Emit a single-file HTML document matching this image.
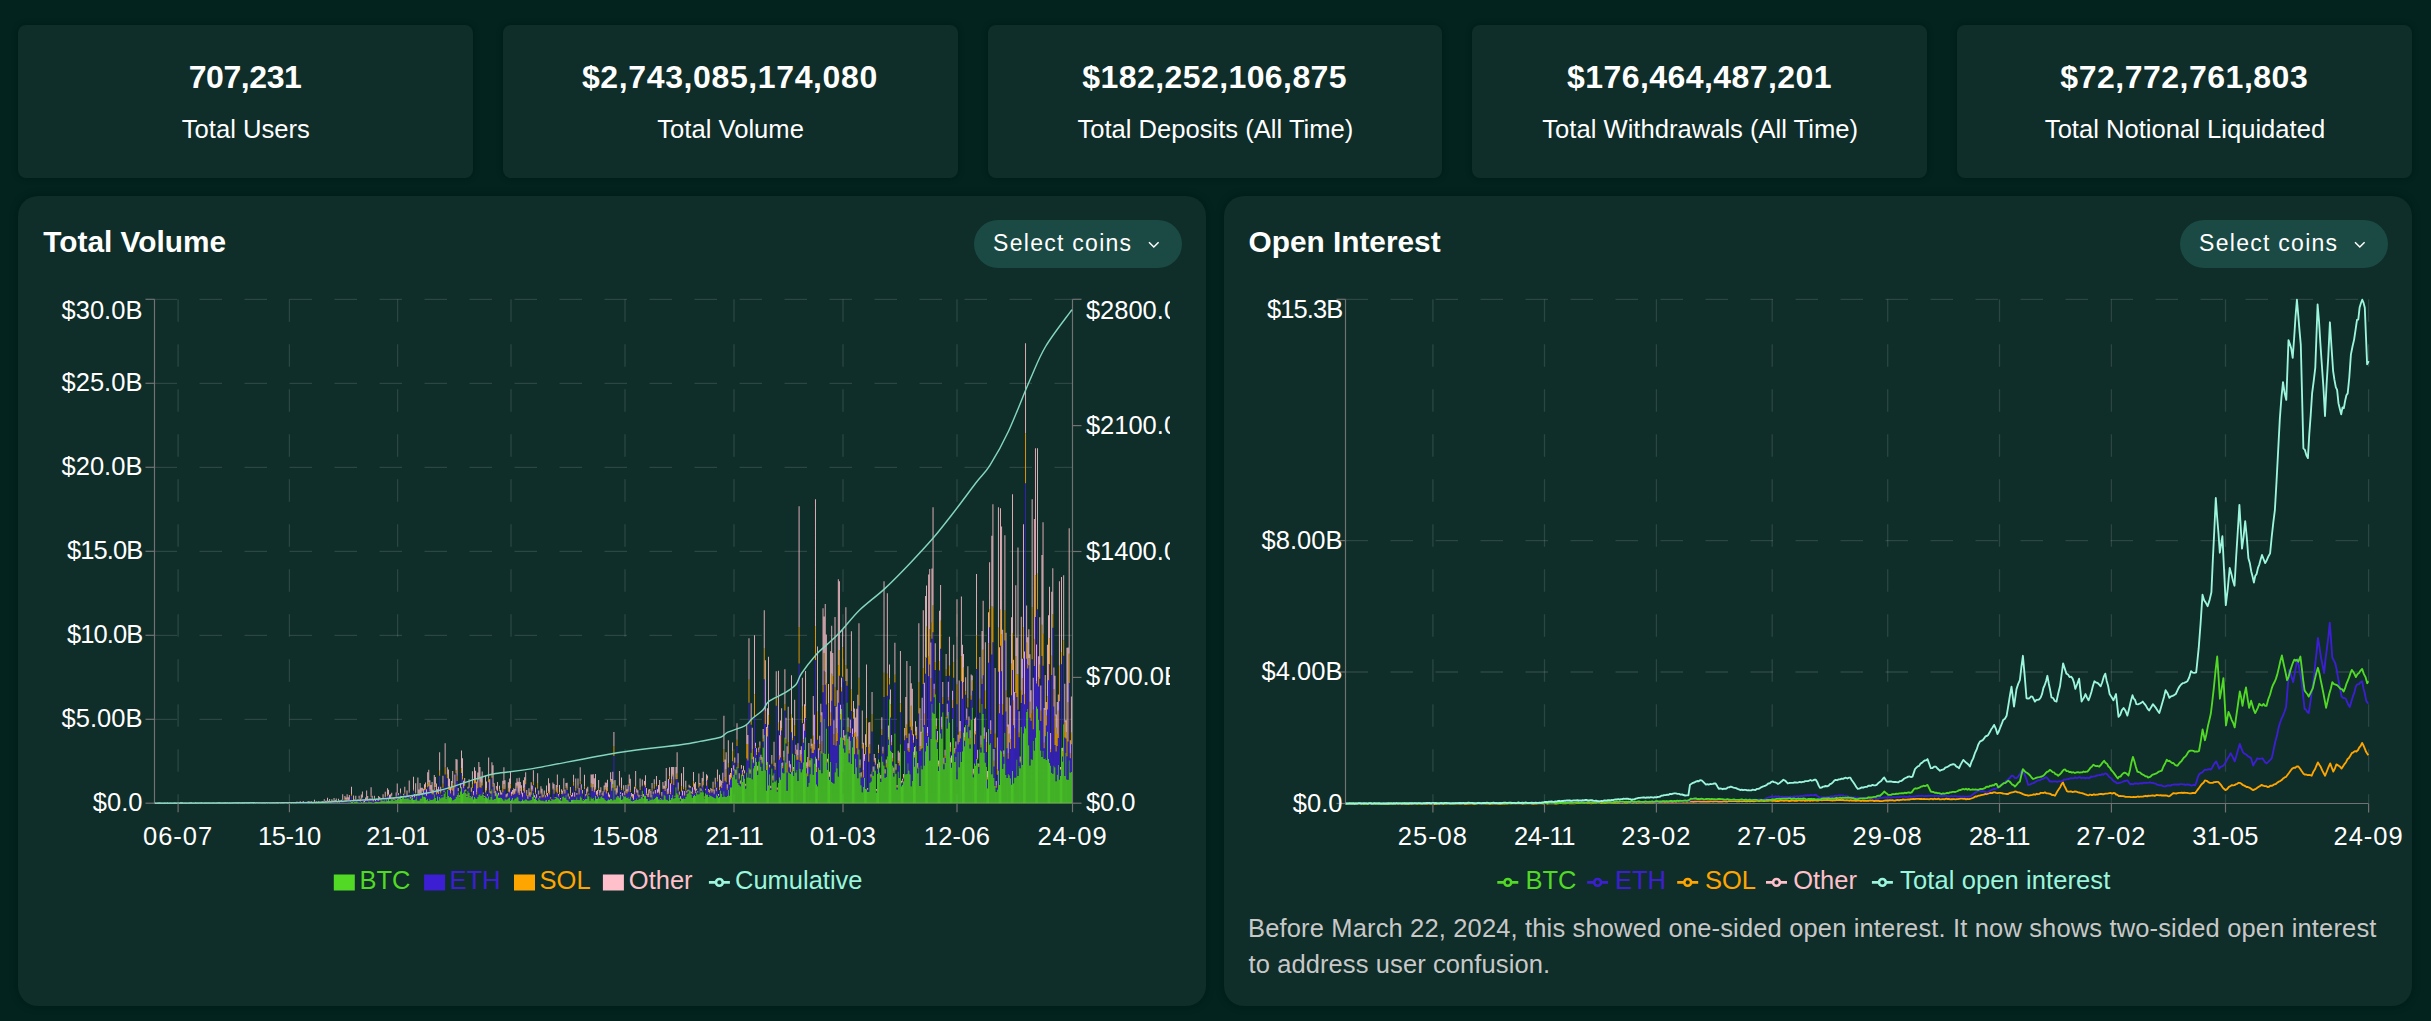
<!DOCTYPE html>
<html><head><meta charset="utf-8"><style>
html,body{margin:0;padding:0;width:2431px;height:1021px;overflow:hidden;background:#02231e;font-family:"Liberation Sans", sans-serif;}
.t{position:absolute;white-space:nowrap;}
.card{position:absolute;background:#0f2d29;border-radius:8px;box-shadow:0 0 6px rgba(0,0,0,0.25);}
.panel{position:absolute;background:#0f2d29;border-radius:20px;box-shadow:0 0 8px rgba(0,0,0,0.25);}
.btn{position:absolute;background:#1b4a44;border-radius:24px;}
svg{overflow:visible}
</style></head><body>

<div class="card" style="left:18.0px;top:25px;width:454.8px;height:153px"></div>
<div class="card" style="left:502.8px;top:25px;width:454.8px;height:153px"></div>
<div class="card" style="left:987.6px;top:25px;width:454.8px;height:153px"></div>
<div class="card" style="left:1472.4px;top:25px;width:454.8px;height:153px"></div>
<div class="card" style="left:1957.2px;top:25px;width:454.8px;height:153px"></div>
<div class="panel" style="left:18px;top:196px;width:1188px;height:810px"></div>
<div class="panel" style="left:1224px;top:196px;width:1188px;height:810px"></div>
<div class="btn" style="left:974px;top:220px;width:208px;height:48px"></div>
<div class="btn" style="left:2180px;top:220px;width:208px;height:48px"></div>
<svg style="position:absolute;left:0;top:0" width="2431" height="1021"><line x1="154.5" y1="299.3" x2="1072.5" y2="299.3" stroke="rgba(255,255,255,0.12)" stroke-width="1.3" stroke-dasharray="22.5 22.5"/><line x1="154.5" y1="383.3" x2="1072.5" y2="383.3" stroke="rgba(255,255,255,0.12)" stroke-width="1.3" stroke-dasharray="22.5 22.5"/><line x1="154.5" y1="467.3" x2="1072.5" y2="467.3" stroke="rgba(255,255,255,0.12)" stroke-width="1.3" stroke-dasharray="22.5 22.5"/><line x1="154.5" y1="551.3" x2="1072.5" y2="551.3" stroke="rgba(255,255,255,0.12)" stroke-width="1.3" stroke-dasharray="22.5 22.5"/><line x1="154.5" y1="635.3" x2="1072.5" y2="635.3" stroke="rgba(255,255,255,0.12)" stroke-width="1.3" stroke-dasharray="22.5 22.5"/><line x1="154.5" y1="719.3" x2="1072.5" y2="719.3" stroke="rgba(255,255,255,0.12)" stroke-width="1.3" stroke-dasharray="22.5 22.5"/><line x1="178.1" y1="299.3" x2="178.1" y2="803.2" stroke="rgba(255,255,255,0.12)" stroke-width="1.3" stroke-dasharray="22.5 22.5"/><line x1="289.4" y1="299.3" x2="289.4" y2="803.2" stroke="rgba(255,255,255,0.12)" stroke-width="1.3" stroke-dasharray="22.5 22.5"/><line x1="397.6" y1="299.3" x2="397.6" y2="803.2" stroke="rgba(255,255,255,0.12)" stroke-width="1.3" stroke-dasharray="22.5 22.5"/><line x1="511" y1="299.3" x2="511" y2="803.2" stroke="rgba(255,255,255,0.12)" stroke-width="1.3" stroke-dasharray="22.5 22.5"/><line x1="625" y1="299.3" x2="625" y2="803.2" stroke="rgba(255,255,255,0.12)" stroke-width="1.3" stroke-dasharray="22.5 22.5"/><line x1="734" y1="299.3" x2="734" y2="803.2" stroke="rgba(255,255,255,0.12)" stroke-width="1.3" stroke-dasharray="22.5 22.5"/><line x1="843" y1="299.3" x2="843" y2="803.2" stroke="rgba(255,255,255,0.12)" stroke-width="1.3" stroke-dasharray="22.5 22.5"/><line x1="957" y1="299.3" x2="957" y2="803.2" stroke="rgba(255,255,255,0.12)" stroke-width="1.3" stroke-dasharray="22.5 22.5"/><path d="M154.5 299.3 V803.2 H1072.5 V299.3" fill="none" stroke="#727272" stroke-width="1.2"/><path d="M304.20 803.14h0.86V803.20h-0.86zM305.29 803.13h0.86V803.20h-0.86zM306.38 803.14h0.86V803.20h-0.86zM308.56 803.11h0.86V803.20h-0.86zM309.65 803.14h0.86V803.20h-0.86zM310.74 803.14h0.86V803.20h-0.86zM311.83 803.11h0.86V803.20h-0.86zM312.92 803.08h0.86V803.20h-0.86zM314.00 803.13h0.86V803.20h-0.86zM315.09 803.08h0.86V803.20h-0.86zM316.18 802.89h0.86V803.20h-0.86zM317.27 803.06h0.86V803.20h-0.86zM318.36 802.99h0.86V803.20h-0.86zM319.45 802.93h0.86V803.20h-0.86zM320.54 803.03h0.86V803.20h-0.86zM321.63 802.99h0.86V803.20h-0.86zM322.72 803.08h0.86V803.20h-0.86zM323.81 802.95h0.86V803.20h-0.86zM324.90 802.99h0.86V803.20h-0.86zM325.98 802.89h0.86V803.20h-0.86zM327.07 802.89h0.86V803.20h-0.86zM328.16 803.08h0.86V803.20h-0.86zM329.25 802.99h0.86V803.20h-0.86zM330.34 802.97h0.86V803.20h-0.86zM331.43 802.97h0.86V803.20h-0.86zM332.52 802.91h0.86V803.20h-0.86zM333.61 802.91h0.86V803.20h-0.86zM334.70 802.88h0.86V803.20h-0.86zM335.79 802.87h0.86V803.20h-0.86zM336.88 802.89h0.86V803.20h-0.86zM337.96 802.80h0.86V803.20h-0.86zM339.05 802.88h0.86V803.20h-0.86zM340.14 802.89h0.86V803.20h-0.86zM341.23 802.82h0.86V803.20h-0.86zM342.32 802.50h0.86V803.20h-0.86zM343.41 802.92h0.86V803.20h-0.86zM344.50 802.73h0.86V803.20h-0.86zM345.59 802.72h0.86V803.20h-0.86zM346.68 802.73h0.86V803.20h-0.86zM347.77 802.54h0.86V803.20h-0.86zM348.86 802.46h0.86V803.20h-0.86zM349.94 802.46h0.86V803.20h-0.86zM351.03 801.70h0.86V803.20h-0.86zM352.12 801.58h0.86V803.20h-0.86zM353.21 802.60h0.86V803.20h-0.86zM354.30 801.82h0.86V803.20h-0.86zM355.39 802.08h0.86V803.20h-0.86zM356.48 801.29h0.86V803.20h-0.86zM357.57 802.34h0.86V803.20h-0.86zM358.66 802.47h0.86V803.20h-0.86zM359.75 802.72h0.86V803.20h-0.86zM360.83 802.00h0.86V803.20h-0.86zM361.92 802.41h0.86V803.20h-0.86zM363.01 802.64h0.86V803.20h-0.86zM364.10 802.62h0.86V803.20h-0.86zM365.19 802.22h0.86V803.20h-0.86zM366.28 802.30h0.86V803.20h-0.86zM367.37 802.55h0.86V803.20h-0.86zM368.46 801.71h0.86V803.20h-0.86zM369.55 802.13h0.86V803.20h-0.86zM370.64 801.69h0.86V803.20h-0.86zM371.73 802.56h0.86V803.20h-0.86zM372.81 802.75h0.86V803.20h-0.86zM373.90 802.17h0.86V803.20h-0.86zM374.99 801.62h0.86V803.20h-0.86zM376.08 801.60h0.86V803.20h-0.86zM377.17 801.95h0.86V803.20h-0.86zM378.26 802.01h0.86V803.20h-0.86zM379.35 801.99h0.86V803.20h-0.86zM380.44 800.91h0.86V803.20h-0.86zM381.53 800.99h0.86V803.20h-0.86zM382.62 801.04h0.86V803.20h-0.86zM383.71 799.77h0.86V803.20h-0.86zM384.79 801.29h0.86V803.20h-0.86zM385.88 800.93h0.86V803.20h-0.86zM386.97 800.63h0.86V803.20h-0.86zM388.06 799.09h0.86V803.20h-0.86zM389.15 800.99h0.86V803.20h-0.86zM390.24 800.55h0.86V803.20h-0.86zM391.33 798.17h0.86V803.20h-0.86zM392.42 799.53h0.86V803.20h-0.86zM393.51 800.84h0.86V803.20h-0.86zM394.60 800.12h0.86V803.20h-0.86zM395.69 800.05h0.86V803.20h-0.86zM396.77 798.87h0.86V803.20h-0.86zM397.86 797.38h0.86V803.20h-0.86zM398.95 799.57h0.86V803.20h-0.86zM400.04 795.68h0.86V803.20h-0.86zM401.13 799.02h0.86V803.20h-0.86zM402.22 797.94h0.86V803.20h-0.86zM403.31 796.16h0.86V803.20h-0.86zM404.40 798.85h0.86V803.20h-0.86zM405.49 798.80h0.86V803.20h-0.86zM406.58 798.43h0.86V803.20h-0.86zM407.67 798.11h0.86V803.20h-0.86zM408.75 799.18h0.86V803.20h-0.86zM409.84 799.53h0.86V803.20h-0.86zM410.93 798.13h0.86V803.20h-0.86zM412.02 797.83h0.86V803.20h-0.86zM413.11 799.75h0.86V803.20h-0.86zM414.20 799.91h0.86V803.20h-0.86zM415.29 799.37h0.86V803.20h-0.86zM416.38 796.77h0.86V803.20h-0.86zM417.47 800.42h0.86V803.20h-0.86zM418.56 800.60h0.86V803.20h-0.86zM419.64 798.49h0.86V803.20h-0.86zM420.73 798.59h0.86V803.20h-0.86zM421.82 793.87h0.86V803.20h-0.86zM422.91 796.48h0.86V803.20h-0.86zM424.00 796.77h0.86V803.20h-0.86zM425.09 797.31h0.86V803.20h-0.86zM426.18 799.71h0.86V803.20h-0.86zM427.27 798.77h0.86V803.20h-0.86zM428.36 800.66h0.86V803.20h-0.86zM429.45 798.38h0.86V803.20h-0.86zM430.54 800.07h0.86V803.20h-0.86zM431.62 799.74h0.86V803.20h-0.86zM432.71 799.25h0.86V803.20h-0.86zM433.80 794.21h0.86V803.20h-0.86zM434.89 797.90h0.86V803.20h-0.86zM435.98 800.63h0.86V803.20h-0.86zM437.07 796.35h0.86V803.20h-0.86zM438.16 800.22h0.86V803.20h-0.86zM439.25 797.09h0.86V803.20h-0.86zM440.34 798.23h0.86V803.20h-0.86zM441.43 797.33h0.86V803.20h-0.86zM442.52 797.24h0.86V803.20h-0.86zM443.60 793.64h0.86V803.20h-0.86zM444.69 791.68h0.86V803.20h-0.86zM445.78 798.46h0.86V803.20h-0.86zM446.87 789.77h0.86V803.20h-0.86zM447.96 795.94h0.86V803.20h-0.86zM449.05 797.23h0.86V803.20h-0.86zM450.14 797.11h0.86V803.20h-0.86zM451.23 797.72h0.86V803.20h-0.86zM452.32 800.30h0.86V803.20h-0.86zM453.41 799.76h0.86V803.20h-0.86zM454.50 798.99h0.86V803.20h-0.86zM455.58 797.02h0.86V803.20h-0.86zM456.67 795.09h0.86V803.20h-0.86zM457.76 792.45h0.86V803.20h-0.86zM458.85 797.33h0.86V803.20h-0.86zM459.94 791.33h0.86V803.20h-0.86zM461.03 786.88h0.86V803.20h-0.86zM462.12 793.74h0.86V803.20h-0.86zM463.21 792.58h0.86V803.20h-0.86zM464.30 789.90h0.86V803.20h-0.86zM465.39 792.86h0.86V803.20h-0.86zM466.48 796.76h0.86V803.20h-0.86zM467.56 790.95h0.86V803.20h-0.86zM468.65 792.64h0.86V803.20h-0.86zM469.74 798.04h0.86V803.20h-0.86zM470.83 796.77h0.86V803.20h-0.86zM471.92 795.76h0.86V803.20h-0.86zM473.01 799.19h0.86V803.20h-0.86zM474.10 796.98h0.86V803.20h-0.86zM475.19 798.31h0.86V803.20h-0.86zM476.28 798.69h0.86V803.20h-0.86zM477.37 797.02h0.86V803.20h-0.86zM478.45 795.00h0.86V803.20h-0.86zM479.54 793.97h0.86V803.20h-0.86zM480.63 795.73h0.86V803.20h-0.86zM481.72 794.00h0.86V803.20h-0.86zM482.81 795.10h0.86V803.20h-0.86zM483.90 797.86h0.86V803.20h-0.86zM484.99 796.13h0.86V803.20h-0.86zM486.08 797.30h0.86V803.20h-0.86zM487.17 798.33h0.86V803.20h-0.86zM488.26 796.35h0.86V803.20h-0.86zM489.35 799.54h0.86V803.20h-0.86zM490.43 796.88h0.86V803.20h-0.86zM491.52 789.29h0.86V803.20h-0.86zM492.61 799.86h0.86V803.20h-0.86zM493.70 798.92h0.86V803.20h-0.86zM494.79 798.63h0.86V803.20h-0.86zM495.88 792.59h0.86V803.20h-0.86zM496.97 794.24h0.86V803.20h-0.86zM498.06 797.38h0.86V803.20h-0.86zM499.15 797.78h0.86V803.20h-0.86zM500.24 797.39h0.86V803.20h-0.86zM501.33 797.88h0.86V803.20h-0.86zM502.41 799.34h0.86V803.20h-0.86zM503.50 800.46h0.86V803.20h-0.86zM504.59 798.44h0.86V803.20h-0.86zM505.68 799.42h0.86V803.20h-0.86zM506.77 799.24h0.86V803.20h-0.86zM507.86 798.29h0.86V803.20h-0.86zM508.95 797.57h0.86V803.20h-0.86zM510.04 800.86h0.86V803.20h-0.86zM511.13 799.53h0.86V803.20h-0.86zM512.22 797.76h0.86V803.20h-0.86zM513.31 800.29h0.86V803.20h-0.86zM514.39 798.38h0.86V803.20h-0.86zM515.48 798.34h0.86V803.20h-0.86zM516.57 796.51h0.86V803.20h-0.86zM517.66 797.20h0.86V803.20h-0.86zM518.75 800.69h0.86V803.20h-0.86zM519.84 801.13h0.86V803.20h-0.86zM520.93 801.03h0.86V803.20h-0.86zM522.02 799.30h0.86V803.20h-0.86zM523.11 800.38h0.86V803.20h-0.86zM524.20 800.36h0.86V803.20h-0.86zM525.29 799.19h0.86V803.20h-0.86zM526.37 799.58h0.86V803.20h-0.86zM527.46 800.58h0.86V803.20h-0.86zM528.55 800.53h0.86V803.20h-0.86zM529.64 800.34h0.86V803.20h-0.86zM530.73 799.89h0.86V803.20h-0.86zM531.82 797.09h0.86V803.20h-0.86zM532.91 793.00h0.86V803.20h-0.86zM534.00 798.97h0.86V803.20h-0.86zM535.09 797.04h0.86V803.20h-0.86zM536.18 800.03h0.86V803.20h-0.86zM537.26 800.66h0.86V803.20h-0.86zM538.35 797.96h0.86V803.20h-0.86zM539.44 799.45h0.86V803.20h-0.86zM540.53 800.52h0.86V803.20h-0.86zM541.62 800.43h0.86V803.20h-0.86zM542.71 800.61h0.86V803.20h-0.86zM543.80 801.25h0.86V803.20h-0.86zM544.89 800.30h0.86V803.20h-0.86zM545.98 799.74h0.86V803.20h-0.86zM547.07 801.38h0.86V803.20h-0.86zM548.16 799.93h0.86V803.20h-0.86zM549.24 799.54h0.86V803.20h-0.86zM550.33 800.70h0.86V803.20h-0.86zM551.42 800.10h0.86V803.20h-0.86zM552.51 799.15h0.86V803.20h-0.86zM553.60 799.55h0.86V803.20h-0.86zM554.69 798.66h0.86V803.20h-0.86zM555.78 797.03h0.86V803.20h-0.86zM556.87 797.50h0.86V803.20h-0.86zM557.96 798.23h0.86V803.20h-0.86zM559.05 799.16h0.86V803.20h-0.86zM560.14 800.24h0.86V803.20h-0.86zM561.22 800.45h0.86V803.20h-0.86zM562.31 796.68h0.86V803.20h-0.86zM563.40 796.31h0.86V803.20h-0.86zM564.49 797.68h0.86V803.20h-0.86zM565.58 794.96h0.86V803.20h-0.86zM566.67 799.69h0.86V803.20h-0.86zM567.76 800.30h0.86V803.20h-0.86zM568.85 801.76h0.86V803.20h-0.86zM569.94 801.87h0.86V803.20h-0.86zM571.03 799.66h0.86V803.20h-0.86zM572.12 799.69h0.86V803.20h-0.86zM573.20 799.52h0.86V803.20h-0.86zM574.29 799.66h0.86V803.20h-0.86zM575.38 799.81h0.86V803.20h-0.86zM576.47 797.31h0.86V803.20h-0.86zM577.56 800.04h0.86V803.20h-0.86zM578.65 799.89h0.86V803.20h-0.86zM579.74 796.32h0.86V803.20h-0.86zM580.83 797.48h0.86V803.20h-0.86zM581.92 800.13h0.86V803.20h-0.86zM583.01 800.40h0.86V803.20h-0.86zM584.10 799.71h0.86V803.20h-0.86zM585.18 798.99h0.86V803.20h-0.86zM586.27 799.09h0.86V803.20h-0.86zM587.36 794.60h0.86V803.20h-0.86zM588.45 796.16h0.86V803.20h-0.86zM589.54 800.64h0.86V803.20h-0.86zM590.63 797.35h0.86V803.20h-0.86zM591.72 798.87h0.86V803.20h-0.86zM592.81 797.93h0.86V803.20h-0.86zM593.90 800.35h0.86V803.20h-0.86zM594.99 796.04h0.86V803.20h-0.86zM596.07 798.77h0.86V803.20h-0.86zM597.16 798.52h0.86V803.20h-0.86zM598.25 796.49h0.86V803.20h-0.86zM599.34 798.58h0.86V803.20h-0.86zM600.43 796.69h0.86V803.20h-0.86zM601.52 795.86h0.86V803.20h-0.86zM602.61 798.10h0.86V803.20h-0.86zM603.70 798.30h0.86V803.20h-0.86zM604.79 799.75h0.86V803.20h-0.86zM605.88 800.67h0.86V803.20h-0.86zM606.97 800.25h0.86V803.20h-0.86zM608.05 799.23h0.86V803.20h-0.86zM609.14 799.89h0.86V803.20h-0.86zM610.23 798.75h0.86V803.20h-0.86zM611.32 798.95h0.86V803.20h-0.86zM612.41 800.29h0.86V803.20h-0.86zM613.50 780.50h0.86V803.20h-0.86zM614.59 799.41h0.86V803.20h-0.86zM615.68 797.24h0.86V803.20h-0.86zM616.77 795.99h0.86V803.20h-0.86zM617.86 798.11h0.86V803.20h-0.86zM618.95 797.48h0.86V803.20h-0.86zM620.03 794.99h0.86V803.20h-0.86zM621.12 800.05h0.86V803.20h-0.86zM622.21 799.33h0.86V803.20h-0.86zM623.30 795.93h0.86V803.20h-0.86zM624.39 796.44h0.86V803.20h-0.86zM625.48 796.27h0.86V803.20h-0.86zM626.57 797.96h0.86V803.20h-0.86zM627.66 797.11h0.86V803.20h-0.86zM628.75 798.76h0.86V803.20h-0.86zM629.84 796.52h0.86V803.20h-0.86zM630.93 800.98h0.86V803.20h-0.86zM632.01 801.37h0.86V803.20h-0.86zM633.10 800.94h0.86V803.20h-0.86zM634.19 800.21h0.86V803.20h-0.86zM635.28 800.03h0.86V803.20h-0.86zM636.37 798.28h0.86V803.20h-0.86zM637.46 800.07h0.86V803.20h-0.86zM638.55 798.60h0.86V803.20h-0.86zM639.64 798.80h0.86V803.20h-0.86zM640.73 797.04h0.86V803.20h-0.86zM641.82 790.80h0.86V803.20h-0.86zM642.90 798.33h0.86V803.20h-0.86zM643.99 795.49h0.86V803.20h-0.86zM645.08 795.73h0.86V803.20h-0.86zM646.17 798.71h0.86V803.20h-0.86zM647.26 798.79h0.86V803.20h-0.86zM648.35 800.96h0.86V803.20h-0.86zM649.44 799.13h0.86V803.20h-0.86zM650.53 799.67h0.86V803.20h-0.86zM651.62 795.05h0.86V803.20h-0.86zM652.71 799.43h0.86V803.20h-0.86zM653.80 798.99h0.86V803.20h-0.86zM654.88 797.71h0.86V803.20h-0.86zM655.97 796.56h0.86V803.20h-0.86zM657.06 796.79h0.86V803.20h-0.86zM658.15 799.20h0.86V803.20h-0.86zM659.24 799.13h0.86V803.20h-0.86zM660.33 799.49h0.86V803.20h-0.86zM661.42 799.08h0.86V803.20h-0.86zM662.51 799.70h0.86V803.20h-0.86zM663.60 794.44h0.86V803.20h-0.86zM664.69 795.42h0.86V803.20h-0.86zM665.78 799.57h0.86V803.20h-0.86zM666.86 799.63h0.86V803.20h-0.86zM667.95 800.87h0.86V803.20h-0.86zM669.04 794.93h0.86V803.20h-0.86zM670.13 799.85h0.86V803.20h-0.86zM671.22 798.11h0.86V803.20h-0.86zM672.31 795.09h0.86V803.20h-0.86zM673.40 798.45h0.86V803.20h-0.86zM674.49 797.63h0.86V803.20h-0.86zM675.58 787.19h0.86V803.20h-0.86zM676.67 793.24h0.86V803.20h-0.86zM677.76 794.63h0.86V803.20h-0.86zM678.84 798.07h0.86V803.20h-0.86zM679.93 800.46h0.86V803.20h-0.86zM681.02 798.35h0.86V803.20h-0.86zM682.11 799.12h0.86V803.20h-0.86zM683.20 798.23h0.86V803.20h-0.86zM684.29 799.06h0.86V803.20h-0.86zM685.38 796.92h0.86V803.20h-0.86zM686.47 793.81h0.86V803.20h-0.86zM687.56 793.19h0.86V803.20h-0.86zM688.65 789.43h0.86V803.20h-0.86zM689.74 790.38h0.86V803.20h-0.86zM690.82 794.58h0.86V803.20h-0.86zM691.91 797.64h0.86V803.20h-0.86zM693.00 795.88h0.86V803.20h-0.86zM694.09 794.69h0.86V803.20h-0.86zM695.18 795.96h0.86V803.20h-0.86zM696.27 792.35h0.86V803.20h-0.86zM697.36 794.27h0.86V803.20h-0.86zM698.45 794.26h0.86V803.20h-0.86zM699.54 788.02h0.86V803.20h-0.86zM700.63 792.25h0.86V803.20h-0.86zM701.71 790.23h0.86V803.20h-0.86zM702.80 792.13h0.86V803.20h-0.86zM703.89 798.22h0.86V803.20h-0.86zM704.98 793.20h0.86V803.20h-0.86zM706.07 794.59h0.86V803.20h-0.86zM707.16 794.41h0.86V803.20h-0.86zM708.25 797.07h0.86V803.20h-0.86zM709.34 795.11h0.86V803.20h-0.86zM710.43 795.76h0.86V803.20h-0.86zM711.52 796.13h0.86V803.20h-0.86zM712.61 796.95h0.86V803.20h-0.86zM713.69 797.63h0.86V803.20h-0.86zM714.78 798.28h0.86V803.20h-0.86zM715.87 794.32h0.86V803.20h-0.86zM716.96 796.04h0.86V803.20h-0.86zM718.05 797.45h0.86V803.20h-0.86zM719.14 797.00h0.86V803.20h-0.86zM720.23 790.43h0.86V803.20h-0.86zM721.32 793.75h0.86V803.20h-0.86zM722.41 796.93h0.86V803.20h-0.86zM723.50 791.16h0.86V803.20h-0.86zM724.59 796.44h0.86V803.20h-0.86zM725.67 797.01h0.86V803.20h-0.86zM726.76 796.12h0.86V803.20h-0.86zM727.85 789.81h0.86V803.20h-0.86zM728.94 795.57h0.86V803.20h-0.86zM730.03 787.22h0.86V803.20h-0.86zM731.12 787.22h0.86V803.20h-0.86zM732.21 777.36h0.86V803.20h-0.86zM733.30 774.71h0.86V803.20h-0.86zM734.39 768.94h0.86V803.20h-0.86zM735.48 779.31h0.86V803.20h-0.86zM736.57 766.70h0.86V803.20h-0.86zM737.65 782.94h0.86V803.20h-0.86zM738.74 784.88h0.86V803.20h-0.86zM739.83 786.23h0.86V803.20h-0.86zM740.92 774.59h0.86V803.20h-0.86zM742.01 782.11h0.86V803.20h-0.86zM743.10 775.03h0.86V803.20h-0.86zM744.19 778.44h0.86V803.20h-0.86zM745.28 788.54h0.86V803.20h-0.86zM746.37 772.39h0.86V803.20h-0.86zM747.46 777.61h0.86V803.20h-0.86zM748.55 767.63h0.86V803.20h-0.86zM749.63 777.91h0.86V803.20h-0.86zM750.72 752.68h0.86V803.20h-0.86zM751.81 779.34h0.86V803.20h-0.86zM752.90 768.28h0.86V803.20h-0.86zM753.99 765.95h0.86V803.20h-0.86zM755.08 757.80h0.86V803.20h-0.86zM756.17 762.03h0.86V803.20h-0.86zM757.26 775.07h0.86V803.20h-0.86zM758.35 761.50h0.86V803.20h-0.86zM759.44 756.84h0.86V803.20h-0.86zM760.52 766.85h0.86V803.20h-0.86zM761.61 771.09h0.86V803.20h-0.86zM762.70 747.54h0.86V803.20h-0.86zM763.79 735.12h0.86V803.20h-0.86zM764.88 770.29h0.86V803.20h-0.86zM765.97 790.52h0.86V803.20h-0.86zM767.06 761.94h0.86V803.20h-0.86zM768.15 785.18h0.86V803.20h-0.86zM769.24 774.35h0.86V803.20h-0.86zM770.33 790.02h0.86V803.20h-0.86zM771.42 768.57h0.86V803.20h-0.86zM772.50 782.40h0.86V803.20h-0.86zM773.59 773.36h0.86V803.20h-0.86zM774.68 781.42h0.86V803.20h-0.86zM775.77 780.36h0.86V803.20h-0.86zM776.86 791.49h0.86V803.20h-0.86zM777.95 782.86h0.86V803.20h-0.86zM779.04 777.28h0.86V803.20h-0.86zM780.13 779.62h0.86V803.20h-0.86zM781.22 762.80h0.86V803.20h-0.86zM782.31 772.62h0.86V803.20h-0.86zM783.40 773.19h0.86V803.20h-0.86zM784.48 737.54h0.86V803.20h-0.86zM785.57 762.58h0.86V803.20h-0.86zM786.66 790.69h0.86V803.20h-0.86zM787.75 771.40h0.86V803.20h-0.86zM788.84 773.05h0.86V803.20h-0.86zM789.93 773.97h0.86V803.20h-0.86zM791.02 771.48h0.86V803.20h-0.86zM792.11 753.50h0.86V803.20h-0.86zM793.20 776.07h0.86V803.20h-0.86zM794.29 754.93h0.86V803.20h-0.86zM795.38 772.39h0.86V803.20h-0.86zM796.46 770.10h0.86V803.20h-0.86zM797.55 781.07h0.86V803.20h-0.86zM798.64 762.03h0.86V803.20h-0.86zM799.73 768.69h0.86V803.20h-0.86zM800.82 772.25h0.86V803.20h-0.86zM801.91 769.17h0.86V803.20h-0.86zM803.00 762.30h0.86V803.20h-0.86zM804.09 749.98h0.86V803.20h-0.86zM805.18 737.27h0.86V803.20h-0.86zM806.27 773.18h0.86V803.20h-0.86zM807.36 786.72h0.86V803.20h-0.86zM808.44 782.83h0.86V803.20h-0.86zM809.53 774.16h0.86V803.20h-0.86zM810.62 758.05h0.86V803.20h-0.86zM811.71 758.59h0.86V803.20h-0.86zM812.80 774.63h0.86V803.20h-0.86zM813.89 763.44h0.86V803.20h-0.86zM814.98 756.45h0.86V803.20h-0.86zM816.07 784.20h0.86V803.20h-0.86zM817.16 786.22h0.86V803.20h-0.86zM818.25 767.41h0.86V803.20h-0.86zM819.33 769.98h0.86V803.20h-0.86zM820.42 751.04h0.86V803.20h-0.86zM821.51 773.36h0.86V803.20h-0.86zM822.60 753.08h0.86V803.20h-0.86zM823.69 718.86h0.86V803.20h-0.86zM824.78 753.70h0.86V803.20h-0.86zM825.87 728.61h0.86V803.20h-0.86zM826.96 769.81h0.86V803.20h-0.86zM828.05 753.60h0.86V803.20h-0.86zM829.14 779.65h0.86V803.20h-0.86zM830.23 761.88h0.86V803.20h-0.86zM831.31 782.02h0.86V803.20h-0.86zM832.40 782.72h0.86V803.20h-0.86zM833.49 783.43h0.86V803.20h-0.86zM834.58 772.34h0.86V803.20h-0.86zM835.67 762.74h0.86V803.20h-0.86zM836.76 768.33h0.86V803.20h-0.86zM837.85 776.58h0.86V803.20h-0.86zM838.94 744.58h0.86V803.20h-0.86zM840.03 737.21h0.86V803.20h-0.86zM841.12 709.07h0.86V803.20h-0.86zM842.21 737.49h0.86V803.20h-0.86zM843.29 748.21h0.86V803.20h-0.86zM844.38 752.42h0.86V803.20h-0.86zM845.47 734.54h0.86V803.20h-0.86zM846.56 702.45h0.86V803.20h-0.86zM847.65 738.87h0.86V803.20h-0.86zM848.74 762.23h0.86V803.20h-0.86zM849.83 740.65h0.86V803.20h-0.86zM850.92 764.05h0.86V803.20h-0.86zM852.01 747.17h0.86V803.20h-0.86zM853.10 736.79h0.86V803.20h-0.86zM854.19 774.02h0.86V803.20h-0.86zM855.27 758.58h0.86V803.20h-0.86zM856.36 767.18h0.86V803.20h-0.86zM857.45 778.35h0.86V803.20h-0.86zM858.54 749.46h0.86V803.20h-0.86zM859.63 772.98h0.86V803.20h-0.86zM860.72 785.16h0.86V803.20h-0.86zM861.81 792.16h0.86V803.20h-0.86zM862.90 786.96h0.86V803.20h-0.86zM863.99 777.81h0.86V803.20h-0.86zM865.08 788.65h0.86V803.20h-0.86zM866.17 789.14h0.86V803.20h-0.86zM867.25 791.75h0.86V803.20h-0.86zM868.34 791.72h0.86V803.20h-0.86zM869.43 782.85h0.86V803.20h-0.86zM870.52 781.55h0.86V803.20h-0.86zM871.61 771.47h0.86V803.20h-0.86zM872.70 775.63h0.86V803.20h-0.86zM873.79 766.33h0.86V803.20h-0.86zM874.88 770.38h0.86V803.20h-0.86zM875.97 792.52h0.86V803.20h-0.86zM877.06 773.70h0.86V803.20h-0.86zM878.14 759.35h0.86V803.20h-0.86zM879.23 772.46h0.86V803.20h-0.86zM880.32 782.05h0.86V803.20h-0.86zM881.41 756.37h0.86V803.20h-0.86zM882.50 761.80h0.86V803.20h-0.86zM883.59 765.53h0.86V803.20h-0.86zM884.68 777.71h0.86V803.20h-0.86zM885.77 777.12h0.86V803.20h-0.86zM886.86 756.15h0.86V803.20h-0.86zM887.95 744.90h0.86V803.20h-0.86zM889.04 699.20h0.86V803.20h-0.86zM890.12 750.48h0.86V803.20h-0.86zM891.21 752.09h0.86V803.20h-0.86zM892.30 765.54h0.86V803.20h-0.86zM893.39 776.49h0.86V803.20h-0.86zM894.48 733.43h0.86V803.20h-0.86zM895.57 773.74h0.86V803.20h-0.86zM896.66 789.50h0.86V803.20h-0.86zM897.75 771.58h0.86V803.20h-0.86zM898.84 777.99h0.86V803.20h-0.86zM899.93 744.24h0.86V803.20h-0.86zM901.02 786.37h0.86V803.20h-0.86zM902.10 784.84h0.86V803.20h-0.86zM903.19 781.26h0.86V803.20h-0.86zM904.28 751.02h0.86V803.20h-0.86zM905.37 774.29h0.86V803.20h-0.86zM906.46 774.06h0.86V803.20h-0.86zM907.55 763.15h0.86V803.20h-0.86zM908.64 770.62h0.86V803.20h-0.86zM909.73 774.24h0.86V803.20h-0.86zM910.82 786.24h0.86V803.20h-0.86zM911.91 781.02h0.86V803.20h-0.86zM913.00 751.54h0.86V803.20h-0.86zM914.08 766.47h0.86V803.20h-0.86zM915.17 745.81h0.86V803.20h-0.86zM916.26 751.18h0.86V803.20h-0.86zM917.35 773.13h0.86V803.20h-0.86zM918.44 767.59h0.86V803.20h-0.86zM919.53 785.94h0.86V803.20h-0.86zM920.62 765.47h0.86V803.20h-0.86zM921.71 769.16h0.86V803.20h-0.86zM922.80 726.92h0.86V803.20h-0.86zM923.89 765.38h0.86V803.20h-0.86zM924.98 751.33h0.86V803.20h-0.86zM926.06 742.87h0.86V803.20h-0.86zM927.15 746.05h0.86V803.20h-0.86zM928.24 736.91h0.86V803.20h-0.86zM929.33 760.57h0.86V803.20h-0.86zM930.42 738.91h0.86V803.20h-0.86zM931.51 703.76h0.86V803.20h-0.86zM932.60 712.60h0.86V803.20h-0.86zM933.69 713.64h0.86V803.20h-0.86zM934.78 694.15h0.86V803.20h-0.86zM935.87 739.57h0.86V803.20h-0.86zM936.95 749.01h0.86V803.20h-0.86zM938.04 771.09h0.86V803.20h-0.86zM939.13 702.82h0.86V803.20h-0.86zM940.22 733.31h0.86V803.20h-0.86zM941.31 738.38h0.86V803.20h-0.86zM942.40 712.26h0.86V803.20h-0.86zM943.49 769.19h0.86V803.20h-0.86zM944.58 763.05h0.86V803.20h-0.86zM945.67 716.79h0.86V803.20h-0.86zM946.76 728.60h0.86V803.20h-0.86zM947.85 712.05h0.86V803.20h-0.86zM948.93 722.48h0.86V803.20h-0.86zM950.02 757.54h0.86V803.20h-0.86zM951.11 767.50h0.86V803.20h-0.86zM952.20 718.79h0.86V803.20h-0.86zM953.29 738.12h0.86V803.20h-0.86zM954.38 761.88h0.86V803.20h-0.86zM955.47 757.00h0.86V803.20h-0.86zM956.56 779.36h0.86V803.20h-0.86zM957.65 751.92h0.86V803.20h-0.86zM958.74 767.31h0.86V803.20h-0.86zM959.83 752.10h0.86V803.20h-0.86zM960.91 761.94h0.86V803.20h-0.86zM962.00 751.34h0.86V803.20h-0.86zM963.09 732.49h0.86V803.20h-0.86zM964.18 746.26h0.86V803.20h-0.86zM965.27 724.96h0.86V803.20h-0.86zM966.36 732.25h0.86V803.20h-0.86zM967.45 724.64h0.86V803.20h-0.86zM968.54 738.17h0.86V803.20h-0.86zM969.63 748.52h0.86V803.20h-0.86zM970.72 719.76h0.86V803.20h-0.86zM971.81 707.42h0.86V803.20h-0.86zM972.89 777.36h0.86V803.20h-0.86zM973.98 763.37h0.86V803.20h-0.86zM975.07 765.39h0.86V803.20h-0.86zM976.16 758.89h0.86V803.20h-0.86zM977.25 763.19h0.86V803.20h-0.86zM978.34 773.46h0.86V803.20h-0.86zM979.43 749.25h0.86V803.20h-0.86zM980.52 752.53h0.86V803.20h-0.86zM981.61 704.12h0.86V803.20h-0.86zM982.70 713.99h0.86V803.20h-0.86zM983.79 752.74h0.86V803.20h-0.86zM984.87 762.59h0.86V803.20h-0.86zM985.96 766.84h0.86V803.20h-0.86zM987.05 788.34h0.86V803.20h-0.86zM988.14 728.94h0.86V803.20h-0.86zM989.23 744.54h0.86V803.20h-0.86zM990.32 743.05h0.86V803.20h-0.86zM991.41 774.33h0.86V803.20h-0.86zM992.50 748.87h0.86V803.20h-0.86zM993.59 778.02h0.86V803.20h-0.86zM994.68 785.94h0.86V803.20h-0.86zM995.76 792.03h0.86V803.20h-0.86zM996.85 789.58h0.86V803.20h-0.86zM997.94 770.41h0.86V803.20h-0.86zM999.03 784.98h0.86V803.20h-0.86zM1000.12 750.36h0.86V803.20h-0.86zM1001.21 751.28h0.86V803.20h-0.86zM1002.30 768.69h0.86V803.20h-0.86zM1003.39 763.74h0.86V803.20h-0.86zM1004.48 732.68h0.86V803.20h-0.86zM1005.57 775.10h0.86V803.20h-0.86zM1006.66 777.89h0.86V803.20h-0.86zM1007.74 773.96h0.86V803.20h-0.86zM1008.83 775.28h0.86V803.20h-0.86zM1009.92 778.32h0.86V803.20h-0.86zM1011.01 784.48h0.86V803.20h-0.86zM1012.10 770.89h0.86V803.20h-0.86zM1013.19 783.15h0.86V803.20h-0.86zM1014.28 777.50h0.86V803.20h-0.86zM1015.37 777.56h0.86V803.20h-0.86zM1016.46 759.50h0.86V803.20h-0.86zM1017.55 776.07h0.86V803.20h-0.86zM1018.64 765.90h0.86V803.20h-0.86zM1019.72 768.14h0.86V803.20h-0.86zM1020.81 726.97h0.86V803.20h-0.86zM1021.90 765.04h0.86V803.20h-0.86zM1022.99 733.37h0.86V803.20h-0.86zM1024.08 726.24h0.86V803.20h-0.86zM1025.17 728.20h0.86V803.20h-0.86zM1026.26 711.94h0.86V803.20h-0.86zM1027.35 709.07h0.86V803.20h-0.86zM1028.44 745.29h0.86V803.20h-0.86zM1029.53 765.47h0.86V803.20h-0.86zM1030.62 758.75h0.86V803.20h-0.86zM1031.70 759.66h0.86V803.20h-0.86zM1032.79 740.66h0.86V803.20h-0.86zM1033.88 750.49h0.86V803.20h-0.86zM1034.97 737.56h0.86V803.20h-0.86zM1036.06 706.37h0.86V803.20h-0.86zM1037.15 708.44h0.86V803.20h-0.86zM1038.24 719.54h0.86V803.20h-0.86zM1039.33 730.18h0.86V803.20h-0.86zM1040.42 750.54h0.86V803.20h-0.86zM1041.51 756.90h0.86V803.20h-0.86zM1042.60 750.99h0.86V803.20h-0.86zM1043.68 758.98h0.86V803.20h-0.86zM1044.77 758.13h0.86V803.20h-0.86zM1045.86 760.07h0.86V803.20h-0.86zM1046.95 731.48h0.86V803.20h-0.86zM1048.04 758.82h0.86V803.20h-0.86zM1049.13 762.91h0.86V803.20h-0.86zM1050.22 765.60h0.86V803.20h-0.86zM1051.31 772.69h0.86V803.20h-0.86zM1052.40 773.84h0.86V803.20h-0.86zM1053.49 765.42h0.86V803.20h-0.86zM1054.57 767.25h0.86V803.20h-0.86zM1055.66 781.27h0.86V803.20h-0.86zM1056.75 774.63h0.86V803.20h-0.86zM1057.84 765.08h0.86V803.20h-0.86zM1058.93 779.61h0.86V803.20h-0.86zM1060.02 775.99h0.86V803.20h-0.86zM1061.11 747.76h0.86V803.20h-0.86zM1062.20 761.59h0.86V803.20h-0.86zM1063.29 724.23h0.86V803.20h-0.86zM1064.38 775.93h0.86V803.20h-0.86zM1065.47 752.98h0.86V803.20h-0.86zM1066.55 779.59h0.86V803.20h-0.86zM1067.64 779.72h0.86V803.20h-0.86zM1068.73 760.28h0.86V803.20h-0.86zM1069.82 772.59h0.86V803.20h-0.86zM1070.91 772.09h0.86V803.20h-0.86z" fill="#52d926"/><path d="M155.00 803.13h0.86V803.20h-0.86zM156.09 803.15h0.86V803.20h-0.86zM158.27 803.12h0.86V803.20h-0.86zM164.80 803.11h0.86V803.20h-0.86zM166.98 803.07h0.86V803.20h-0.86zM170.25 803.13h0.86V803.20h-0.86zM174.60 803.14h0.86V803.20h-0.86zM177.87 803.14h0.86V803.20h-0.86zM180.05 803.12h0.86V803.20h-0.86zM181.14 803.13h0.86V803.20h-0.86zM182.23 803.13h0.86V803.20h-0.86zM184.40 803.14h0.86V803.20h-0.86zM185.49 803.14h0.86V803.20h-0.86zM188.76 803.02h0.86V803.20h-0.86zM189.85 803.13h0.86V803.20h-0.86zM190.94 803.11h0.86V803.20h-0.86zM192.03 803.15h0.86V803.20h-0.86zM195.30 803.02h0.86V803.20h-0.86zM198.56 803.12h0.86V803.20h-0.86zM199.65 803.11h0.86V803.20h-0.86zM200.74 803.14h0.86V803.20h-0.86zM201.83 803.08h0.86V803.20h-0.86zM205.10 803.15h0.86V803.20h-0.86zM207.28 803.15h0.86V803.20h-0.86zM208.36 803.14h0.86V803.20h-0.86zM212.72 803.14h0.86V803.20h-0.86zM218.17 803.03h0.86V803.20h-0.86zM219.26 803.15h0.86V803.20h-0.86zM223.61 803.14h0.86V803.20h-0.86zM224.70 803.14h0.86V803.20h-0.86zM225.79 803.15h0.86V803.20h-0.86zM226.88 803.09h0.86V803.20h-0.86zM233.41 803.08h0.86V803.20h-0.86zM234.50 803.10h0.86V803.20h-0.86zM235.59 803.02h0.86V803.20h-0.86zM237.77 803.14h0.86V803.20h-0.86zM238.86 803.10h0.86V803.20h-0.86zM242.13 803.13h0.86V803.20h-0.86zM243.21 803.14h0.86V803.20h-0.86zM245.39 803.08h0.86V803.20h-0.86zM249.75 803.12h0.86V803.20h-0.86zM250.84 803.06h0.86V803.20h-0.86zM251.93 803.12h0.86V803.20h-0.86zM254.11 803.07h0.86V803.20h-0.86zM256.28 803.12h0.86V803.20h-0.86zM257.37 803.07h0.86V803.20h-0.86zM258.46 803.15h0.86V803.20h-0.86zM259.55 803.12h0.86V803.20h-0.86zM262.82 803.14h0.86V803.20h-0.86zM266.09 803.08h0.86V803.20h-0.86zM268.26 803.10h0.86V803.20h-0.86zM275.89 803.13h0.86V803.20h-0.86zM279.15 803.09h0.86V803.20h-0.86zM281.33 803.15h0.86V803.20h-0.86zM282.42 803.15h0.86V803.20h-0.86zM283.51 803.13h0.86V803.20h-0.86zM284.60 803.09h0.86V803.20h-0.86zM285.69 803.09h0.86V803.20h-0.86zM286.78 803.13h0.86V803.20h-0.86zM288.96 803.03h0.86V803.20h-0.86zM290.05 803.09h0.86V803.20h-0.86zM291.13 803.13h0.86V803.20h-0.86zM292.22 803.04h0.86V803.20h-0.86zM293.31 803.14h0.86V803.20h-0.86zM294.40 803.10h0.86V803.20h-0.86zM296.58 803.02h0.86V803.20h-0.86zM297.67 803.12h0.86V803.20h-0.86zM298.76 803.04h0.86V803.20h-0.86zM299.85 803.08h0.86V803.20h-0.86zM300.94 802.83h0.86V803.20h-0.86zM302.02 802.73h0.86V803.20h-0.86zM303.11 802.70h0.86V803.20h-0.86zM304.20 802.75h0.86V803.14h-0.86zM305.29 803.01h0.86V803.13h-0.86zM306.38 802.95h0.86V803.14h-0.86zM307.47 802.73h0.86V803.20h-0.86zM308.56 802.41h0.86V803.11h-0.86zM309.65 802.75h0.86V803.14h-0.86zM310.74 802.10h0.86V803.14h-0.86zM311.83 802.95h0.86V803.11h-0.86zM312.92 802.78h0.86V803.08h-0.86zM314.00 801.83h0.86V803.13h-0.86zM315.09 802.86h0.86V803.08h-0.86zM316.18 802.37h0.86V802.89h-0.86zM317.27 802.72h0.86V803.06h-0.86zM318.36 802.39h0.86V802.99h-0.86zM319.45 802.50h0.86V802.93h-0.86zM320.54 802.65h0.86V803.03h-0.86zM321.63 802.61h0.86V802.99h-0.86zM322.72 801.85h0.86V803.08h-0.86zM323.81 800.98h0.86V802.95h-0.86zM324.90 802.12h0.86V802.99h-0.86zM325.98 801.82h0.86V802.89h-0.86zM327.07 801.18h0.86V802.89h-0.86zM328.16 802.06h0.86V803.08h-0.86zM329.25 801.94h0.86V802.99h-0.86zM330.34 802.39h0.86V802.97h-0.86zM331.43 801.87h0.86V802.97h-0.86zM332.52 801.94h0.86V802.91h-0.86zM333.61 801.37h0.86V802.91h-0.86zM334.70 802.07h0.86V802.88h-0.86zM335.79 801.51h0.86V802.87h-0.86zM336.88 802.63h0.86V802.89h-0.86zM337.96 801.00h0.86V802.80h-0.86zM339.05 802.39h0.86V802.88h-0.86zM340.14 801.48h0.86V802.89h-0.86zM341.23 801.58h0.86V802.82h-0.86zM342.32 800.12h0.86V802.50h-0.86zM343.41 802.24h0.86V802.92h-0.86zM344.50 800.77h0.86V802.73h-0.86zM345.59 801.82h0.86V802.72h-0.86zM346.68 800.88h0.86V802.73h-0.86zM347.77 800.62h0.86V802.54h-0.86zM348.86 800.39h0.86V802.46h-0.86zM349.94 801.71h0.86V802.46h-0.86zM351.03 795.83h0.86V801.70h-0.86zM352.12 801.06h0.86V801.58h-0.86zM353.21 801.43h0.86V802.60h-0.86zM354.30 801.01h0.86V801.82h-0.86zM355.39 800.02h0.86V802.08h-0.86zM356.48 801.14h0.86V801.29h-0.86zM357.57 800.99h0.86V802.34h-0.86zM358.66 798.64h0.86V802.47h-0.86zM359.75 801.67h0.86V802.72h-0.86zM360.83 799.12h0.86V802.00h-0.86zM361.92 797.87h0.86V802.41h-0.86zM363.01 802.39h0.86V802.64h-0.86zM364.10 802.21h0.86V802.62h-0.86zM365.19 800.76h0.86V802.22h-0.86zM366.28 799.66h0.86V802.30h-0.86zM367.37 800.72h0.86V802.55h-0.86zM368.46 801.46h0.86V801.71h-0.86zM369.55 800.28h0.86V802.13h-0.86zM370.64 796.96h0.86V801.69h-0.86zM371.73 800.22h0.86V802.56h-0.86zM372.81 801.43h0.86V802.75h-0.86zM373.90 799.36h0.86V802.17h-0.86zM374.99 801.01h0.86V801.62h-0.86zM376.08 800.02h0.86V801.60h-0.86zM377.17 800.45h0.86V801.95h-0.86zM378.26 800.91h0.86V802.01h-0.86zM379.35 799.36h0.86V801.99h-0.86zM380.44 800.38h0.86V800.91h-0.86zM381.53 800.57h0.86V800.99h-0.86zM382.62 798.95h0.86V801.04h-0.86zM383.71 799.27h0.86V799.77h-0.86zM384.79 797.34h0.86V801.29h-0.86zM385.88 800.50h0.86V800.93h-0.86zM386.97 796.18h0.86V800.63h-0.86zM388.06 794.88h0.86V799.09h-0.86zM389.15 799.24h0.86V800.99h-0.86zM390.24 799.18h0.86V800.55h-0.86zM391.33 796.17h0.86V798.17h-0.86zM392.42 799.33h0.86V799.53h-0.86zM393.51 799.68h0.86V800.84h-0.86zM394.60 799.76h0.86V800.12h-0.86zM395.69 798.20h0.86V800.05h-0.86zM396.77 793.18h0.86V798.87h-0.86zM397.86 795.23h0.86V797.38h-0.86zM398.95 799.34h0.86V799.57h-0.86zM400.04 793.57h0.86V795.68h-0.86zM401.13 798.09h0.86V799.02h-0.86zM402.22 797.50h0.86V797.94h-0.86zM403.31 795.49h0.86V796.16h-0.86zM404.40 793.70h0.86V798.85h-0.86zM405.49 798.35h0.86V798.80h-0.86zM406.58 795.98h0.86V798.43h-0.86zM407.67 797.15h0.86V798.11h-0.86zM408.75 792.74h0.86V799.18h-0.86zM409.84 798.75h0.86V799.53h-0.86zM410.93 797.45h0.86V798.13h-0.86zM412.02 797.27h0.86V797.83h-0.86zM413.11 790.79h0.86V799.75h-0.86zM414.20 797.48h0.86V799.91h-0.86zM415.29 793.55h0.86V799.37h-0.86zM416.38 796.33h0.86V796.77h-0.86zM417.47 794.72h0.86V800.42h-0.86zM418.56 796.05h0.86V800.60h-0.86zM419.64 794.45h0.86V798.49h-0.86zM420.73 795.22h0.86V798.59h-0.86zM421.82 791.51h0.86V793.87h-0.86zM422.91 794.27h0.86V796.48h-0.86zM424.00 790.31h0.86V796.77h-0.86zM425.09 789.44h0.86V797.31h-0.86zM426.18 795.94h0.86V799.71h-0.86zM427.27 787.13h0.86V798.77h-0.86zM428.36 786.19h0.86V800.66h-0.86zM429.45 791.12h0.86V798.38h-0.86zM430.54 793.11h0.86V800.07h-0.86zM431.62 794.32h0.86V799.74h-0.86zM432.71 794.62h0.86V799.25h-0.86zM433.80 790.35h0.86V794.21h-0.86zM434.89 786.90h0.86V797.90h-0.86zM435.98 794.46h0.86V800.63h-0.86zM437.07 792.63h0.86V796.35h-0.86zM438.16 794.10h0.86V800.22h-0.86zM439.25 775.80h0.86V797.09h-0.86zM440.34 793.38h0.86V798.23h-0.86zM441.43 796.01h0.86V797.33h-0.86zM442.52 787.65h0.86V797.24h-0.86zM443.60 791.94h0.86V793.64h-0.86zM444.69 774.39h0.86V791.68h-0.86zM445.78 797.62h0.86V798.46h-0.86zM446.87 778.32h0.86V789.77h-0.86zM447.96 789.38h0.86V795.94h-0.86zM449.05 790.06h0.86V797.23h-0.86zM450.14 793.47h0.86V797.11h-0.86zM451.23 789.81h0.86V797.72h-0.86zM452.32 790.65h0.86V800.30h-0.86zM453.41 795.87h0.86V799.76h-0.86zM454.50 787.45h0.86V798.99h-0.86zM455.58 773.32h0.86V797.02h-0.86zM456.67 780.97h0.86V795.09h-0.86zM457.76 791.35h0.86V792.45h-0.86zM458.85 796.90h0.86V797.33h-0.86zM459.94 788.32h0.86V791.33h-0.86zM461.03 773.05h0.86V786.88h-0.86zM462.12 779.44h0.86V793.74h-0.86zM463.21 788.16h0.86V792.58h-0.86zM464.30 785.66h0.86V789.90h-0.86zM465.39 791.40h0.86V792.86h-0.86zM466.48 795.93h0.86V796.76h-0.86zM467.56 788.98h0.86V790.95h-0.86zM468.65 787.92h0.86V792.64h-0.86zM469.74 797.57h0.86V798.04h-0.86zM470.83 792.06h0.86V796.77h-0.86zM471.92 788.06h0.86V795.76h-0.86zM473.01 795.32h0.86V799.19h-0.86zM474.10 783.49h0.86V796.98h-0.86zM475.19 783.22h0.86V798.31h-0.86zM476.28 794.48h0.86V798.69h-0.86zM477.37 788.35h0.86V797.02h-0.86zM478.45 780.15h0.86V795.00h-0.86zM479.54 787.19h0.86V793.97h-0.86zM480.63 787.67h0.86V795.73h-0.86zM481.72 785.49h0.86V794.00h-0.86zM482.81 793.90h0.86V795.10h-0.86zM483.90 797.04h0.86V797.86h-0.86zM484.99 792.43h0.86V796.13h-0.86zM486.08 790.52h0.86V797.30h-0.86zM487.17 795.99h0.86V798.33h-0.86zM488.26 782.22h0.86V796.35h-0.86zM489.35 792.72h0.86V799.54h-0.86zM490.43 793.63h0.86V796.88h-0.86zM491.52 777.86h0.86V789.29h-0.86zM492.61 786.76h0.86V799.86h-0.86zM493.70 792.98h0.86V798.92h-0.86zM494.79 796.26h0.86V798.63h-0.86zM495.88 789.87h0.86V792.59h-0.86zM496.97 791.10h0.86V794.24h-0.86zM498.06 795.39h0.86V797.38h-0.86zM499.15 791.21h0.86V797.78h-0.86zM500.24 794.81h0.86V797.39h-0.86zM501.33 794.85h0.86V797.88h-0.86zM502.41 792.14h0.86V799.34h-0.86zM503.50 788.81h0.86V800.46h-0.86zM504.59 789.20h0.86V798.44h-0.86zM505.68 797.56h0.86V799.42h-0.86zM506.77 796.49h0.86V799.24h-0.86zM507.86 791.68h0.86V798.29h-0.86zM508.95 792.58h0.86V797.57h-0.86zM510.04 788.38h0.86V800.86h-0.86zM511.13 795.69h0.86V799.53h-0.86zM512.22 794.37h0.86V797.76h-0.86zM513.31 794.72h0.86V800.29h-0.86zM514.39 793.88h0.86V798.38h-0.86zM515.48 791.61h0.86V798.34h-0.86zM516.57 787.72h0.86V796.51h-0.86zM517.66 793.36h0.86V797.20h-0.86zM518.75 794.96h0.86V800.69h-0.86zM519.84 790.98h0.86V801.13h-0.86zM520.93 794.20h0.86V801.03h-0.86zM522.02 797.30h0.86V799.30h-0.86zM523.11 790.63h0.86V800.38h-0.86zM524.20 792.80h0.86V800.36h-0.86zM525.29 784.34h0.86V799.19h-0.86zM526.37 795.65h0.86V799.58h-0.86zM527.46 799.09h0.86V800.58h-0.86zM528.55 796.17h0.86V800.53h-0.86zM529.64 796.98h0.86V800.34h-0.86zM530.73 794.87h0.86V799.89h-0.86zM531.82 790.83h0.86V797.09h-0.86zM532.91 784.88h0.86V793.00h-0.86zM534.00 797.56h0.86V798.97h-0.86zM535.09 793.75h0.86V797.04h-0.86zM536.18 798.28h0.86V800.03h-0.86zM537.26 788.68h0.86V800.66h-0.86zM538.35 794.68h0.86V797.96h-0.86zM539.44 798.17h0.86V799.45h-0.86zM540.53 793.85h0.86V800.52h-0.86zM541.62 797.44h0.86V800.43h-0.86zM542.71 797.14h0.86V800.61h-0.86zM543.80 795.35h0.86V801.25h-0.86zM544.89 797.39h0.86V800.30h-0.86zM545.98 795.10h0.86V799.74h-0.86zM547.07 796.76h0.86V801.38h-0.86zM548.16 793.10h0.86V799.93h-0.86zM549.24 794.50h0.86V799.54h-0.86zM550.33 798.71h0.86V800.70h-0.86zM551.42 799.65h0.86V800.10h-0.86zM552.51 789.42h0.86V799.15h-0.86zM553.60 793.81h0.86V799.55h-0.86zM554.69 797.99h0.86V798.66h-0.86zM555.78 791.82h0.86V797.03h-0.86zM556.87 793.22h0.86V797.50h-0.86zM557.96 796.51h0.86V798.23h-0.86zM559.05 794.36h0.86V799.16h-0.86zM560.14 799.44h0.86V800.24h-0.86zM561.22 793.94h0.86V800.45h-0.86zM562.31 794.24h0.86V796.68h-0.86zM563.40 791.26h0.86V796.31h-0.86zM564.49 793.67h0.86V797.68h-0.86zM565.58 788.25h0.86V794.96h-0.86zM566.67 789.89h0.86V799.69h-0.86zM567.76 796.79h0.86V800.30h-0.86zM568.85 798.97h0.86V801.76h-0.86zM569.94 795.28h0.86V801.87h-0.86zM571.03 797.10h0.86V799.66h-0.86zM572.12 796.43h0.86V799.69h-0.86zM573.20 785.73h0.86V799.52h-0.86zM574.29 796.95h0.86V799.66h-0.86zM575.38 790.76h0.86V799.81h-0.86zM576.47 794.89h0.86V797.31h-0.86zM577.56 788.40h0.86V800.04h-0.86zM578.65 794.47h0.86V799.89h-0.86zM579.74 784.02h0.86V796.32h-0.86zM580.83 789.94h0.86V797.48h-0.86zM581.92 793.82h0.86V800.13h-0.86zM583.01 800.10h0.86V800.40h-0.86zM584.10 789.10h0.86V799.71h-0.86zM585.18 796.24h0.86V798.99h-0.86zM586.27 795.23h0.86V799.09h-0.86zM587.36 792.29h0.86V794.60h-0.86zM588.45 794.64h0.86V796.16h-0.86zM589.54 800.35h0.86V800.64h-0.86zM590.63 787.26h0.86V797.35h-0.86zM591.72 790.98h0.86V798.87h-0.86zM592.81 787.35h0.86V797.93h-0.86zM593.90 792.33h0.86V800.35h-0.86zM594.99 789.55h0.86V796.04h-0.86zM596.07 794.98h0.86V798.77h-0.86zM597.16 796.52h0.86V798.52h-0.86zM598.25 790.72h0.86V796.49h-0.86zM599.34 795.35h0.86V798.58h-0.86zM600.43 792.71h0.86V796.69h-0.86zM601.52 794.57h0.86V795.86h-0.86zM602.61 795.93h0.86V798.10h-0.86zM603.70 791.75h0.86V798.30h-0.86zM604.79 789.56h0.86V799.75h-0.86zM605.88 793.41h0.86V800.67h-0.86zM606.97 791.12h0.86V800.25h-0.86zM608.05 796.73h0.86V799.23h-0.86zM609.14 797.53h0.86V799.89h-0.86zM610.23 781.76h0.86V798.75h-0.86zM611.32 790.74h0.86V798.95h-0.86zM612.41 787.86h0.86V800.29h-0.86zM613.50 756.00h0.86V780.50h-0.86zM614.59 790.44h0.86V799.41h-0.86zM615.68 794.84h0.86V797.24h-0.86zM616.77 793.14h0.86V795.99h-0.86zM617.86 797.70h0.86V798.11h-0.86zM618.95 786.58h0.86V797.48h-0.86zM620.03 793.97h0.86V794.99h-0.86zM621.12 789.90h0.86V800.05h-0.86zM622.21 796.36h0.86V799.33h-0.86zM623.30 790.46h0.86V795.93h-0.86zM624.39 795.18h0.86V796.44h-0.86zM625.48 792.56h0.86V796.27h-0.86zM626.57 793.42h0.86V797.96h-0.86zM627.66 791.78h0.86V797.11h-0.86zM628.75 785.81h0.86V798.76h-0.86zM629.84 792.06h0.86V796.52h-0.86zM630.93 796.72h0.86V800.98h-0.86zM632.01 797.66h0.86V801.37h-0.86zM633.10 800.06h0.86V800.94h-0.86zM634.19 794.15h0.86V800.21h-0.86zM635.28 788.87h0.86V800.03h-0.86zM636.37 792.70h0.86V798.28h-0.86zM637.46 795.72h0.86V800.07h-0.86zM638.55 797.62h0.86V798.60h-0.86zM639.64 790.02h0.86V798.80h-0.86zM640.73 795.71h0.86V797.04h-0.86zM641.82 786.17h0.86V790.80h-0.86zM642.90 796.98h0.86V798.33h-0.86zM643.99 785.55h0.86V795.49h-0.86zM645.08 787.16h0.86V795.73h-0.86zM646.17 794.95h0.86V798.71h-0.86zM647.26 796.72h0.86V798.79h-0.86zM648.35 797.03h0.86V800.96h-0.86zM649.44 793.26h0.86V799.13h-0.86zM650.53 797.42h0.86V799.67h-0.86zM651.62 790.85h0.86V795.05h-0.86zM652.71 794.36h0.86V799.43h-0.86zM653.80 788.74h0.86V798.99h-0.86zM654.88 793.81h0.86V797.71h-0.86zM655.97 786.30h0.86V796.56h-0.86zM657.06 793.12h0.86V796.79h-0.86zM658.15 792.58h0.86V799.20h-0.86zM659.24 794.59h0.86V799.13h-0.86zM660.33 799.10h0.86V799.49h-0.86zM661.42 796.45h0.86V799.08h-0.86zM662.51 789.02h0.86V799.70h-0.86zM663.60 789.00h0.86V794.44h-0.86zM664.69 790.99h0.86V795.42h-0.86zM665.78 787.99h0.86V799.57h-0.86zM666.86 794.29h0.86V799.63h-0.86zM667.95 793.64h0.86V800.87h-0.86zM669.04 779.30h0.86V794.93h-0.86zM670.13 794.16h0.86V799.85h-0.86zM671.22 783.79h0.86V798.11h-0.86zM672.31 776.49h0.86V795.09h-0.86zM673.40 785.01h0.86V798.45h-0.86zM674.49 796.64h0.86V797.63h-0.86zM675.58 779.34h0.86V787.19h-0.86zM676.67 779.01h0.86V793.24h-0.86zM677.76 790.64h0.86V794.63h-0.86zM678.84 795.17h0.86V798.07h-0.86zM679.93 799.33h0.86V800.46h-0.86zM681.02 791.45h0.86V798.35h-0.86zM682.11 795.76h0.86V799.12h-0.86zM683.20 789.15h0.86V798.23h-0.86zM684.29 795.83h0.86V799.06h-0.86zM685.38 790.39h0.86V796.92h-0.86zM686.47 792.69h0.86V793.81h-0.86zM687.56 791.26h0.86V793.19h-0.86zM688.65 787.62h0.86V789.43h-0.86zM689.74 788.04h0.86V790.38h-0.86zM690.82 793.52h0.86V794.58h-0.86zM691.91 794.02h0.86V797.64h-0.86zM693.00 786.63h0.86V795.88h-0.86zM694.09 790.28h0.86V794.69h-0.86zM695.18 792.96h0.86V795.96h-0.86zM696.27 790.46h0.86V792.35h-0.86zM697.36 792.42h0.86V794.27h-0.86zM698.45 787.49h0.86V794.26h-0.86zM699.54 785.69h0.86V788.02h-0.86zM700.63 791.05h0.86V792.25h-0.86zM701.71 787.56h0.86V790.23h-0.86zM702.80 785.37h0.86V792.13h-0.86zM703.89 797.85h0.86V798.22h-0.86zM704.98 790.19h0.86V793.20h-0.86zM706.07 785.73h0.86V794.59h-0.86zM707.16 779.66h0.86V794.41h-0.86zM708.25 792.09h0.86V797.07h-0.86zM709.34 793.36h0.86V795.11h-0.86zM710.43 790.80h0.86V795.76h-0.86zM711.52 792.84h0.86V796.13h-0.86zM712.61 791.25h0.86V796.95h-0.86zM713.69 794.35h0.86V797.63h-0.86zM714.78 787.42h0.86V798.28h-0.86zM715.87 791.34h0.86V794.32h-0.86zM716.96 781.58h0.86V796.04h-0.86zM718.05 796.06h0.86V797.45h-0.86zM719.14 789.93h0.86V797.00h-0.86zM720.23 786.80h0.86V790.43h-0.86zM721.32 788.03h0.86V793.75h-0.86zM722.41 782.89h0.86V796.93h-0.86zM723.50 762.03h0.86V791.16h-0.86zM724.59 780.79h0.86V796.44h-0.86zM725.67 782.14h0.86V797.01h-0.86zM726.76 789.69h0.86V796.12h-0.86zM727.85 767.51h0.86V789.81h-0.86zM728.94 784.77h0.86V795.57h-0.86zM730.03 779.51h0.86V787.22h-0.86zM731.12 777.72h0.86V787.22h-0.86zM732.21 761.27h0.86V777.36h-0.86zM733.30 770.38h0.86V774.71h-0.86zM734.39 763.05h0.86V768.94h-0.86zM735.48 774.70h0.86V779.31h-0.86zM736.57 746.11h0.86V766.70h-0.86zM737.65 768.20h0.86V782.94h-0.86zM738.74 779.48h0.86V784.88h-0.86zM739.83 784.03h0.86V786.23h-0.86zM740.92 768.94h0.86V774.59h-0.86zM742.01 775.88h0.86V782.11h-0.86zM743.10 771.00h0.86V775.03h-0.86zM744.19 773.54h0.86V778.44h-0.86zM745.28 786.27h0.86V788.54h-0.86zM746.37 758.59h0.86V772.39h-0.86zM747.46 760.48h0.86V777.61h-0.86zM748.55 702.87h0.86V767.63h-0.86zM749.63 773.77h0.86V777.91h-0.86zM750.72 724.82h0.86V752.68h-0.86zM751.81 759.20h0.86V779.34h-0.86zM752.90 763.17h0.86V768.28h-0.86zM753.99 717.03h0.86V765.95h-0.86zM755.08 747.90h0.86V757.80h-0.86zM756.17 754.99h0.86V762.03h-0.86zM757.26 771.24h0.86V775.07h-0.86zM758.35 752.24h0.86V761.50h-0.86zM759.44 748.19h0.86V756.84h-0.86zM760.52 760.08h0.86V766.85h-0.86zM761.61 763.60h0.86V771.09h-0.86zM762.70 741.59h0.86V747.54h-0.86zM763.79 679.29h0.86V735.12h-0.86zM764.88 724.01h0.86V770.29h-0.86zM765.97 770.09h0.86V790.52h-0.86zM767.06 736.45h0.86V761.94h-0.86zM768.15 724.69h0.86V785.18h-0.86zM769.24 767.51h0.86V774.35h-0.86zM770.33 788.32h0.86V790.02h-0.86zM771.42 764.27h0.86V768.57h-0.86zM772.50 780.38h0.86V782.40h-0.86zM773.59 766.03h0.86V773.36h-0.86zM774.68 769.66h0.86V781.42h-0.86zM775.77 705.77h0.86V780.36h-0.86zM776.86 790.22h0.86V791.49h-0.86zM777.95 730.62h0.86V782.86h-0.86zM779.04 759.63h0.86V777.28h-0.86zM780.13 757.59h0.86V779.62h-0.86zM781.22 730.57h0.86V762.80h-0.86zM782.31 768.20h0.86V772.62h-0.86zM783.40 760.44h0.86V773.19h-0.86zM784.48 710.60h0.86V737.54h-0.86zM785.57 743.52h0.86V762.58h-0.86zM786.66 772.47h0.86V790.69h-0.86zM787.75 753.69h0.86V771.40h-0.86zM788.84 767.48h0.86V773.05h-0.86zM789.93 771.88h0.86V773.97h-0.86zM791.02 732.29h0.86V771.48h-0.86zM792.11 740.36h0.86V753.50h-0.86zM793.20 770.99h0.86V776.07h-0.86zM794.29 736.10h0.86V754.93h-0.86zM795.38 754.21h0.86V772.39h-0.86zM796.46 759.84h0.86V770.10h-0.86zM797.55 759.63h0.86V781.07h-0.86zM798.64 663.40h0.86V762.03h-0.86zM799.73 760.83h0.86V768.69h-0.86zM800.82 762.64h0.86V772.25h-0.86zM801.91 722.92h0.86V769.17h-0.86zM803.00 742.69h0.86V762.30h-0.86zM804.09 730.71h0.86V749.98h-0.86zM805.18 717.88h0.86V737.27h-0.86zM806.27 768.33h0.86V773.18h-0.86zM807.36 776.34h0.86V786.72h-0.86zM808.44 766.47h0.86V782.83h-0.86zM809.53 767.37h0.86V774.16h-0.86zM810.62 748.44h0.86V758.05h-0.86zM811.71 752.88h0.86V758.59h-0.86zM812.80 752.95h0.86V774.63h-0.86zM813.89 749.83h0.86V763.44h-0.86zM814.98 659.89h0.86V756.45h-0.86zM816.07 771.95h0.86V784.20h-0.86zM817.16 739.69h0.86V786.22h-0.86zM818.25 760.62h0.86V767.41h-0.86zM819.33 750.25h0.86V769.98h-0.86zM820.42 722.17h0.86V751.04h-0.86zM821.51 753.42h0.86V773.36h-0.86zM822.60 692.31h0.86V753.08h-0.86zM823.69 670.87h0.86V718.86h-0.86zM824.78 684.64h0.86V753.70h-0.86zM825.87 704.51h0.86V728.61h-0.86zM826.96 762.61h0.86V769.81h-0.86zM828.05 726.32h0.86V753.60h-0.86zM829.14 776.89h0.86V779.65h-0.86zM830.23 725.71h0.86V761.88h-0.86zM831.31 700.84h0.86V782.02h-0.86zM832.40 684.26h0.86V782.72h-0.86zM833.49 744.94h0.86V783.43h-0.86zM834.58 705.96h0.86V772.34h-0.86zM835.67 745.67h0.86V762.74h-0.86zM836.76 741.08h0.86V768.33h-0.86zM837.85 702.68h0.86V776.58h-0.86zM838.94 675.82h0.86V744.58h-0.86zM840.03 719.51h0.86V737.21h-0.86zM841.12 691.47h0.86V709.07h-0.86zM842.21 676.69h0.86V737.49h-0.86zM843.29 740.00h0.86V748.21h-0.86zM844.38 745.26h0.86V752.42h-0.86zM845.47 681.12h0.86V734.54h-0.86zM846.56 685.79h0.86V702.45h-0.86zM847.65 731.83h0.86V738.87h-0.86zM848.74 753.44h0.86V762.23h-0.86zM849.83 732.91h0.86V740.65h-0.86zM850.92 711.00h0.86V764.05h-0.86zM852.01 736.89h0.86V747.17h-0.86zM853.10 718.77h0.86V736.79h-0.86zM854.19 754.34h0.86V774.02h-0.86zM855.27 736.69h0.86V758.58h-0.86zM856.36 748.20h0.86V767.18h-0.86zM857.45 754.56h0.86V778.35h-0.86zM858.54 705.61h0.86V749.46h-0.86zM859.63 767.84h0.86V772.98h-0.86zM860.72 777.57h0.86V785.16h-0.86zM861.81 748.49h0.86V792.16h-0.86zM862.90 777.50h0.86V786.96h-0.86zM863.99 761.09h0.86V777.81h-0.86zM865.08 754.47h0.86V788.65h-0.86zM866.17 746.88h0.86V789.14h-0.86zM867.25 789.94h0.86V791.75h-0.86zM868.34 761.87h0.86V791.72h-0.86zM869.43 753.51h0.86V782.85h-0.86zM870.52 777.61h0.86V781.55h-0.86zM871.61 731.48h0.86V771.47h-0.86zM872.70 772.05h0.86V775.63h-0.86zM873.79 761.70h0.86V766.33h-0.86zM874.88 764.73h0.86V770.38h-0.86zM875.97 791.33h0.86V792.52h-0.86zM877.06 768.69h0.86V773.70h-0.86zM878.14 753.11h0.86V759.35h-0.86zM879.23 768.19h0.86V772.46h-0.86zM880.32 778.67h0.86V782.05h-0.86zM881.41 734.99h0.86V756.37h-0.86zM882.50 753.58h0.86V761.80h-0.86zM883.59 696.94h0.86V765.53h-0.86zM884.68 773.85h0.86V777.71h-0.86zM885.77 767.49h0.86V777.12h-0.86zM886.86 695.76h0.86V756.15h-0.86zM887.95 739.45h0.86V744.90h-0.86zM889.04 684.52h0.86V699.20h-0.86zM890.12 717.46h0.86V750.48h-0.86zM891.21 745.37h0.86V752.09h-0.86zM892.30 761.60h0.86V765.54h-0.86zM893.39 773.10h0.86V776.49h-0.86zM894.48 682.40h0.86V733.43h-0.86zM895.57 770.14h0.86V773.74h-0.86zM896.66 787.66h0.86V789.50h-0.86zM897.75 762.97h0.86V771.58h-0.86zM898.84 765.49h0.86V777.99h-0.86zM899.93 712.19h0.86V744.24h-0.86zM901.02 783.31h0.86V786.37h-0.86zM902.10 782.23h0.86V784.84h-0.86zM903.19 778.54h0.86V781.26h-0.86zM904.28 740.37h0.86V751.02h-0.86zM905.37 735.17h0.86V774.29h-0.86zM906.46 737.90h0.86V774.06h-0.86zM907.55 750.42h0.86V763.15h-0.86zM908.64 752.06h0.86V770.62h-0.86zM909.73 726.78h0.86V774.24h-0.86zM910.82 730.22h0.86V786.24h-0.86zM911.91 735.28h0.86V781.02h-0.86zM913.00 742.67h0.86V751.54h-0.86zM914.08 757.61h0.86V766.47h-0.86zM915.17 735.58h0.86V745.81h-0.86zM916.26 738.94h0.86V751.18h-0.86zM917.35 768.53h0.86V773.13h-0.86zM918.44 713.39h0.86V767.59h-0.86zM919.53 751.07h0.86V785.94h-0.86zM920.62 749.32h0.86V765.47h-0.86zM921.71 748.14h0.86V769.16h-0.86zM922.80 683.90h0.86V726.92h-0.86zM923.89 725.08h0.86V765.38h-0.86zM924.98 673.85h0.86V751.33h-0.86zM926.06 657.79h0.86V742.87h-0.86zM927.15 736.00h0.86V746.05h-0.86zM928.24 676.21h0.86V736.91h-0.86zM929.33 664.57h0.86V760.57h-0.86zM930.42 701.39h0.86V738.91h-0.86zM931.51 638.71h0.86V703.76h-0.86zM932.60 632.15h0.86V712.60h-0.86zM933.69 697.36h0.86V713.64h-0.86zM934.78 669.98h0.86V694.15h-0.86zM935.87 728.90h0.86V739.57h-0.86zM936.95 742.32h0.86V749.01h-0.86zM938.04 766.52h0.86V771.09h-0.86zM939.13 670.41h0.86V702.82h-0.86zM940.22 648.70h0.86V733.31h-0.86zM941.31 729.20h0.86V738.38h-0.86zM942.40 704.04h0.86V712.26h-0.86zM943.49 764.15h0.86V769.19h-0.86zM944.58 758.05h0.86V763.05h-0.86zM945.67 676.11h0.86V716.79h-0.86zM946.76 718.58h0.86V728.60h-0.86zM947.85 700.62h0.86V712.05h-0.86zM948.93 675.80h0.86V722.48h-0.86zM950.02 751.76h0.86V757.54h-0.86zM951.11 762.88h0.86V767.50h-0.86zM952.20 708.09h0.86V718.79h-0.86zM953.29 677.67h0.86V738.12h-0.86zM954.38 753.48h0.86V761.88h-0.86zM955.47 748.68h0.86V757.00h-0.86zM956.56 704.25h0.86V779.36h-0.86zM957.65 744.48h0.86V751.92h-0.86zM958.74 741.89h0.86V767.31h-0.86zM959.83 738.47h0.86V752.10h-0.86zM960.91 681.14h0.86V761.94h-0.86zM962.00 698.84h0.86V751.34h-0.86zM963.09 681.97h0.86V732.49h-0.86zM964.18 740.81h0.86V746.26h-0.86zM965.27 694.87h0.86V724.96h-0.86zM966.36 719.67h0.86V732.25h-0.86zM967.45 707.62h0.86V724.64h-0.86zM968.54 726.78h0.86V738.17h-0.86zM969.63 744.60h0.86V748.52h-0.86zM970.72 699.86h0.86V719.76h-0.86zM971.81 690.79h0.86V707.42h-0.86zM972.89 774.50h0.86V777.36h-0.86zM973.98 744.31h0.86V763.37h-0.86zM975.07 734.47h0.86V765.39h-0.86zM976.16 669.00h0.86V758.89h-0.86zM977.25 759.52h0.86V763.19h-0.86zM978.34 767.01h0.86V773.46h-0.86zM979.43 712.64h0.86V749.25h-0.86zM980.52 747.51h0.86V752.53h-0.86zM981.61 683.89h0.86V704.12h-0.86zM982.70 675.29h0.86V713.99h-0.86zM983.79 738.78h0.86V752.74h-0.86zM984.87 708.63h0.86V762.59h-0.86zM985.96 751.92h0.86V766.84h-0.86zM987.05 779.58h0.86V788.34h-0.86zM988.14 662.67h0.86V728.94h-0.86zM989.23 627.29h0.86V744.54h-0.86zM990.32 734.01h0.86V743.05h-0.86zM991.41 654.49h0.86V774.33h-0.86zM992.50 642.29h0.86V748.87h-0.86zM993.59 766.41h0.86V778.02h-0.86zM994.68 747.72h0.86V785.94h-0.86zM995.76 787.81h0.86V792.03h-0.86zM996.85 774.85h0.86V789.58h-0.86zM997.94 671.86h0.86V770.41h-0.86zM999.03 713.14h0.86V784.98h-0.86zM1000.12 645.85h0.86V750.36h-0.86zM1001.21 671.24h0.86V751.28h-0.86zM1002.30 714.75h0.86V768.69h-0.86zM1003.39 756.65h0.86V763.74h-0.86zM1004.48 640.59h0.86V732.68h-0.86zM1005.57 711.60h0.86V775.10h-0.86zM1006.66 748.17h0.86V777.89h-0.86zM1007.74 758.71h0.86V773.96h-0.86zM1008.83 742.53h0.86V775.28h-0.86zM1009.92 749.02h0.86V778.32h-0.86zM1011.01 695.25h0.86V784.48h-0.86zM1012.10 670.01h0.86V770.89h-0.86zM1013.19 725.33h0.86V783.15h-0.86zM1014.28 748.19h0.86V777.50h-0.86zM1015.37 693.02h0.86V777.56h-0.86zM1016.46 697.07h0.86V759.50h-0.86zM1017.55 709.65h0.86V776.07h-0.86zM1018.64 737.17h0.86V765.90h-0.86zM1019.72 762.57h0.86V768.14h-0.86zM1020.81 702.96h0.86V726.97h-0.86zM1021.90 694.73h0.86V765.04h-0.86zM1022.99 658.45h0.86V733.37h-0.86zM1024.08 704.33h0.86V726.24h-0.86zM1025.17 483.20h0.86V728.20h-0.86zM1026.26 658.80h0.86V711.94h-0.86zM1027.35 668.58h0.86V709.07h-0.86zM1028.44 665.27h0.86V745.29h-0.86zM1029.53 717.82h0.86V765.47h-0.86zM1030.62 720.91h0.86V758.75h-0.86zM1031.70 659.16h0.86V759.66h-0.86zM1032.79 729.37h0.86V740.66h-0.86zM1033.88 665.90h0.86V750.49h-0.86zM1034.97 616.93h0.86V737.56h-0.86zM1036.06 683.42h0.86V706.37h-0.86zM1037.15 609.37h0.86V708.44h-0.86zM1038.24 686.45h0.86V719.54h-0.86zM1039.33 678.71h0.86V730.18h-0.86zM1040.42 720.96h0.86V750.54h-0.86zM1041.51 656.12h0.86V756.90h-0.86zM1042.60 665.86h0.86V750.99h-0.86zM1043.68 748.31h0.86V758.98h-0.86zM1044.77 736.18h0.86V758.13h-0.86zM1045.86 725.50h0.86V760.07h-0.86zM1046.95 709.46h0.86V731.48h-0.86zM1048.04 680.19h0.86V758.82h-0.86zM1049.13 664.35h0.86V762.91h-0.86zM1050.22 752.18h0.86V765.60h-0.86zM1051.31 674.97h0.86V772.69h-0.86zM1052.40 627.79h0.86V773.84h-0.86zM1053.49 706.62h0.86V765.42h-0.86zM1054.57 744.98h0.86V767.25h-0.86zM1055.66 751.46h0.86V781.27h-0.86zM1056.75 746.11h0.86V774.63h-0.86zM1057.84 737.88h0.86V765.08h-0.86zM1058.93 701.17h0.86V779.61h-0.86zM1060.02 769.86h0.86V775.99h-0.86zM1061.11 664.23h0.86V747.76h-0.86zM1062.20 756.53h0.86V761.59h-0.86zM1063.29 655.68h0.86V724.23h-0.86zM1064.38 737.39h0.86V775.93h-0.86zM1065.47 738.41h0.86V752.98h-0.86zM1066.55 756.22h0.86V779.59h-0.86zM1067.64 741.61h0.86V779.72h-0.86zM1068.73 683.07h0.86V760.28h-0.86zM1069.82 758.23h0.86V772.59h-0.86zM1070.91 744.24h0.86V772.09h-0.86z" fill="#3d1fd3"/><path d="M166.98 803.01h0.86V803.07h-0.86zM180.05 803.07h0.86V803.12h-0.86zM181.14 803.07h0.86V803.13h-0.86zM182.23 803.07h0.86V803.13h-0.86zM190.94 803.05h0.86V803.11h-0.86zM195.30 802.92h0.86V803.02h-0.86zM200.74 803.07h0.86V803.14h-0.86zM208.36 803.08h0.86V803.14h-0.86zM215.99 803.15h0.86V803.20h-0.86zM218.17 802.93h0.86V803.03h-0.86zM219.26 803.08h0.86V803.15h-0.86zM245.39 802.98h0.86V803.08h-0.86zM250.84 802.97h0.86V803.06h-0.86zM257.37 802.97h0.86V803.07h-0.86zM281.33 803.09h0.86V803.15h-0.86zM282.42 803.07h0.86V803.15h-0.86zM285.69 803.00h0.86V803.09h-0.86zM288.96 802.96h0.86V803.03h-0.86zM290.05 803.03h0.86V803.09h-0.86zM291.13 803.06h0.86V803.13h-0.86zM292.22 802.93h0.86V803.04h-0.86zM293.31 803.09h0.86V803.14h-0.86zM294.40 803.04h0.86V803.10h-0.86zM296.58 802.85h0.86V803.02h-0.86zM298.76 802.94h0.86V803.04h-0.86zM300.94 802.66h0.86V802.83h-0.86zM302.02 802.59h0.86V802.73h-0.86zM303.11 802.57h0.86V802.70h-0.86zM304.20 802.66h0.86V802.75h-0.86zM307.47 802.56h0.86V802.73h-0.86zM308.56 802.08h0.86V802.41h-0.86zM309.65 802.62h0.86V802.75h-0.86zM310.74 801.74h0.86V802.10h-0.86zM311.83 802.89h0.86V802.95h-0.86zM312.92 802.73h0.86V802.78h-0.86zM314.00 801.67h0.86V801.83h-0.86zM316.18 802.27h0.86V802.37h-0.86zM318.36 802.21h0.86V802.39h-0.86zM319.45 802.42h0.86V802.50h-0.86zM320.54 802.58h0.86V802.65h-0.86zM321.63 802.56h0.86V802.61h-0.86zM322.72 801.59h0.86V801.85h-0.86zM323.81 800.66h0.86V800.98h-0.86zM324.90 801.76h0.86V802.12h-0.86zM325.98 801.55h0.86V801.82h-0.86zM327.07 801.00h0.86V801.18h-0.86zM328.16 801.93h0.86V802.06h-0.86zM329.25 801.16h0.86V801.94h-0.86zM330.34 802.25h0.86V802.39h-0.86zM331.43 801.46h0.86V801.87h-0.86zM332.52 801.79h0.86V801.94h-0.86zM333.61 800.60h0.86V801.37h-0.86zM334.70 801.92h0.86V802.07h-0.86zM335.79 801.35h0.86V801.51h-0.86zM336.88 802.58h0.86V802.63h-0.86zM337.96 800.80h0.86V801.00h-0.86zM339.05 802.27h0.86V802.39h-0.86zM340.14 801.36h0.86V801.48h-0.86zM341.23 801.24h0.86V801.58h-0.86zM342.32 799.70h0.86V800.12h-0.86zM343.41 802.01h0.86V802.24h-0.86zM344.50 799.01h0.86V800.77h-0.86zM345.59 801.14h0.86V801.82h-0.86zM346.68 799.52h0.86V800.88h-0.86zM347.77 800.48h0.86V800.62h-0.86zM348.86 799.78h0.86V800.39h-0.86zM349.94 801.60h0.86V801.71h-0.86zM351.03 794.00h0.86V795.83h-0.86zM352.12 800.91h0.86V801.06h-0.86zM353.21 800.80h0.86V801.43h-0.86zM354.30 800.91h0.86V801.01h-0.86zM355.39 799.58h0.86V800.02h-0.86zM357.57 800.81h0.86V800.99h-0.86zM358.66 798.23h0.86V798.64h-0.86zM359.75 801.12h0.86V801.67h-0.86zM360.83 797.90h0.86V799.12h-0.86zM361.92 797.15h0.86V797.87h-0.86zM363.01 802.30h0.86V802.39h-0.86zM364.10 802.10h0.86V802.21h-0.86zM365.19 800.66h0.86V800.76h-0.86zM366.28 799.26h0.86V799.66h-0.86zM367.37 800.01h0.86V800.72h-0.86zM368.46 801.37h0.86V801.46h-0.86zM369.55 799.69h0.86V800.28h-0.86zM370.64 795.62h0.86V796.96h-0.86zM371.73 799.53h0.86V800.22h-0.86zM372.81 801.15h0.86V801.43h-0.86zM373.90 798.74h0.86V799.36h-0.86zM374.99 800.89h0.86V801.01h-0.86zM376.08 799.46h0.86V800.02h-0.86zM377.17 800.28h0.86V800.45h-0.86zM378.26 800.52h0.86V800.91h-0.86zM379.35 799.12h0.86V799.36h-0.86zM380.44 800.25h0.86V800.38h-0.86zM381.53 800.47h0.86V800.57h-0.86zM382.62 798.69h0.86V798.95h-0.86zM383.71 799.10h0.86V799.27h-0.86zM384.79 796.81h0.86V797.34h-0.86zM385.88 800.39h0.86V800.50h-0.86zM386.97 794.83h0.86V796.18h-0.86zM388.06 794.35h0.86V794.88h-0.86zM389.15 798.74h0.86V799.24h-0.86zM390.24 798.75h0.86V799.18h-0.86zM391.33 795.58h0.86V796.17h-0.86zM392.42 799.24h0.86V799.33h-0.86zM393.51 799.52h0.86V799.68h-0.86zM394.60 799.60h0.86V799.76h-0.86zM395.69 795.72h0.86V798.20h-0.86zM396.77 792.77h0.86V793.18h-0.86zM397.86 795.00h0.86V795.23h-0.86zM398.95 799.28h0.86V799.34h-0.86zM400.04 792.87h0.86V793.57h-0.86zM401.13 797.94h0.86V798.09h-0.86zM402.22 797.37h0.86V797.50h-0.86zM403.31 795.25h0.86V795.49h-0.86zM404.40 792.47h0.86V793.70h-0.86zM405.49 798.29h0.86V798.35h-0.86zM406.58 795.34h0.86V795.98h-0.86zM407.67 796.94h0.86V797.15h-0.86zM408.75 791.67h0.86V792.74h-0.86zM409.84 798.58h0.86V798.75h-0.86zM410.93 797.36h0.86V797.45h-0.86zM412.02 797.18h0.86V797.27h-0.86zM413.11 789.84h0.86V790.79h-0.86zM414.20 796.94h0.86V797.48h-0.86zM415.29 792.64h0.86V793.55h-0.86zM416.38 796.14h0.86V796.33h-0.86zM417.47 793.17h0.86V794.72h-0.86zM418.56 795.63h0.86V796.05h-0.86zM419.64 793.53h0.86V794.45h-0.86zM420.73 793.27h0.86V795.22h-0.86zM421.82 790.53h0.86V791.51h-0.86zM422.91 793.73h0.86V794.27h-0.86zM424.00 788.82h0.86V790.31h-0.86zM425.09 787.56h0.86V789.44h-0.86zM426.18 795.37h0.86V795.94h-0.86zM427.27 783.88h0.86V787.13h-0.86zM428.36 782.10h0.86V786.19h-0.86zM429.45 789.48h0.86V791.12h-0.86zM430.54 791.10h0.86V793.11h-0.86zM431.62 792.49h0.86V794.32h-0.86zM432.71 793.08h0.86V794.62h-0.86zM433.80 787.19h0.86V790.35h-0.86zM434.89 784.40h0.86V786.90h-0.86zM435.98 791.17h0.86V794.46h-0.86zM437.07 792.12h0.86V792.63h-0.86zM438.16 791.70h0.86V794.10h-0.86zM439.25 770.79h0.86V775.80h-0.86zM440.34 792.35h0.86V793.38h-0.86zM441.43 795.79h0.86V796.01h-0.86zM442.52 783.86h0.86V787.65h-0.86zM443.60 791.50h0.86V791.94h-0.86zM444.69 767.19h0.86V774.39h-0.86zM445.78 797.41h0.86V797.62h-0.86zM446.87 774.83h0.86V778.32h-0.86zM447.96 786.38h0.86V789.38h-0.86zM449.05 787.97h0.86V790.06h-0.86zM450.14 791.08h0.86V793.47h-0.86zM451.23 788.19h0.86V789.81h-0.86zM452.32 783.25h0.86V790.65h-0.86zM453.41 795.02h0.86V795.87h-0.86zM454.50 785.33h0.86V787.45h-0.86zM455.58 769.96h0.86V773.32h-0.86zM456.67 775.80h0.86V780.97h-0.86zM457.76 790.94h0.86V791.35h-0.86zM458.85 796.80h0.86V796.90h-0.86zM459.94 787.69h0.86V788.32h-0.86zM461.03 768.55h0.86V773.05h-0.86zM462.12 776.06h0.86V779.44h-0.86zM463.21 786.79h0.86V788.16h-0.86zM464.30 783.15h0.86V785.66h-0.86zM465.39 790.63h0.86V791.40h-0.86zM466.48 795.77h0.86V795.93h-0.86zM467.56 788.26h0.86V788.98h-0.86zM468.65 787.30h0.86V787.92h-0.86zM469.74 797.41h0.86V797.57h-0.86zM470.83 791.12h0.86V792.06h-0.86zM471.92 783.93h0.86V788.06h-0.86zM473.01 793.82h0.86V795.32h-0.86zM474.10 780.80h0.86V783.49h-0.86zM475.19 779.65h0.86V783.22h-0.86zM476.28 792.20h0.86V794.48h-0.86zM477.37 782.85h0.86V788.35h-0.86zM478.45 776.89h0.86V780.15h-0.86zM479.54 781.81h0.86V787.19h-0.86zM480.63 785.70h0.86V787.67h-0.86zM481.72 782.72h0.86V785.49h-0.86zM482.81 793.65h0.86V793.90h-0.86zM483.90 796.75h0.86V797.04h-0.86zM484.99 790.72h0.86V792.43h-0.86zM486.08 787.91h0.86V790.52h-0.86zM487.17 795.34h0.86V795.99h-0.86zM488.26 778.13h0.86V782.22h-0.86zM489.35 790.55h0.86V792.72h-0.86zM490.43 792.92h0.86V793.63h-0.86zM491.52 775.10h0.86V777.86h-0.86zM492.61 784.11h0.86V786.76h-0.86zM493.70 790.38h0.86V792.98h-0.86zM494.79 795.79h0.86V796.26h-0.86zM495.88 788.80h0.86V789.87h-0.86zM496.97 789.93h0.86V791.10h-0.86zM498.06 794.84h0.86V795.39h-0.86zM499.15 789.53h0.86V791.21h-0.86zM500.24 794.39h0.86V794.81h-0.86zM501.33 794.39h0.86V794.85h-0.86zM502.41 787.99h0.86V792.14h-0.86zM503.50 783.98h0.86V788.81h-0.86zM504.59 787.73h0.86V789.20h-0.86zM505.68 796.93h0.86V797.56h-0.86zM506.77 795.71h0.86V796.49h-0.86zM507.86 788.50h0.86V791.68h-0.86zM508.95 791.68h0.86V792.58h-0.86zM510.04 784.19h0.86V788.38h-0.86zM511.13 794.02h0.86V795.69h-0.86zM512.22 793.80h0.86V794.37h-0.86zM513.31 792.71h0.86V794.72h-0.86zM514.39 793.10h0.86V793.88h-0.86zM515.48 790.51h0.86V791.61h-0.86zM516.57 785.67h0.86V787.72h-0.86zM517.66 791.72h0.86V793.36h-0.86zM518.75 793.82h0.86V794.96h-0.86zM519.84 788.22h0.86V790.98h-0.86zM520.93 793.20h0.86V794.20h-0.86zM522.02 796.55h0.86V797.30h-0.86zM523.11 788.39h0.86V790.63h-0.86zM524.20 786.93h0.86V792.80h-0.86zM525.29 780.80h0.86V784.34h-0.86zM526.37 793.72h0.86V795.65h-0.86zM527.46 798.45h0.86V799.09h-0.86zM528.55 794.90h0.86V796.17h-0.86zM529.64 796.13h0.86V796.98h-0.86zM530.73 790.67h0.86V794.87h-0.86zM531.82 789.06h0.86V790.83h-0.86zM532.91 781.84h0.86V784.88h-0.86zM534.00 797.16h0.86V797.56h-0.86zM535.09 792.37h0.86V793.75h-0.86zM536.18 797.51h0.86V798.28h-0.86zM537.26 782.90h0.86V788.68h-0.86zM538.35 793.97h0.86V794.68h-0.86zM539.44 797.67h0.86V798.17h-0.86zM540.53 792.64h0.86V793.85h-0.86zM541.62 794.79h0.86V797.44h-0.86zM542.71 796.42h0.86V797.14h-0.86zM543.80 794.46h0.86V795.35h-0.86zM544.89 796.81h0.86V797.39h-0.86zM545.98 792.67h0.86V795.10h-0.86zM547.07 796.27h0.86V796.76h-0.86zM548.16 791.02h0.86V793.10h-0.86zM549.24 792.48h0.86V794.50h-0.86zM550.33 798.20h0.86V798.71h-0.86zM551.42 799.51h0.86V799.65h-0.86zM552.51 788.46h0.86V789.42h-0.86zM553.60 790.45h0.86V793.81h-0.86zM554.69 797.84h0.86V797.99h-0.86zM555.78 790.75h0.86V791.82h-0.86zM556.87 787.54h0.86V793.22h-0.86zM557.96 795.27h0.86V796.51h-0.86zM559.05 792.40h0.86V794.36h-0.86zM560.14 799.31h0.86V799.44h-0.86zM561.22 792.45h0.86V793.94h-0.86zM562.31 793.61h0.86V794.24h-0.86zM563.40 788.89h0.86V791.26h-0.86zM564.49 793.07h0.86V793.67h-0.86zM565.58 786.57h0.86V788.25h-0.86zM566.67 788.42h0.86V789.89h-0.86zM567.76 796.26h0.86V796.79h-0.86zM568.85 798.50h0.86V798.97h-0.86zM569.94 793.30h0.86V795.28h-0.86zM571.03 796.27h0.86V797.10h-0.86zM572.12 795.96h0.86V796.43h-0.86zM573.20 782.62h0.86V785.73h-0.86zM574.29 796.24h0.86V796.95h-0.86zM575.38 788.36h0.86V790.76h-0.86zM576.47 794.52h0.86V794.89h-0.86zM577.56 785.79h0.86V788.40h-0.86zM578.65 792.77h0.86V794.47h-0.86zM579.74 781.01h0.86V784.02h-0.86zM580.83 788.80h0.86V789.94h-0.86zM581.92 793.28h0.86V793.82h-0.86zM583.01 799.94h0.86V800.10h-0.86zM584.10 786.59h0.86V789.10h-0.86zM585.18 795.46h0.86V796.24h-0.86zM586.27 793.04h0.86V795.23h-0.86zM587.36 791.19h0.86V792.29h-0.86zM588.45 794.22h0.86V794.64h-0.86zM589.54 800.14h0.86V800.35h-0.86zM590.63 783.48h0.86V787.26h-0.86zM591.72 788.79h0.86V790.98h-0.86zM592.81 783.88h0.86V787.35h-0.86zM593.90 790.76h0.86V792.33h-0.86zM594.99 787.65h0.86V789.55h-0.86zM596.07 794.54h0.86V794.98h-0.86zM597.16 794.56h0.86V796.52h-0.86zM598.25 788.48h0.86V790.72h-0.86zM599.34 793.51h0.86V795.35h-0.86zM600.43 792.11h0.86V792.71h-0.86zM601.52 794.45h0.86V794.57h-0.86zM602.61 795.13h0.86V795.93h-0.86zM603.70 790.52h0.86V791.75h-0.86zM604.79 787.32h0.86V789.56h-0.86zM605.88 789.97h0.86V793.41h-0.86zM606.97 787.54h0.86V791.12h-0.86zM608.05 795.89h0.86V796.73h-0.86zM609.14 797.03h0.86V797.53h-0.86zM610.23 780.25h0.86V781.76h-0.86zM611.32 788.77h0.86V790.74h-0.86zM612.41 784.03h0.86V787.86h-0.86zM613.50 746.00h0.86V756.00h-0.86zM614.59 787.02h0.86V790.44h-0.86zM615.68 793.98h0.86V794.84h-0.86zM616.77 792.20h0.86V793.14h-0.86zM617.86 797.51h0.86V797.70h-0.86zM618.95 785.33h0.86V786.58h-0.86zM620.03 793.67h0.86V793.97h-0.86zM621.12 788.34h0.86V789.90h-0.86zM622.21 795.68h0.86V796.36h-0.86zM623.30 789.53h0.86V790.46h-0.86zM624.39 794.85h0.86V795.18h-0.86zM625.48 791.26h0.86V792.56h-0.86zM626.57 791.29h0.86V793.42h-0.86zM627.66 790.81h0.86V791.78h-0.86zM628.75 783.58h0.86V785.81h-0.86zM629.84 790.11h0.86V792.06h-0.86zM630.93 796.16h0.86V796.72h-0.86zM632.01 796.45h0.86V797.66h-0.86zM633.10 799.47h0.86V800.06h-0.86zM634.19 792.67h0.86V794.15h-0.86zM635.28 786.06h0.86V788.87h-0.86zM636.37 792.20h0.86V792.70h-0.86zM637.46 793.40h0.86V795.72h-0.86zM638.55 797.25h0.86V797.62h-0.86zM639.64 787.47h0.86V790.02h-0.86zM640.73 795.56h0.86V795.71h-0.86zM641.82 785.43h0.86V786.17h-0.86zM642.90 796.30h0.86V796.98h-0.86zM643.99 784.67h0.86V785.55h-0.86zM645.08 784.98h0.86V787.16h-0.86zM646.17 793.51h0.86V794.95h-0.86zM647.26 794.76h0.86V796.72h-0.86zM648.35 795.60h0.86V797.03h-0.86zM649.44 791.30h0.86V793.26h-0.86zM650.53 796.89h0.86V797.42h-0.86zM651.62 788.29h0.86V790.85h-0.86zM652.71 793.69h0.86V794.36h-0.86zM653.80 784.21h0.86V788.74h-0.86zM654.88 793.21h0.86V793.81h-0.86zM655.97 784.64h0.86V786.30h-0.86zM657.06 792.10h0.86V793.12h-0.86zM658.15 791.67h0.86V792.58h-0.86zM659.24 793.37h0.86V794.59h-0.86zM660.33 798.89h0.86V799.10h-0.86zM661.42 795.46h0.86V796.45h-0.86zM662.51 787.79h0.86V789.02h-0.86zM663.60 788.28h0.86V789.00h-0.86zM664.69 789.22h0.86V790.99h-0.86zM665.78 786.11h0.86V787.99h-0.86zM666.86 792.78h0.86V794.29h-0.86zM667.95 790.79h0.86V793.64h-0.86zM669.04 776.31h0.86V779.30h-0.86zM670.13 792.38h0.86V794.16h-0.86zM671.22 779.47h0.86V783.79h-0.86zM672.31 774.72h0.86V776.49h-0.86zM673.40 779.82h0.86V785.01h-0.86zM674.49 796.41h0.86V796.64h-0.86zM675.58 777.54h0.86V779.34h-0.86zM676.67 773.42h0.86V779.01h-0.86zM677.76 788.94h0.86V790.64h-0.86zM678.84 794.12h0.86V795.17h-0.86zM679.93 798.75h0.86V799.33h-0.86zM681.02 786.62h0.86V791.45h-0.86zM682.11 795.23h0.86V795.76h-0.86zM683.20 786.98h0.86V789.15h-0.86zM684.29 794.98h0.86V795.83h-0.86zM685.38 787.76h0.86V790.39h-0.86zM686.47 792.26h0.86V792.69h-0.86zM687.56 790.90h0.86V791.26h-0.86zM688.65 787.22h0.86V787.62h-0.86zM689.74 787.74h0.86V788.04h-0.86zM690.82 793.14h0.86V793.52h-0.86zM691.91 792.30h0.86V794.02h-0.86zM693.00 781.52h0.86V786.63h-0.86zM694.09 789.37h0.86V790.28h-0.86zM695.18 791.36h0.86V792.96h-0.86zM696.27 790.13h0.86V790.46h-0.86zM697.36 792.20h0.86V792.42h-0.86zM698.45 784.86h0.86V787.49h-0.86zM699.54 784.48h0.86V785.69h-0.86zM700.63 790.46h0.86V791.05h-0.86zM701.71 786.50h0.86V787.56h-0.86zM702.80 781.56h0.86V785.37h-0.86zM703.89 797.61h0.86V797.85h-0.86zM704.98 789.70h0.86V790.19h-0.86zM706.07 781.38h0.86V785.73h-0.86zM707.16 778.47h0.86V779.66h-0.86zM708.25 790.61h0.86V792.09h-0.86zM709.34 792.10h0.86V793.36h-0.86zM710.43 789.86h0.86V790.80h-0.86zM711.52 792.08h0.86V792.84h-0.86zM712.61 788.34h0.86V791.25h-0.86zM713.69 793.38h0.86V794.35h-0.86zM714.78 784.86h0.86V787.42h-0.86zM715.87 789.82h0.86V791.34h-0.86zM716.96 779.58h0.86V781.58h-0.86zM718.05 795.53h0.86V796.06h-0.86zM719.14 787.40h0.86V789.93h-0.86zM720.23 785.96h0.86V786.80h-0.86zM721.32 785.20h0.86V788.03h-0.86zM722.41 781.31h0.86V782.89h-0.86zM723.50 749.30h0.86V762.03h-0.86zM724.59 777.15h0.86V780.79h-0.86zM725.67 769.28h0.86V782.14h-0.86zM726.76 787.95h0.86V789.69h-0.86zM727.85 763.41h0.86V767.51h-0.86zM728.94 782.72h0.86V784.77h-0.86zM730.03 776.92h0.86V779.51h-0.86zM731.12 772.48h0.86V777.72h-0.86zM732.21 751.08h0.86V761.27h-0.86zM733.30 769.31h0.86V770.38h-0.86zM734.39 762.08h0.86V763.05h-0.86zM735.48 773.01h0.86V774.70h-0.86zM736.57 739.85h0.86V746.11h-0.86zM737.65 763.35h0.86V768.20h-0.86zM738.74 778.10h0.86V779.48h-0.86zM739.83 783.21h0.86V784.03h-0.86zM740.92 768.42h0.86V768.94h-0.86zM742.01 772.48h0.86V775.88h-0.86zM743.10 770.20h0.86V771.00h-0.86zM744.19 772.91h0.86V773.54h-0.86zM745.28 785.40h0.86V786.27h-0.86zM746.37 744.08h0.86V758.59h-0.86zM747.46 744.05h0.86V760.48h-0.86zM748.55 679.51h0.86V702.87h-0.86zM749.63 772.64h0.86V773.77h-0.86zM750.72 719.67h0.86V724.82h-0.86zM751.81 749.43h0.86V759.20h-0.86zM752.90 762.38h0.86V763.17h-0.86zM753.99 694.20h0.86V717.03h-0.86zM755.08 746.44h0.86V747.90h-0.86zM756.17 752.55h0.86V754.99h-0.86zM757.26 770.29h0.86V771.24h-0.86zM758.35 750.21h0.86V752.24h-0.86zM759.44 745.83h0.86V748.19h-0.86zM760.52 758.42h0.86V760.08h-0.86zM761.61 762.22h0.86V763.60h-0.86zM762.70 738.72h0.86V741.59h-0.86zM763.79 648.50h0.86V679.29h-0.86zM764.88 710.90h0.86V724.01h-0.86zM765.97 765.43h0.86V770.09h-0.86zM767.06 728.48h0.86V736.45h-0.86zM768.15 715.11h0.86V724.69h-0.86zM769.24 766.76h0.86V767.51h-0.86zM770.33 787.89h0.86V788.32h-0.86zM771.42 763.47h0.86V764.27h-0.86zM772.50 778.76h0.86V780.38h-0.86zM773.59 760.67h0.86V766.03h-0.86zM774.68 767.19h0.86V769.66h-0.86zM775.77 696.28h0.86V705.77h-0.86zM776.86 789.16h0.86V790.22h-0.86zM777.95 722.64h0.86V730.62h-0.86zM779.04 755.86h0.86V759.63h-0.86zM780.13 735.60h0.86V757.59h-0.86zM781.22 728.30h0.86V730.57h-0.86zM782.31 766.08h0.86V768.20h-0.86zM783.40 756.91h0.86V760.44h-0.86zM784.48 704.28h0.86V710.60h-0.86zM785.57 738.98h0.86V743.52h-0.86zM786.66 763.84h0.86V772.47h-0.86zM787.75 742.13h0.86V753.69h-0.86zM788.84 766.70h0.86V767.48h-0.86zM789.93 768.64h0.86V771.88h-0.86zM791.02 714.65h0.86V732.29h-0.86zM792.11 737.90h0.86V740.36h-0.86zM793.20 769.32h0.86V770.99h-0.86zM794.29 724.93h0.86V736.10h-0.86zM795.38 750.24h0.86V754.21h-0.86zM796.46 756.64h0.86V759.84h-0.86zM797.55 755.01h0.86V759.63h-0.86zM798.64 626.88h0.86V663.40h-0.86zM799.73 757.85h0.86V760.83h-0.86zM800.82 754.60h0.86V762.64h-0.86zM801.91 706.71h0.86V722.92h-0.86zM803.00 739.32h0.86V742.69h-0.86zM804.09 722.68h0.86V730.71h-0.86zM805.18 706.02h0.86V717.88h-0.86zM806.27 766.70h0.86V768.33h-0.86zM807.36 773.75h0.86V776.34h-0.86zM808.44 757.54h0.86V766.47h-0.86zM809.53 765.34h0.86V767.37h-0.86zM810.62 745.91h0.86V748.44h-0.86zM811.71 748.72h0.86V752.88h-0.86zM812.80 735.76h0.86V752.95h-0.86zM813.89 743.90h0.86V749.83h-0.86zM814.98 626.06h0.86V659.89h-0.86zM816.07 767.51h0.86V771.95h-0.86zM817.16 711.64h0.86V739.69h-0.86zM818.25 757.97h0.86V760.62h-0.86zM819.33 744.23h0.86V750.25h-0.86zM820.42 715.49h0.86V722.17h-0.86zM821.51 741.05h0.86V753.42h-0.86zM822.60 685.25h0.86V692.31h-0.86zM823.69 653.12h0.86V670.87h-0.86zM824.78 672.17h0.86V684.64h-0.86zM825.87 683.33h0.86V704.51h-0.86zM826.96 761.09h0.86V762.61h-0.86zM828.05 703.13h0.86V726.32h-0.86zM829.14 776.03h0.86V776.89h-0.86zM830.23 712.70h0.86V725.71h-0.86zM831.31 673.71h0.86V700.84h-0.86zM832.40 676.07h0.86V684.26h-0.86zM833.49 734.18h0.86V744.94h-0.86zM834.58 687.18h0.86V705.96h-0.86zM835.67 728.11h0.86V745.67h-0.86zM836.76 732.94h0.86V741.08h-0.86zM837.85 665.19h0.86V702.68h-0.86zM838.94 650.02h0.86V675.82h-0.86zM840.03 714.05h0.86V719.51h-0.86zM841.12 687.63h0.86V691.47h-0.86zM842.21 647.18h0.86V676.69h-0.86zM843.29 737.42h0.86V740.00h-0.86zM844.38 741.28h0.86V745.26h-0.86zM845.47 664.91h0.86V681.12h-0.86zM846.56 681.47h0.86V685.79h-0.86zM847.65 727.07h0.86V731.83h-0.86zM848.74 750.28h0.86V753.44h-0.86zM849.83 728.61h0.86V732.91h-0.86zM850.92 689.38h0.86V711.00h-0.86zM852.01 734.43h0.86V736.89h-0.86zM853.10 712.34h0.86V718.77h-0.86zM854.19 733.11h0.86V754.34h-0.86zM855.27 732.51h0.86V736.69h-0.86zM856.36 739.07h0.86V748.20h-0.86zM857.45 736.57h0.86V754.56h-0.86zM858.54 677.63h0.86V705.61h-0.86zM859.63 764.88h0.86V767.84h-0.86zM860.72 776.47h0.86V777.57h-0.86zM861.81 744.07h0.86V748.49h-0.86zM862.90 770.14h0.86V777.50h-0.86zM863.99 759.85h0.86V761.09h-0.86zM865.08 745.48h0.86V754.47h-0.86zM866.17 717.90h0.86V746.88h-0.86zM867.25 789.44h0.86V789.94h-0.86zM868.34 747.16h0.86V761.87h-0.86zM869.43 744.54h0.86V753.51h-0.86zM870.52 776.34h0.86V777.61h-0.86zM871.61 714.22h0.86V731.48h-0.86zM872.70 771.31h0.86V772.05h-0.86zM873.79 760.34h0.86V761.70h-0.86zM874.88 763.06h0.86V764.73h-0.86zM875.97 790.86h0.86V791.33h-0.86zM877.06 767.75h0.86V768.69h-0.86zM878.14 749.76h0.86V753.11h-0.86zM879.23 767.25h0.86V768.19h-0.86zM880.32 778.28h0.86V778.67h-0.86zM881.41 729.42h0.86V734.99h-0.86zM882.50 751.39h0.86V753.58h-0.86zM883.59 672.69h0.86V696.94h-0.86zM884.68 773.06h0.86V773.85h-0.86zM885.77 763.45h0.86V767.49h-0.86zM886.86 673.73h0.86V695.76h-0.86zM887.95 737.47h0.86V739.45h-0.86zM889.04 678.27h0.86V684.52h-0.86zM890.12 704.55h0.86V717.46h-0.86zM891.21 741.94h0.86V745.37h-0.86zM892.30 758.43h0.86V761.60h-0.86zM893.39 771.45h0.86V773.10h-0.86zM894.48 674.80h0.86V682.40h-0.86zM895.57 769.32h0.86V770.14h-0.86zM896.66 787.01h0.86V787.66h-0.86zM897.75 760.76h0.86V762.97h-0.86zM898.84 761.68h0.86V765.49h-0.86zM899.93 703.14h0.86V712.19h-0.86zM901.02 782.62h0.86V783.31h-0.86zM902.10 780.56h0.86V782.23h-0.86zM903.19 777.12h0.86V778.54h-0.86zM904.28 736.63h0.86V740.37h-0.86zM905.37 727.57h0.86V735.17h-0.86zM906.46 724.62h0.86V737.90h-0.86zM907.55 747.88h0.86V750.42h-0.86zM908.64 748.41h0.86V752.06h-0.86zM909.73 720.72h0.86V726.78h-0.86zM910.82 705.78h0.86V730.22h-0.86zM911.91 726.81h0.86V735.28h-0.86zM913.00 740.85h0.86V742.67h-0.86zM914.08 755.38h0.86V757.61h-0.86zM915.17 731.63h0.86V735.58h-0.86zM916.26 735.45h0.86V738.94h-0.86zM917.35 767.42h0.86V768.53h-0.86zM918.44 682.10h0.86V713.39h-0.86zM919.53 746.29h0.86V751.07h-0.86zM920.62 746.69h0.86V749.32h-0.86zM921.71 732.84h0.86V748.14h-0.86zM922.80 668.44h0.86V683.90h-0.86zM923.89 713.65h0.86V725.08h-0.86zM924.98 657.42h0.86V673.85h-0.86zM926.06 626.77h0.86V657.79h-0.86zM927.15 733.33h0.86V736.00h-0.86zM928.24 656.68h0.86V676.21h-0.86zM929.33 629.13h0.86V664.57h-0.86zM930.42 678.10h0.86V701.39h-0.86zM931.51 622.74h0.86V638.71h-0.86zM932.60 605.36h0.86V632.15h-0.86zM933.69 688.91h0.86V697.36h-0.86zM934.78 662.03h0.86V669.98h-0.86zM935.87 726.01h0.86V728.90h-0.86zM936.95 740.28h0.86V742.32h-0.86zM938.04 764.64h0.86V766.52h-0.86zM939.13 661.01h0.86V670.41h-0.86zM940.22 620.78h0.86V648.70h-0.86zM941.31 727.02h0.86V729.20h-0.86zM942.40 697.25h0.86V704.04h-0.86zM943.49 762.95h0.86V764.15h-0.86zM944.58 755.67h0.86V758.05h-0.86zM945.67 669.58h0.86V676.11h-0.86zM946.76 715.82h0.86V718.58h-0.86zM947.85 697.02h0.86V700.62h-0.86zM948.93 665.81h0.86V675.80h-0.86zM950.02 747.04h0.86V751.76h-0.86zM951.11 762.16h0.86V762.88h-0.86zM952.20 699.98h0.86V708.09h-0.86zM953.29 662.27h0.86V677.67h-0.86zM954.38 751.76h0.86V753.48h-0.86zM955.47 746.65h0.86V748.68h-0.86zM956.56 684.44h0.86V704.25h-0.86zM957.65 742.85h0.86V744.48h-0.86zM958.74 731.91h0.86V741.89h-0.86zM959.83 730.96h0.86V738.47h-0.86zM960.91 656.24h0.86V681.14h-0.86zM962.00 683.06h0.86V698.84h-0.86zM963.09 667.75h0.86V681.97h-0.86zM964.18 737.12h0.86V740.81h-0.86zM965.27 691.21h0.86V694.87h-0.86zM966.36 718.21h0.86V719.67h-0.86zM967.45 698.32h0.86V707.62h-0.86zM968.54 724.91h0.86V726.78h-0.86zM969.63 737.97h0.86V744.60h-0.86zM970.72 695.79h0.86V699.86h-0.86zM971.81 680.56h0.86V690.79h-0.86zM972.89 773.40h0.86V774.50h-0.86zM973.98 733.69h0.86V744.31h-0.86zM975.07 731.55h0.86V734.47h-0.86zM976.16 635.32h0.86V669.00h-0.86zM977.25 758.05h0.86V759.52h-0.86zM978.34 765.70h0.86V767.01h-0.86zM979.43 698.76h0.86V712.64h-0.86zM980.52 744.75h0.86V747.51h-0.86zM981.61 678.87h0.86V683.89h-0.86zM982.70 649.67h0.86V675.29h-0.86zM983.79 736.08h0.86V738.78h-0.86zM984.87 690.64h0.86V708.63h-0.86zM985.96 742.57h0.86V751.92h-0.86zM987.05 777.78h0.86V779.58h-0.86zM988.14 643.32h0.86V662.67h-0.86zM989.23 609.18h0.86V627.29h-0.86zM990.32 730.07h0.86V734.01h-0.86zM991.41 606.07h0.86V654.49h-0.86zM992.50 607.85h0.86V642.29h-0.86zM993.59 760.66h0.86V766.41h-0.86zM994.68 733.83h0.86V747.72h-0.86zM995.76 785.50h0.86V787.81h-0.86zM996.85 768.88h0.86V774.85h-0.86zM997.94 627.75h0.86V671.86h-0.86zM999.03 704.36h0.86V713.14h-0.86zM1000.12 609.84h0.86V645.85h-0.86zM1001.21 634.04h0.86V671.24h-0.86zM1002.30 704.08h0.86V714.75h-0.86zM1003.39 754.10h0.86V756.65h-0.86zM1004.48 610.53h0.86V640.59h-0.86zM1005.57 690.52h0.86V711.60h-0.86zM1006.66 726.67h0.86V748.17h-0.86zM1007.74 752.97h0.86V758.71h-0.86zM1008.83 733.69h0.86V742.53h-0.86zM1009.92 739.42h0.86V749.02h-0.86zM1011.01 663.71h0.86V695.25h-0.86zM1012.10 633.04h0.86V670.01h-0.86zM1013.19 700.77h0.86V725.33h-0.86zM1014.28 727.88h0.86V748.19h-0.86zM1015.37 656.07h0.86V693.02h-0.86zM1016.46 674.22h0.86V697.07h-0.86zM1017.55 674.54h0.86V709.65h-0.86zM1018.64 732.73h0.86V737.17h-0.86zM1019.72 761.17h0.86V762.57h-0.86zM1020.81 690.63h0.86V702.96h-0.86zM1021.90 678.61h0.86V694.73h-0.86zM1022.99 626.99h0.86V658.45h-0.86zM1024.08 694.07h0.86V704.33h-0.86zM1025.17 433.20h0.86V483.20h-0.86zM1026.26 642.72h0.86V658.80h-0.86zM1027.35 664.50h0.86V668.58h-0.86zM1028.44 658.08h0.86V665.27h-0.86zM1029.53 701.81h0.86V717.82h-0.86zM1030.62 713.61h0.86V720.91h-0.86zM1031.70 606.95h0.86V659.16h-0.86zM1032.79 709.63h0.86V729.37h-0.86zM1033.88 638.88h0.86V665.90h-0.86zM1034.97 575.14h0.86V616.93h-0.86zM1036.06 681.30h0.86V683.42h-0.86zM1037.15 573.74h0.86V609.37h-0.86zM1038.24 677.29h0.86V686.45h-0.86zM1039.33 664.77h0.86V678.71h-0.86zM1040.42 710.80h0.86V720.96h-0.86zM1041.51 624.74h0.86V656.12h-0.86zM1042.60 633.70h0.86V665.86h-0.86zM1043.68 742.71h0.86V748.31h-0.86zM1044.77 710.07h0.86V736.18h-0.86zM1045.86 715.72h0.86V725.50h-0.86zM1046.95 696.53h0.86V709.46h-0.86zM1048.04 664.32h0.86V680.19h-0.86zM1049.13 638.22h0.86V664.35h-0.86zM1050.22 749.00h0.86V752.18h-0.86zM1051.31 655.79h0.86V674.97h-0.86zM1052.40 614.31h0.86V627.79h-0.86zM1053.49 689.32h0.86V706.62h-0.86zM1054.57 715.64h0.86V744.98h-0.86zM1055.66 727.86h0.86V751.46h-0.86zM1056.75 734.01h0.86V746.11h-0.86zM1057.84 710.86h0.86V737.88h-0.86zM1058.93 665.71h0.86V701.17h-0.86zM1060.02 768.97h0.86V769.86h-0.86zM1061.11 651.99h0.86V664.23h-0.86zM1062.20 751.15h0.86V756.53h-0.86zM1063.29 640.22h0.86V655.68h-0.86zM1064.38 721.95h0.86V737.39h-0.86zM1065.47 731.97h0.86V738.41h-0.86zM1066.55 738.66h0.86V756.22h-0.86zM1067.64 702.18h0.86V741.61h-0.86zM1068.73 653.83h0.86V683.07h-0.86zM1069.82 753.08h0.86V758.23h-0.86zM1070.91 732.74h0.86V744.24h-0.86z" fill="#ffa500"/><path d="M155.00 802.84h0.86V803.13h-0.86zM156.09 802.99h0.86V803.15h-0.86zM157.18 802.79h0.86V803.20h-0.86zM158.27 802.51h0.86V803.12h-0.86zM159.36 802.50h0.86V803.20h-0.86zM160.45 802.85h0.86V803.20h-0.86zM161.53 803.07h0.86V803.20h-0.86zM162.62 803.08h0.86V803.20h-0.86zM163.71 802.64h0.86V803.20h-0.86zM164.80 802.83h0.86V803.11h-0.86zM165.89 802.90h0.86V803.20h-0.86zM166.98 802.41h0.86V803.01h-0.86zM168.07 802.89h0.86V803.20h-0.86zM169.16 802.95h0.86V803.20h-0.86zM170.25 802.67h0.86V803.13h-0.86zM171.34 802.98h0.86V803.20h-0.86zM172.43 802.93h0.86V803.20h-0.86zM173.51 802.83h0.86V803.20h-0.86zM174.60 802.40h0.86V803.14h-0.86zM175.69 803.01h0.86V803.20h-0.86zM176.78 802.98h0.86V803.20h-0.86zM177.87 802.88h0.86V803.14h-0.86zM178.96 802.90h0.86V803.20h-0.86zM180.05 802.37h0.86V803.07h-0.86zM181.14 802.37h0.86V803.07h-0.86zM182.23 802.36h0.86V803.07h-0.86zM183.32 803.03h0.86V803.20h-0.86zM184.40 802.78h0.86V803.14h-0.86zM185.49 802.65h0.86V803.14h-0.86zM186.58 802.97h0.86V803.20h-0.86zM187.67 803.08h0.86V803.20h-0.86zM188.76 802.38h0.86V803.02h-0.86zM189.85 802.49h0.86V803.13h-0.86zM190.94 802.34h0.86V803.05h-0.86zM192.03 802.89h0.86V803.15h-0.86zM193.12 802.97h0.86V803.20h-0.86zM194.21 802.89h0.86V803.20h-0.86zM195.30 802.33h0.86V802.92h-0.86zM196.38 802.78h0.86V803.20h-0.86zM197.47 802.84h0.86V803.20h-0.86zM198.56 802.64h0.86V803.12h-0.86zM199.65 802.81h0.86V803.11h-0.86zM200.74 802.31h0.86V803.07h-0.86zM201.83 802.86h0.86V803.08h-0.86zM202.92 802.92h0.86V803.20h-0.86zM204.01 802.82h0.86V803.20h-0.86zM205.10 802.73h0.86V803.15h-0.86zM206.19 802.85h0.86V803.20h-0.86zM207.28 802.87h0.86V803.15h-0.86zM208.36 802.72h0.86V803.08h-0.86zM209.45 802.73h0.86V803.20h-0.86zM210.54 803.03h0.86V803.20h-0.86zM211.63 803.00h0.86V803.20h-0.86zM212.72 802.60h0.86V803.14h-0.86zM213.81 802.93h0.86V803.20h-0.86zM214.90 802.88h0.86V803.20h-0.86zM215.99 802.70h0.86V803.15h-0.86zM217.08 802.81h0.86V803.20h-0.86zM218.17 802.26h0.86V802.93h-0.86zM219.26 802.37h0.86V803.08h-0.86zM220.34 802.82h0.86V803.20h-0.86zM221.43 803.04h0.86V803.20h-0.86zM222.52 802.84h0.86V803.20h-0.86zM223.61 802.68h0.86V803.14h-0.86zM224.70 802.33h0.86V803.14h-0.86zM225.79 802.71h0.86V803.15h-0.86zM226.88 802.45h0.86V803.09h-0.86zM227.97 803.07h0.86V803.20h-0.86zM229.06 802.84h0.86V803.20h-0.86zM230.15 802.88h0.86V803.20h-0.86zM231.24 802.95h0.86V803.20h-0.86zM232.32 802.71h0.86V803.20h-0.86zM233.41 802.48h0.86V803.08h-0.86zM234.50 802.83h0.86V803.10h-0.86zM235.59 802.35h0.86V803.02h-0.86zM236.68 802.78h0.86V803.20h-0.86zM237.77 802.24h0.86V803.14h-0.86zM238.86 802.59h0.86V803.10h-0.86zM239.95 802.98h0.86V803.20h-0.86zM241.04 802.98h0.86V803.20h-0.86zM242.13 802.39h0.86V803.13h-0.86zM243.21 802.67h0.86V803.14h-0.86zM244.30 802.43h0.86V803.20h-0.86zM245.39 802.60h0.86V802.98h-0.86zM246.48 802.84h0.86V803.20h-0.86zM247.57 802.71h0.86V803.20h-0.86zM248.66 802.26h0.86V803.20h-0.86zM249.75 802.78h0.86V803.12h-0.86zM250.84 802.46h0.86V802.97h-0.86zM251.93 802.38h0.86V803.12h-0.86zM253.02 802.66h0.86V803.20h-0.86zM254.11 802.19h0.86V803.07h-0.86zM255.19 802.63h0.86V803.20h-0.86zM256.28 802.32h0.86V803.12h-0.86zM257.37 802.40h0.86V802.97h-0.86zM258.46 802.81h0.86V803.15h-0.86zM259.55 802.53h0.86V803.12h-0.86zM260.64 802.97h0.86V803.20h-0.86zM261.73 802.71h0.86V803.20h-0.86zM262.82 802.64h0.86V803.14h-0.86zM263.91 802.69h0.86V803.20h-0.86zM265.00 802.92h0.86V803.20h-0.86zM266.09 802.41h0.86V803.08h-0.86zM267.17 802.94h0.86V803.20h-0.86zM268.26 802.67h0.86V803.10h-0.86zM269.35 803.00h0.86V803.20h-0.86zM270.44 803.05h0.86V803.20h-0.86zM271.53 802.94h0.86V803.20h-0.86zM272.62 802.47h0.86V803.20h-0.86zM273.71 802.78h0.86V803.20h-0.86zM274.80 802.89h0.86V803.20h-0.86zM275.89 802.43h0.86V803.13h-0.86zM276.98 802.16h0.86V803.20h-0.86zM278.07 802.78h0.86V803.20h-0.86zM279.15 802.77h0.86V803.09h-0.86zM280.24 802.90h0.86V803.20h-0.86zM281.33 802.60h0.86V803.09h-0.86zM282.42 802.08h0.86V803.07h-0.86zM283.51 802.38h0.86V803.13h-0.86zM284.60 802.60h0.86V803.09h-0.86zM285.69 802.12h0.86V803.00h-0.86zM286.78 802.74h0.86V803.13h-0.86zM287.87 802.95h0.86V803.20h-0.86zM288.96 802.23h0.86V802.96h-0.86zM290.05 802.45h0.86V803.03h-0.86zM291.13 802.07h0.86V803.06h-0.86zM292.22 802.02h0.86V802.93h-0.86zM293.31 802.35h0.86V803.09h-0.86zM294.40 801.88h0.86V803.04h-0.86zM295.49 802.96h0.86V803.20h-0.86zM296.58 801.56h0.86V802.85h-0.86zM297.67 802.61h0.86V803.12h-0.86zM298.76 801.80h0.86V802.94h-0.86zM299.85 801.36h0.86V803.08h-0.86zM300.94 801.93h0.86V802.66h-0.86zM302.02 801.85h0.86V802.59h-0.86zM303.11 801.14h0.86V802.57h-0.86zM304.20 801.92h0.86V802.66h-0.86zM305.29 802.79h0.86V803.01h-0.86zM306.38 802.25h0.86V802.95h-0.86zM307.47 801.43h0.86V802.56h-0.86zM308.56 800.99h0.86V802.08h-0.86zM309.65 802.13h0.86V802.62h-0.86zM310.74 801.09h0.86V801.74h-0.86zM311.83 802.17h0.86V802.89h-0.86zM312.92 801.93h0.86V802.73h-0.86zM314.00 799.87h0.86V801.67h-0.86zM315.09 802.30h0.86V802.86h-0.86zM316.18 801.51h0.86V802.27h-0.86zM317.27 801.99h0.86V802.72h-0.86zM318.36 801.15h0.86V802.21h-0.86zM319.45 801.91h0.86V802.42h-0.86zM320.54 801.88h0.86V802.58h-0.86zM321.63 801.32h0.86V802.56h-0.86zM322.72 800.95h0.86V801.59h-0.86zM323.81 799.16h0.86V800.66h-0.86zM324.90 800.72h0.86V801.76h-0.86zM325.98 800.82h0.86V801.55h-0.86zM327.07 797.71h0.86V801.00h-0.86zM328.16 800.78h0.86V801.93h-0.86zM329.25 799.08h0.86V801.16h-0.86zM330.34 801.17h0.86V802.25h-0.86zM331.43 799.36h0.86V801.46h-0.86zM332.52 800.46h0.86V801.79h-0.86zM333.61 798.01h0.86V800.60h-0.86zM334.70 799.98h0.86V801.92h-0.86zM335.79 798.40h0.86V801.35h-0.86zM336.88 802.26h0.86V802.58h-0.86zM337.96 798.71h0.86V800.80h-0.86zM339.05 800.58h0.86V802.27h-0.86zM340.14 800.60h0.86V801.36h-0.86zM341.23 799.66h0.86V801.24h-0.86zM342.32 794.32h0.86V799.70h-0.86zM343.41 801.18h0.86V802.01h-0.86zM344.50 796.06h0.86V799.01h-0.86zM345.59 797.58h0.86V801.14h-0.86zM346.68 794.24h0.86V799.52h-0.86zM347.77 797.16h0.86V800.48h-0.86zM348.86 794.92h0.86V799.78h-0.86zM349.94 800.70h0.86V801.60h-0.86zM351.03 786.70h0.86V794.00h-0.86zM352.12 800.02h0.86V800.91h-0.86zM353.21 795.51h0.86V800.80h-0.86zM354.30 799.59h0.86V800.91h-0.86zM355.39 795.75h0.86V799.58h-0.86zM356.48 800.66h0.86V801.14h-0.86zM357.57 799.13h0.86V800.81h-0.86zM358.66 795.69h0.86V798.23h-0.86zM359.75 798.45h0.86V801.12h-0.86zM360.83 794.48h0.86V797.90h-0.86zM361.92 791.43h0.86V797.15h-0.86zM363.01 801.52h0.86V802.30h-0.86zM364.10 800.73h0.86V802.10h-0.86zM365.19 797.51h0.86V800.66h-0.86zM366.28 790.61h0.86V799.26h-0.86zM367.37 795.98h0.86V800.01h-0.86zM368.46 801.02h0.86V801.37h-0.86zM369.55 798.19h0.86V799.69h-0.86zM370.64 787.20h0.86V795.62h-0.86zM371.73 795.64h0.86V799.53h-0.86zM372.81 799.31h0.86V801.15h-0.86zM373.90 795.73h0.86V798.74h-0.86zM374.99 799.96h0.86V800.89h-0.86zM376.08 798.63h0.86V799.46h-0.86zM377.17 799.31h0.86V800.28h-0.86zM378.26 796.09h0.86V800.52h-0.86zM379.35 796.95h0.86V799.12h-0.86zM380.44 799.17h0.86V800.25h-0.86zM381.53 799.63h0.86V800.47h-0.86zM382.62 794.30h0.86V798.69h-0.86zM383.71 798.33h0.86V799.10h-0.86zM384.79 791.75h0.86V796.81h-0.86zM385.88 799.54h0.86V800.39h-0.86zM386.97 788.20h0.86V794.83h-0.86zM388.06 789.86h0.86V794.35h-0.86zM389.15 794.84h0.86V798.74h-0.86zM390.24 794.23h0.86V798.75h-0.86zM391.33 792.78h0.86V795.58h-0.86zM392.42 798.30h0.86V799.24h-0.86zM393.51 797.65h0.86V799.52h-0.86zM394.60 799.09h0.86V799.60h-0.86zM395.69 792.46h0.86V795.72h-0.86zM396.77 783.53h0.86V792.77h-0.86zM397.86 793.03h0.86V795.00h-0.86zM398.95 798.36h0.86V799.28h-0.86zM400.04 788.56h0.86V792.87h-0.86zM401.13 795.97h0.86V797.94h-0.86zM402.22 796.19h0.86V797.37h-0.86zM403.31 793.81h0.86V795.25h-0.86zM404.40 786.77h0.86V792.47h-0.86zM405.49 797.33h0.86V798.29h-0.86zM406.58 790.40h0.86V795.34h-0.86zM407.67 795.41h0.86V796.94h-0.86zM408.75 780.41h0.86V791.67h-0.86zM409.84 797.06h0.86V798.58h-0.86zM410.93 796.44h0.86V797.36h-0.86zM412.02 796.04h0.86V797.18h-0.86zM413.11 776.73h0.86V789.84h-0.86zM414.20 793.91h0.86V796.94h-0.86zM415.29 783.24h0.86V792.64h-0.86zM416.38 794.41h0.86V796.14h-0.86zM417.47 777.48h0.86V793.17h-0.86zM418.56 789.57h0.86V795.63h-0.86zM419.64 782.90h0.86V793.53h-0.86zM420.73 787.66h0.86V793.27h-0.86zM421.82 787.71h0.86V790.53h-0.86zM422.91 788.72h0.86V793.73h-0.86zM424.00 784.36h0.86V788.82h-0.86zM425.09 782.60h0.86V787.56h-0.86zM426.18 789.18h0.86V795.37h-0.86zM427.27 772.33h0.86V783.88h-0.86zM428.36 769.66h0.86V782.10h-0.86zM429.45 780.19h0.86V789.48h-0.86zM430.54 785.04h0.86V791.10h-0.86zM431.62 781.99h0.86V792.49h-0.86zM432.71 789.72h0.86V793.08h-0.86zM433.80 775.01h0.86V787.19h-0.86zM434.89 777.10h0.86V784.40h-0.86zM435.98 783.51h0.86V791.17h-0.86zM437.07 789.36h0.86V792.12h-0.86zM438.16 786.78h0.86V791.70h-0.86zM439.25 752.20h0.86V770.79h-0.86zM440.34 786.79h0.86V792.35h-0.86zM441.43 795.37h0.86V795.79h-0.86zM442.52 775.79h0.86V783.86h-0.86zM443.60 790.46h0.86V791.50h-0.86zM444.69 743.20h0.86V767.19h-0.86zM445.78 796.88h0.86V797.41h-0.86zM446.87 767.14h0.86V774.83h-0.86zM447.96 769.41h0.86V786.38h-0.86zM449.05 778.68h0.86V787.97h-0.86zM450.14 787.04h0.86V791.08h-0.86zM451.23 780.89h0.86V788.19h-0.86zM452.32 771.03h0.86V783.25h-0.86zM453.41 786.60h0.86V795.02h-0.86zM454.50 774.58h0.86V785.33h-0.86zM455.58 758.97h0.86V769.96h-0.86zM456.67 759.50h0.86V775.80h-0.86zM457.76 788.10h0.86V790.94h-0.86zM458.85 795.37h0.86V796.80h-0.86zM459.94 783.13h0.86V787.69h-0.86zM461.03 750.50h0.86V768.55h-0.86zM462.12 758.35h0.86V776.06h-0.86zM463.21 780.63h0.86V786.79h-0.86zM464.30 778.11h0.86V783.15h-0.86zM465.39 789.41h0.86V790.63h-0.86zM466.48 794.62h0.86V795.77h-0.86zM467.56 786.87h0.86V788.26h-0.86zM468.65 779.20h0.86V787.30h-0.86zM469.74 796.32h0.86V797.41h-0.86zM470.83 787.62h0.86V791.12h-0.86zM471.92 771.15h0.86V783.93h-0.86zM473.01 791.10h0.86V793.82h-0.86zM474.10 767.28h0.86V780.80h-0.86zM475.19 770.75h0.86V779.65h-0.86zM476.28 781.77h0.86V792.20h-0.86zM477.37 772.51h0.86V782.85h-0.86zM478.45 761.94h0.86V776.89h-0.86zM479.54 767.00h0.86V781.81h-0.86zM480.63 777.60h0.86V785.70h-0.86zM481.72 771.53h0.86V782.72h-0.86zM482.81 792.39h0.86V793.65h-0.86zM483.90 796.07h0.86V796.75h-0.86zM484.99 775.67h0.86V790.72h-0.86zM486.08 781.38h0.86V787.91h-0.86zM487.17 794.21h0.86V795.34h-0.86zM488.26 757.50h0.86V778.13h-0.86zM489.35 779.22h0.86V790.55h-0.86zM490.43 791.25h0.86V792.92h-0.86zM491.52 762.20h0.86V775.10h-0.86zM492.61 765.20h0.86V784.11h-0.86zM493.70 783.20h0.86V790.38h-0.86zM494.79 790.65h0.86V795.79h-0.86zM495.88 786.03h0.86V788.80h-0.86zM496.97 781.97h0.86V789.93h-0.86zM498.06 792.70h0.86V794.84h-0.86zM499.15 785.75h0.86V789.53h-0.86zM500.24 790.37h0.86V794.39h-0.86zM501.33 792.50h0.86V794.39h-0.86zM502.41 780.64h0.86V787.99h-0.86zM503.50 767.20h0.86V783.98h-0.86zM504.59 780.22h0.86V787.73h-0.86zM505.68 794.28h0.86V796.93h-0.86zM506.77 793.29h0.86V795.71h-0.86zM507.86 782.15h0.86V788.50h-0.86zM508.95 778.59h0.86V791.68h-0.86zM510.04 770.90h0.86V784.19h-0.86zM511.13 791.63h0.86V794.02h-0.86zM512.22 790.09h0.86V793.80h-0.86zM513.31 788.14h0.86V792.71h-0.86zM514.39 788.89h0.86V793.10h-0.86zM515.48 782.73h0.86V790.51h-0.86zM516.57 778.35h0.86V785.67h-0.86zM517.66 781.76h0.86V791.72h-0.86zM518.75 777.71h0.86V793.82h-0.86zM519.84 782.00h0.86V788.22h-0.86zM520.93 785.32h0.86V793.20h-0.86zM522.02 792.68h0.86V796.55h-0.86zM523.11 780.30h0.86V788.39h-0.86zM524.20 777.21h0.86V786.93h-0.86zM525.29 772.35h0.86V780.80h-0.86zM526.37 789.99h0.86V793.72h-0.86zM527.46 795.30h0.86V798.45h-0.86zM528.55 788.18h0.86V794.90h-0.86zM529.64 792.30h0.86V796.13h-0.86zM530.73 782.27h0.86V790.67h-0.86zM531.82 785.52h0.86V789.06h-0.86zM532.91 770.20h0.86V781.84h-0.86zM534.00 795.27h0.86V797.16h-0.86zM535.09 787.57h0.86V792.37h-0.86zM536.18 794.32h0.86V797.51h-0.86zM537.26 773.26h0.86V782.90h-0.86zM538.35 790.57h0.86V793.97h-0.86zM539.44 796.04h0.86V797.67h-0.86zM540.53 786.17h0.86V792.64h-0.86zM541.62 788.67h0.86V794.79h-0.86zM542.71 794.63h0.86V796.42h-0.86zM543.80 790.42h0.86V794.46h-0.86zM544.89 795.13h0.86V796.81h-0.86zM545.98 785.44h0.86V792.67h-0.86zM547.07 793.01h0.86V796.27h-0.86zM548.16 778.21h0.86V791.02h-0.86zM549.24 783.26h0.86V792.48h-0.86zM550.33 797.25h0.86V798.20h-0.86zM551.42 799.06h0.86V799.51h-0.86zM552.51 782.62h0.86V788.46h-0.86zM553.60 783.91h0.86V790.45h-0.86zM554.69 797.15h0.86V797.84h-0.86zM555.78 784.97h0.86V790.75h-0.86zM556.87 774.50h0.86V787.54h-0.86zM557.96 793.93h0.86V795.27h-0.86zM559.05 785.09h0.86V792.40h-0.86zM560.14 798.11h0.86V799.31h-0.86zM561.22 789.25h0.86V792.45h-0.86zM562.31 790.76h0.86V793.61h-0.86zM563.40 778.15h0.86V788.89h-0.86zM564.49 789.45h0.86V793.07h-0.86zM565.58 782.93h0.86V786.57h-0.86zM566.67 782.77h0.86V788.42h-0.86zM567.76 793.42h0.86V796.26h-0.86zM568.85 796.41h0.86V798.50h-0.86zM569.94 787.07h0.86V793.30h-0.86zM571.03 794.88h0.86V796.27h-0.86zM572.12 792.83h0.86V795.96h-0.86zM573.20 774.70h0.86V782.62h-0.86zM574.29 792.22h0.86V796.24h-0.86zM575.38 778.51h0.86V788.36h-0.86zM576.47 792.98h0.86V794.52h-0.86zM577.56 778.56h0.86V785.79h-0.86zM578.65 787.98h0.86V792.77h-0.86zM579.74 767.20h0.86V781.01h-0.86zM580.83 784.13h0.86V788.80h-0.86zM581.92 790.10h0.86V793.28h-0.86zM583.01 799.46h0.86V799.94h-0.86zM584.10 774.70h0.86V786.59h-0.86zM585.18 794.24h0.86V795.46h-0.86zM586.27 788.50h0.86V793.04h-0.86zM587.36 786.69h0.86V791.19h-0.86zM588.45 793.53h0.86V794.22h-0.86zM589.54 799.79h0.86V800.14h-0.86zM590.63 774.62h0.86V783.48h-0.86zM591.72 774.48h0.86V788.79h-0.86zM592.81 774.34h0.86V783.88h-0.86zM593.90 778.22h0.86V790.76h-0.86zM594.99 774.07h0.86V787.65h-0.86zM596.07 790.89h0.86V794.54h-0.86zM597.16 789.96h0.86V794.56h-0.86zM598.25 779.90h0.86V788.48h-0.86zM599.34 789.97h0.86V793.51h-0.86zM600.43 787.32h0.86V792.11h-0.86zM601.52 793.42h0.86V794.45h-0.86zM602.61 791.15h0.86V795.13h-0.86zM603.70 785.44h0.86V790.52h-0.86zM604.79 782.58h0.86V787.32h-0.86zM605.88 782.74h0.86V789.97h-0.86zM606.97 779.66h0.86V787.54h-0.86zM608.05 792.47h0.86V795.89h-0.86zM609.14 794.43h0.86V797.03h-0.86zM610.23 772.14h0.86V780.25h-0.86zM611.32 779.11h0.86V788.77h-0.86zM612.41 771.86h0.86V784.03h-0.86zM613.50 732.00h0.86V746.00h-0.86zM614.59 779.96h0.86V787.02h-0.86zM615.68 788.37h0.86V793.98h-0.86zM616.77 785.39h0.86V792.20h-0.86zM617.86 796.42h0.86V797.51h-0.86zM618.95 771.03h0.86V785.33h-0.86zM620.03 792.25h0.86V793.67h-0.86zM621.12 777.45h0.86V788.34h-0.86zM622.21 793.00h0.86V795.68h-0.86zM623.30 785.16h0.86V789.53h-0.86zM624.39 791.28h0.86V794.85h-0.86zM625.48 785.03h0.86V791.26h-0.86zM626.57 789.22h0.86V791.29h-0.86zM627.66 784.51h0.86V790.81h-0.86zM628.75 774.51h0.86V783.58h-0.86zM629.84 778.87h0.86V790.11h-0.86zM630.93 793.03h0.86V796.16h-0.86zM632.01 794.08h0.86V796.45h-0.86zM633.10 794.32h0.86V799.47h-0.86zM634.19 786.78h0.86V792.67h-0.86zM635.28 770.90h0.86V786.06h-0.86zM636.37 788.78h0.86V792.20h-0.86zM637.46 790.33h0.86V793.40h-0.86zM638.55 794.69h0.86V797.25h-0.86zM639.64 778.38h0.86V787.47h-0.86zM640.73 794.99h0.86V795.56h-0.86zM641.82 779.40h0.86V785.43h-0.86zM642.90 794.04h0.86V796.30h-0.86zM643.99 781.04h0.86V784.67h-0.86zM645.08 775.31h0.86V784.98h-0.86zM646.17 788.03h0.86V793.51h-0.86zM647.26 793.69h0.86V794.76h-0.86zM648.35 789.38h0.86V795.60h-0.86zM649.44 789.03h0.86V791.30h-0.86zM650.53 791.02h0.86V796.89h-0.86zM651.62 782.91h0.86V788.29h-0.86zM652.71 791.52h0.86V793.69h-0.86zM653.80 779.20h0.86V784.21h-0.86zM654.88 790.08h0.86V793.21h-0.86zM655.97 775.93h0.86V784.64h-0.86zM657.06 789.31h0.86V792.10h-0.86zM658.15 784.99h0.86V791.67h-0.86zM659.24 779.90h0.86V793.37h-0.86zM660.33 798.26h0.86V798.89h-0.86zM661.42 792.09h0.86V795.46h-0.86zM662.51 781.96h0.86V787.79h-0.86zM663.60 785.69h0.86V788.28h-0.86zM664.69 781.07h0.86V789.22h-0.86zM665.78 767.90h0.86V786.11h-0.86zM666.86 788.56h0.86V792.78h-0.86zM667.95 779.12h0.86V790.79h-0.86zM669.04 767.28h0.86V776.31h-0.86zM670.13 783.35h0.86V792.38h-0.86zM671.22 767.10h0.86V779.47h-0.86zM672.31 767.10h0.86V774.72h-0.86zM673.40 767.10h0.86V779.82h-0.86zM674.49 795.78h0.86V796.41h-0.86zM675.58 767.10h0.86V777.54h-0.86zM676.67 752.20h0.86V773.42h-0.86zM677.76 782.59h0.86V788.94h-0.86zM678.84 791.38h0.86V794.12h-0.86zM679.93 796.22h0.86V798.75h-0.86zM681.02 773.28h0.86V786.62h-0.86zM682.11 790.83h0.86V795.23h-0.86zM683.20 767.10h0.86V786.98h-0.86zM684.29 791.12h0.86V794.98h-0.86zM685.38 780.79h0.86V787.76h-0.86zM686.47 790.68h0.86V792.26h-0.86zM687.56 789.86h0.86V790.90h-0.86zM688.65 784.84h0.86V787.22h-0.86zM689.74 786.11h0.86V787.74h-0.86zM690.82 791.71h0.86V793.14h-0.86zM691.91 787.34h0.86V792.30h-0.86zM693.00 771.98h0.86V781.52h-0.86zM694.09 783.62h0.86V789.37h-0.86zM695.18 782.02h0.86V791.36h-0.86zM696.27 788.73h0.86V790.13h-0.86zM697.36 791.30h0.86V792.20h-0.86zM698.45 773.43h0.86V784.86h-0.86zM699.54 782.96h0.86V784.48h-0.86zM700.63 788.61h0.86V790.46h-0.86zM701.71 778.07h0.86V786.50h-0.86zM702.80 771.66h0.86V781.56h-0.86zM703.89 796.56h0.86V797.61h-0.86zM704.98 788.72h0.86V789.70h-0.86zM706.07 774.16h0.86V781.38h-0.86zM707.16 775.50h0.86V778.47h-0.86zM708.25 789.03h0.86V790.61h-0.86zM709.34 790.11h0.86V792.10h-0.86zM710.43 787.97h0.86V789.86h-0.86zM711.52 789.08h0.86V792.08h-0.86zM712.61 781.80h0.86V788.34h-0.86zM713.69 789.41h0.86V793.38h-0.86zM714.78 777.63h0.86V784.86h-0.86zM715.87 787.69h0.86V789.82h-0.86zM716.96 769.61h0.86V779.58h-0.86zM718.05 794.12h0.86V795.53h-0.86zM719.14 774.78h0.86V787.40h-0.86zM720.23 779.80h0.86V785.96h-0.86zM721.32 780.94h0.86V785.20h-0.86zM722.41 772.71h0.86V781.31h-0.86zM723.50 715.70h0.86V749.30h-0.86zM724.59 759.53h0.86V777.15h-0.86zM725.67 752.17h0.86V769.28h-0.86zM726.76 784.19h0.86V787.95h-0.86zM727.85 740.24h0.86V763.41h-0.86zM728.94 774.73h0.86V782.72h-0.86zM730.03 773.07h0.86V776.92h-0.86zM731.12 768.07h0.86V772.48h-0.86zM732.21 742.58h0.86V751.08h-0.86zM733.30 765.21h0.86V769.31h-0.86zM734.39 757.52h0.86V762.08h-0.86zM735.48 769.79h0.86V773.01h-0.86zM736.57 723.34h0.86V739.85h-0.86zM737.65 753.22h0.86V763.35h-0.86zM738.74 773.33h0.86V778.10h-0.86zM739.83 780.57h0.86V783.21h-0.86zM740.92 765.05h0.86V768.42h-0.86zM742.01 770.25h0.86V772.48h-0.86zM743.10 765.64h0.86V770.20h-0.86zM744.19 770.19h0.86V772.91h-0.86zM745.28 783.65h0.86V785.40h-0.86zM746.37 724.83h0.86V744.08h-0.86zM747.46 735.08h0.86V744.05h-0.86zM748.55 638.20h0.86V679.51h-0.86zM749.63 769.48h0.86V772.64h-0.86zM750.72 703.36h0.86V719.67h-0.86zM751.81 727.84h0.86V749.43h-0.86zM752.90 756.64h0.86V762.38h-0.86zM753.99 635.20h0.86V694.20h-0.86zM755.08 742.67h0.86V746.44h-0.86zM756.17 748.31h0.86V752.55h-0.86zM757.26 765.69h0.86V770.29h-0.86zM758.35 747.47h0.86V750.21h-0.86zM759.44 741.39h0.86V745.83h-0.86zM760.52 754.73h0.86V758.42h-0.86zM761.61 757.20h0.86V762.22h-0.86zM762.70 728.99h0.86V738.72h-0.86zM763.79 610.20h0.86V648.50h-0.86zM764.88 660.16h0.86V710.90h-0.86zM765.97 727.00h0.86V765.43h-0.86zM767.06 708.21h0.86V728.48h-0.86zM768.15 656.69h0.86V715.11h-0.86zM769.24 764.73h0.86V766.76h-0.86zM770.33 785.63h0.86V787.89h-0.86zM771.42 754.89h0.86V763.47h-0.86zM772.50 775.46h0.86V778.76h-0.86zM773.59 741.67h0.86V760.67h-0.86zM774.68 762.86h0.86V767.19h-0.86zM775.77 671.17h0.86V696.28h-0.86zM776.86 787.59h0.86V789.16h-0.86zM777.95 670.68h0.86V722.64h-0.86zM779.04 735.28h0.86V755.86h-0.86zM780.13 720.44h0.86V735.60h-0.86zM781.22 708.28h0.86V728.30h-0.86zM782.31 762.43h0.86V766.08h-0.86zM783.40 750.68h0.86V756.91h-0.86zM784.48 669.15h0.86V704.28h-0.86zM785.57 717.81h0.86V738.98h-0.86zM786.66 746.34h0.86V763.84h-0.86zM787.75 706.70h0.86V742.13h-0.86zM788.84 760.75h0.86V766.70h-0.86zM789.93 764.22h0.86V768.64h-0.86zM791.02 675.20h0.86V714.65h-0.86zM792.11 717.76h0.86V737.90h-0.86zM793.20 767.02h0.86V769.32h-0.86zM794.29 699.64h0.86V724.93h-0.86zM795.38 744.71h0.86V750.24h-0.86zM796.46 749.79h0.86V756.64h-0.86zM797.55 743.21h0.86V755.01h-0.86zM798.64 506.20h0.86V626.88h-0.86zM799.73 749.92h0.86V757.85h-0.86zM800.82 746.31h0.86V754.60h-0.86zM801.91 677.70h0.86V706.71h-0.86zM803.00 723.79h0.86V739.32h-0.86zM804.09 704.19h0.86V722.68h-0.86zM805.18 670.93h0.86V706.02h-0.86zM806.27 762.30h0.86V766.70h-0.86zM807.36 756.92h0.86V773.75h-0.86zM808.44 743.10h0.86V757.54h-0.86zM809.53 760.22h0.86V765.34h-0.86zM810.62 738.67h0.86V745.91h-0.86zM811.71 743.72h0.86V748.72h-0.86zM812.80 695.97h0.86V735.76h-0.86zM813.89 714.66h0.86V743.90h-0.86zM814.98 499.20h0.86V626.06h-0.86zM816.07 758.67h0.86V767.51h-0.86zM817.16 646.43h0.86V711.64h-0.86zM818.25 748.27h0.86V757.97h-0.86zM819.33 735.72h0.86V744.23h-0.86zM820.42 703.72h0.86V715.49h-0.86zM821.51 712.25h0.86V741.05h-0.86zM822.60 608.26h0.86V685.25h-0.86zM823.69 616.59h0.86V653.12h-0.86zM824.78 604.12h0.86V672.17h-0.86zM825.87 634.47h0.86V683.33h-0.86zM826.96 758.68h0.86V761.09h-0.86zM828.05 683.88h0.86V703.13h-0.86zM829.14 771.80h0.86V776.03h-0.86zM830.23 651.16h0.86V712.70h-0.86zM831.31 625.77h0.86V673.71h-0.86zM832.40 653.02h0.86V676.07h-0.86zM833.49 720.37h0.86V734.18h-0.86zM834.58 617.09h0.86V687.18h-0.86zM835.67 706.75h0.86V728.11h-0.86zM836.76 690.18h0.86V732.94h-0.86zM837.85 579.29h0.86V665.19h-0.86zM838.94 581.20h0.86V650.02h-0.86zM840.03 704.68h0.86V714.05h-0.86zM841.12 677.70h0.86V687.63h-0.86zM842.21 630.05h0.86V647.18h-0.86zM843.29 729.88h0.86V737.42h-0.86zM844.38 735.50h0.86V741.28h-0.86zM845.47 607.20h0.86V664.91h-0.86zM846.56 668.87h0.86V681.47h-0.86zM847.65 717.42h0.86V727.07h-0.86zM848.74 736.44h0.86V750.28h-0.86zM849.83 719.80h0.86V728.61h-0.86zM850.92 631.20h0.86V689.38h-0.86zM852.01 728.49h0.86V734.43h-0.86zM853.10 700.96h0.86V712.34h-0.86zM854.19 708.42h0.86V733.11h-0.86zM855.27 717.50h0.86V732.51h-0.86zM856.36 708.87h0.86V739.07h-0.86zM857.45 694.77h0.86V736.57h-0.86zM858.54 623.14h0.86V677.63h-0.86zM859.63 759.57h0.86V764.88h-0.86zM860.72 772.37h0.86V776.47h-0.86zM861.81 710.47h0.86V744.07h-0.86zM862.90 742.73h0.86V770.14h-0.86zM863.99 754.07h0.86V759.85h-0.86zM865.08 734.34h0.86V745.48h-0.86zM866.17 664.49h0.86V717.90h-0.86zM867.25 787.94h0.86V789.44h-0.86zM868.34 722.50h0.86V747.16h-0.86zM869.43 722.02h0.86V744.54h-0.86zM870.52 774.34h0.86V776.34h-0.86zM871.61 691.95h0.86V714.22h-0.86zM872.70 766.44h0.86V771.31h-0.86zM873.79 754.04h0.86V760.34h-0.86zM874.88 757.99h0.86V763.06h-0.86zM875.97 788.96h0.86V790.86h-0.86zM877.06 763.86h0.86V767.75h-0.86zM878.14 744.73h0.86V749.76h-0.86zM879.23 762.21h0.86V767.25h-0.86zM880.32 774.99h0.86V778.28h-0.86zM881.41 717.22h0.86V729.42h-0.86zM882.50 746.75h0.86V751.39h-0.86zM883.59 581.20h0.86V672.69h-0.86zM884.68 769.21h0.86V773.06h-0.86zM885.77 759.52h0.86V763.45h-0.86zM886.86 593.20h0.86V673.73h-0.86zM887.95 725.46h0.86V737.47h-0.86zM889.04 664.54h0.86V678.27h-0.86zM890.12 689.54h0.86V704.55h-0.86zM891.21 735.05h0.86V741.94h-0.86zM892.30 752.99h0.86V758.43h-0.86zM893.39 767.59h0.86V771.45h-0.86zM894.48 642.81h0.86V674.80h-0.86zM895.57 763.91h0.86V769.32h-0.86zM896.66 784.93h0.86V787.01h-0.86zM897.75 750.77h0.86V760.76h-0.86zM898.84 752.49h0.86V761.68h-0.86zM899.93 651.09h0.86V703.14h-0.86zM901.02 780.76h0.86V782.62h-0.86zM902.10 778.72h0.86V780.56h-0.86zM903.19 773.94h0.86V777.12h-0.86zM904.28 727.89h0.86V736.63h-0.86zM905.37 697.10h0.86V727.57h-0.86zM906.46 661.02h0.86V724.62h-0.86zM907.55 743.33h0.86V747.88h-0.86zM908.64 733.53h0.86V748.41h-0.86zM909.73 665.99h0.86V720.72h-0.86zM910.82 683.15h0.86V705.78h-0.86zM911.91 688.74h0.86V726.81h-0.86zM913.00 734.33h0.86V740.85h-0.86zM914.08 747.09h0.86V755.38h-0.86zM915.17 721.27h0.86V731.63h-0.86zM916.26 726.85h0.86V735.45h-0.86zM917.35 763.11h0.86V767.42h-0.86zM918.44 623.20h0.86V682.10h-0.86zM919.53 708.14h0.86V746.29h-0.86zM920.62 731.83h0.86V746.69h-0.86zM921.71 697.87h0.86V732.84h-0.86zM922.80 610.20h0.86V668.44h-0.86zM923.89 682.75h0.86V713.65h-0.86zM924.98 596.12h0.86V657.42h-0.86zM926.06 585.52h0.86V626.77h-0.86zM927.15 727.00h0.86V733.33h-0.86zM928.24 574.55h0.86V656.68h-0.86zM929.33 569.07h0.86V629.13h-0.86zM930.42 642.52h0.86V678.10h-0.86zM931.51 568.57h0.86V622.74h-0.86zM932.60 507.20h0.86V605.36h-0.86zM933.69 683.78h0.86V688.91h-0.86zM934.78 643.29h0.86V662.03h-0.86zM935.87 718.36h0.86V726.01h-0.86zM936.95 730.95h0.86V740.28h-0.86zM938.04 760.39h0.86V764.64h-0.86zM939.13 610.83h0.86V661.01h-0.86zM940.22 585.12h0.86V620.78h-0.86zM941.31 716.78h0.86V727.02h-0.86zM942.40 681.95h0.86V697.25h-0.86zM943.49 757.85h0.86V762.95h-0.86zM944.58 749.67h0.86V755.67h-0.86zM945.67 654.07h0.86V669.58h-0.86zM946.76 703.73h0.86V715.82h-0.86zM947.85 681.67h0.86V697.02h-0.86zM948.93 636.70h0.86V665.81h-0.86zM950.02 742.31h0.86V747.04h-0.86zM951.11 755.61h0.86V762.16h-0.86zM952.20 690.66h0.86V699.98h-0.86zM953.29 644.63h0.86V662.27h-0.86zM954.38 748.10h0.86V751.76h-0.86zM955.47 741.60h0.86V746.65h-0.86zM956.56 599.34h0.86V684.44h-0.86zM957.65 734.83h0.86V742.85h-0.86zM958.74 680.47h0.86V731.91h-0.86zM959.83 721.12h0.86V730.96h-0.86zM960.91 596.44h0.86V656.24h-0.86zM962.00 644.78h0.86V683.06h-0.86zM963.09 654.06h0.86V667.75h-0.86zM964.18 727.28h0.86V737.12h-0.86zM965.27 677.26h0.86V691.21h-0.86zM966.36 708.60h0.86V718.21h-0.86zM967.45 666.33h0.86V698.32h-0.86zM968.54 716.49h0.86V724.91h-0.86zM969.63 730.30h0.86V737.97h-0.86zM970.72 674.55h0.86V695.79h-0.86zM971.81 675.49h0.86V680.56h-0.86zM972.89 768.74h0.86V773.40h-0.86zM973.98 718.83h0.86V733.69h-0.86zM975.07 717.62h0.86V731.55h-0.86zM976.16 574.01h0.86V635.32h-0.86zM977.25 749.86h0.86V758.05h-0.86zM978.34 763.54h0.86V765.70h-0.86zM979.43 656.94h0.86V698.76h-0.86zM980.52 735.51h0.86V744.75h-0.86zM981.61 631.08h0.86V678.87h-0.86zM982.70 600.82h0.86V649.67h-0.86zM983.79 727.51h0.86V736.08h-0.86zM984.87 642.14h0.86V690.64h-0.86zM985.96 732.20h0.86V742.57h-0.86zM987.05 771.01h0.86V777.78h-0.86zM988.14 612.25h0.86V643.32h-0.86zM989.23 562.20h0.86V609.18h-0.86zM990.32 720.22h0.86V730.07h-0.86zM991.41 535.86h0.86V606.07h-0.86zM992.50 504.20h0.86V607.85h-0.86zM993.59 748.94h0.86V760.66h-0.86zM994.68 667.99h0.86V733.83h-0.86zM995.76 780.90h0.86V785.50h-0.86zM996.85 737.41h0.86V768.88h-0.86zM997.94 507.20h0.86V627.75h-0.86zM999.03 647.13h0.86V704.36h-0.86zM1000.12 508.20h0.86V609.84h-0.86zM1001.21 526.55h0.86V634.04h-0.86zM1002.30 629.70h0.86V704.08h-0.86zM1003.39 750.58h0.86V754.10h-0.86zM1004.48 535.20h0.86V610.53h-0.86zM1005.57 632.74h0.86V690.52h-0.86zM1006.66 697.36h0.86V726.67h-0.86zM1007.74 724.60h0.86V752.97h-0.86zM1008.83 697.56h0.86V733.69h-0.86zM1009.92 705.47h0.86V739.42h-0.86zM1011.01 617.25h0.86V663.71h-0.86zM1012.10 494.20h0.86V633.04h-0.86zM1013.19 659.73h0.86V700.77h-0.86zM1014.28 691.95h0.86V727.88h-0.86zM1015.37 585.36h0.86V656.07h-0.86zM1016.46 637.83h0.86V674.22h-0.86zM1017.55 547.39h0.86V674.54h-0.86zM1018.64 711.19h0.86V732.73h-0.86zM1019.72 756.45h0.86V761.17h-0.86zM1020.81 616.78h0.86V690.63h-0.86zM1021.90 658.63h0.86V678.61h-0.86zM1022.99 524.20h0.86V626.99h-0.86zM1024.08 651.38h0.86V694.07h-0.86zM1025.17 343.20h0.86V433.20h-0.86zM1026.26 605.52h0.86V642.72h-0.86zM1027.35 637.32h0.86V664.50h-0.86zM1028.44 629.32h0.86V658.08h-0.86zM1029.53 654.16h0.86V701.81h-0.86zM1030.62 690.35h0.86V713.61h-0.86zM1031.70 499.20h0.86V606.95h-0.86zM1032.79 677.73h0.86V709.63h-0.86zM1033.88 519.03h0.86V638.88h-0.86zM1034.97 448.20h0.86V575.14h-0.86zM1036.06 644.40h0.86V681.30h-0.86zM1037.15 448.20h0.86V573.74h-0.86zM1038.24 656.20h0.86V677.29h-0.86zM1039.33 617.15h0.86V664.77h-0.86zM1040.42 685.54h0.86V710.80h-0.86zM1041.51 554.98h0.86V624.74h-0.86zM1042.60 522.20h0.86V633.70h-0.86zM1043.68 707.98h0.86V742.71h-0.86zM1044.77 674.92h0.86V710.07h-0.86zM1045.86 701.89h0.86V715.72h-0.86zM1046.95 644.76h0.86V696.53h-0.86zM1048.04 615.15h0.86V664.32h-0.86zM1049.13 586.74h0.86V638.22h-0.86zM1050.22 732.95h0.86V749.00h-0.86zM1051.31 591.69h0.86V655.79h-0.86zM1052.40 568.28h0.86V614.31h-0.86zM1053.49 667.53h0.86V689.32h-0.86zM1054.57 675.71h0.86V715.64h-0.86zM1055.66 714.61h0.86V727.86h-0.86zM1056.75 702.04h0.86V734.01h-0.86zM1057.84 694.48h0.86V710.86h-0.86zM1058.93 581.13h0.86V665.71h-0.86zM1060.02 766.92h0.86V768.97h-0.86zM1061.11 577.10h0.86V651.99h-0.86zM1062.20 747.72h0.86V751.15h-0.86zM1063.29 575.20h0.86V640.22h-0.86zM1064.38 683.67h0.86V721.95h-0.86zM1065.47 720.17h0.86V731.97h-0.86zM1066.55 647.75h0.86V738.66h-0.86zM1067.64 647.48h0.86V702.18h-0.86zM1068.73 528.20h0.86V653.83h-0.86zM1069.82 740.35h0.86V753.08h-0.86zM1070.91 696.42h0.86V732.74h-0.86z" fill="#ffc0cb"/><path d="M154.5 803.2 C178.8 803.1 266.9 803.0 300.0 802.6 C333.1 802.2 336.2 801.5 352.9 800.6 C369.6 799.7 385.5 798.9 400.0 797.2 C414.5 795.5 427.6 793.3 440.0 790.3 C452.4 787.3 465.2 782.2 474.5 779.4 C483.8 776.6 486.0 775.3 495.7 773.5 C505.4 771.7 512.4 772.1 532.7 768.6 C553.0 765.1 592.6 756.7 617.3 752.7 C642.0 748.7 667.0 746.7 680.8 744.8 C694.6 742.9 693.4 742.7 700.0 741.4 C706.6 740.1 716.0 738.7 720.6 737.2 C725.2 735.7 723.3 734.3 727.4 732.4 C731.5 730.5 741.1 727.9 745.2 725.6 C749.3 723.3 749.1 721.3 752.1 718.7 C755.1 716.1 760.4 712.6 763.1 709.8 C765.9 706.9 765.0 704.5 768.6 701.6 C772.2 698.8 780.4 695.6 785.0 692.7 C789.6 689.8 793.2 687.6 796.0 684.4 C798.8 681.2 798.1 678.5 801.5 673.5 C804.9 668.5 812.4 659.0 816.5 654.3 C820.6 649.6 822.2 649.1 826.1 645.4 C830.0 641.7 834.5 638.1 840.0 632.3 C845.5 626.4 851.9 617.6 859.4 610.3 C866.9 603.0 876.3 596.5 884.8 588.6 C893.2 580.8 902.0 571.7 910.1 563.2 C918.2 554.7 926.1 546.2 933.4 537.8 C940.6 529.3 946.6 521.5 953.6 512.5 C960.6 503.4 969.4 491.4 975.4 483.5 C981.4 475.6 984.4 474.1 989.9 465.4 C995.4 456.6 1002.0 445.2 1008.6 431.0 C1015.2 416.8 1023.6 394.4 1029.8 380.3 C1036.0 366.2 1038.6 358.3 1045.6 346.5 C1052.6 334.7 1067.6 315.8 1072.0 309.6" fill="none" stroke="#84d6be" stroke-width="1.45" stroke-linejoin="round"/><line x1="145.5" y1="299.3" x2="154.5" y2="299.3" stroke="#727272" stroke-width="1.2"/><line x1="145.5" y1="383.3" x2="154.5" y2="383.3" stroke="#727272" stroke-width="1.2"/><line x1="145.5" y1="467.3" x2="154.5" y2="467.3" stroke="#727272" stroke-width="1.2"/><line x1="145.5" y1="551.3" x2="154.5" y2="551.3" stroke="#727272" stroke-width="1.2"/><line x1="145.5" y1="635.3" x2="154.5" y2="635.3" stroke="#727272" stroke-width="1.2"/><line x1="145.5" y1="719.3" x2="154.5" y2="719.3" stroke="#727272" stroke-width="1.2"/><line x1="145.5" y1="803.2" x2="154.5" y2="803.2" stroke="#727272" stroke-width="1.2"/><line x1="1072.5" y1="299.3" x2="1081.5" y2="299.3" stroke="#727272" stroke-width="1.2"/><line x1="1072.5" y1="425.6" x2="1081.5" y2="425.6" stroke="#727272" stroke-width="1.2"/><line x1="1072.5" y1="551.5" x2="1081.5" y2="551.5" stroke="#727272" stroke-width="1.2"/><line x1="1072.5" y1="677.4" x2="1081.5" y2="677.4" stroke="#727272" stroke-width="1.2"/><line x1="1072.5" y1="803.2" x2="1081.5" y2="803.2" stroke="#727272" stroke-width="1.2"/><line x1="178.1" y1="803.2" x2="178.1" y2="812.2" stroke="#727272" stroke-width="1.2"/><line x1="289.4" y1="803.2" x2="289.4" y2="812.2" stroke="#727272" stroke-width="1.2"/><line x1="397.6" y1="803.2" x2="397.6" y2="812.2" stroke="#727272" stroke-width="1.2"/><line x1="511" y1="803.2" x2="511" y2="812.2" stroke="#727272" stroke-width="1.2"/><line x1="625" y1="803.2" x2="625" y2="812.2" stroke="#727272" stroke-width="1.2"/><line x1="734" y1="803.2" x2="734" y2="812.2" stroke="#727272" stroke-width="1.2"/><line x1="843" y1="803.2" x2="843" y2="812.2" stroke="#727272" stroke-width="1.2"/><line x1="957" y1="803.2" x2="957" y2="812.2" stroke="#727272" stroke-width="1.2"/><line x1="1072.5" y1="803.2" x2="1072.5" y2="812.2" stroke="#727272" stroke-width="1.2"/><rect x="333.8" y="874.5" width="21" height="16" fill="#52d926"/><rect x="424.1" y="874.5" width="21" height="16" fill="#3d1fd3"/><rect x="514" y="874.5" width="21" height="16" fill="#ffa500"/><rect x="602.9" y="874.5" width="21" height="16" fill="#ffc0cb"/><path d="M708.9 882.4h7.1M722.8 882.4h7.1" stroke="#9cf5dc" stroke-width="2.8" fill="none"/><circle cx="719.4" cy="882.4" r="3.4" stroke="#9cf5dc" stroke-width="2.6" fill="none"/><line x1="1345.5" y1="299.3" x2="2368.6" y2="299.3" stroke="rgba(255,255,255,0.12)" stroke-width="1.3" stroke-dasharray="22.5 22.5"/><line x1="1345.5" y1="540.6" x2="2368.6" y2="540.6" stroke="rgba(255,255,255,0.12)" stroke-width="1.3" stroke-dasharray="22.5 22.5"/><line x1="1345.5" y1="672" x2="2368.6" y2="672" stroke="rgba(255,255,255,0.12)" stroke-width="1.3" stroke-dasharray="22.5 22.5"/><line x1="1432.9" y1="299.3" x2="1432.9" y2="803.5" stroke="rgba(255,255,255,0.12)" stroke-width="1.3" stroke-dasharray="22.5 22.5"/><line x1="1544.5" y1="299.3" x2="1544.5" y2="803.5" stroke="rgba(255,255,255,0.12)" stroke-width="1.3" stroke-dasharray="22.5 22.5"/><line x1="1656.4" y1="299.3" x2="1656.4" y2="803.5" stroke="rgba(255,255,255,0.12)" stroke-width="1.3" stroke-dasharray="22.5 22.5"/><line x1="1772.2" y1="299.3" x2="1772.2" y2="803.5" stroke="rgba(255,255,255,0.12)" stroke-width="1.3" stroke-dasharray="22.5 22.5"/><line x1="1887.7" y1="299.3" x2="1887.7" y2="803.5" stroke="rgba(255,255,255,0.12)" stroke-width="1.3" stroke-dasharray="22.5 22.5"/><line x1="1999.5" y1="299.3" x2="1999.5" y2="803.5" stroke="rgba(255,255,255,0.12)" stroke-width="1.3" stroke-dasharray="22.5 22.5"/><line x1="2111.4" y1="299.3" x2="2111.4" y2="803.5" stroke="rgba(255,255,255,0.12)" stroke-width="1.3" stroke-dasharray="22.5 22.5"/><line x1="2225.5" y1="299.3" x2="2225.5" y2="803.5" stroke="rgba(255,255,255,0.12)" stroke-width="1.3" stroke-dasharray="22.5 22.5"/><line x1="2368.6" y1="299.3" x2="2368.6" y2="803.5" stroke="rgba(255,255,255,0.12)" stroke-width="1.3" stroke-dasharray="22.5 22.5"/><path d="M1345.5 299.3 V803.5 H2368.6" fill="none" stroke="#727272" stroke-width="1.2"/><path d="M1345.5 803.8 L1346.8 803.7 L1348.1 803.6 L1349.4 803.9 L1350.7 803.5 L1352.0 803.8 L1353.3 803.7 L1354.6 803.5 L1355.9 803.8 L1357.2 803.5 L1358.5 803.7 L1359.8 803.5 L1361.1 803.5 L1362.4 803.7 L1363.7 804.0 L1365.0 803.5 L1366.3 803.6 L1367.6 803.9 L1368.9 804.1 L1370.3 803.8 L1371.6 803.7 L1372.9 804.1 L1374.2 803.4 L1375.5 804.0 L1376.8 803.6 L1378.1 803.5 L1379.4 803.5 L1380.7 803.6 L1382.0 804.0 L1383.3 803.5 L1384.6 803.8 L1385.9 803.8 L1387.2 803.6 L1388.5 803.8 L1389.8 803.4 L1391.1 803.4 L1392.4 803.5 L1393.7 803.8 L1395.0 803.7 L1396.3 803.6 L1397.6 803.8 L1398.9 803.7 L1400.2 803.6 L1401.5 803.9 L1402.8 803.8 L1404.1 803.5 L1405.4 803.8 L1406.7 803.7 L1408.0 804.0 L1409.3 803.9 L1410.6 803.6 L1411.9 804.0 L1413.2 803.4 L1414.5 803.6 L1415.8 803.9 L1417.1 803.4 L1418.5 803.7 L1419.8 803.4 L1421.1 803.8 L1422.4 803.9 L1423.7 803.7 L1425.0 803.9 L1426.3 803.5 L1427.6 803.8 L1428.9 803.7 L1430.2 803.7 L1431.5 803.6 L1432.8 803.9 L1434.1 804.0 L1435.4 803.6 L1436.7 803.8 L1438.0 803.4 L1439.3 803.8 L1440.6 803.8 L1441.9 804.0 L1443.2 803.9 L1444.5 803.5 L1445.8 803.6 L1447.1 803.8 L1448.4 803.3 L1449.7 803.6 L1451.0 803.4 L1452.3 803.4 L1453.6 803.3 L1454.9 803.8 L1456.2 803.4 L1457.5 803.5 L1458.8 803.5 L1460.1 803.9 L1461.4 803.3 L1462.7 803.6 L1464.0 803.6 L1465.4 803.9 L1466.7 803.8 L1468.0 803.9 L1469.3 803.5 L1470.6 803.5 L1471.9 803.5 L1473.2 803.9 L1474.5 803.9 L1475.8 803.4 L1477.1 803.4 L1478.4 803.4 L1479.7 803.4 L1481.0 803.6 L1482.3 803.6 L1483.6 803.4 L1484.9 803.2 L1486.2 803.5 L1487.5 803.5 L1488.8 803.6 L1490.1 803.9 L1491.4 803.7 L1492.7 803.6 L1494.0 803.6 L1495.3 803.7 L1496.6 803.3 L1497.9 803.8 L1499.2 803.8 L1500.5 803.8 L1501.8 803.8 L1503.1 803.5 L1504.4 803.5 L1505.7 803.3 L1507.0 803.6 L1508.3 803.2 L1509.6 803.2 L1510.9 803.3 L1512.2 803.3 L1513.6 803.4 L1514.9 803.2 L1516.2 803.2 L1517.5 803.3 L1518.8 803.3 L1520.1 803.4 L1521.4 803.2 L1522.7 803.8 L1524.0 803.6 L1525.3 803.3 L1526.6 803.3 L1527.9 803.4 L1529.2 803.4 L1530.5 803.2 L1531.8 803.7 L1533.1 803.8 L1534.4 803.5 L1535.7 803.5 L1537.0 803.5 L1538.3 803.2 L1539.6 803.2 L1540.9 803.3 L1542.2 803.3 L1543.5 803.6 L1544.8 803.2 L1546.1 803.1 L1547.4 803.7 L1548.7 803.4 L1550.0 803.1 L1551.3 803.4 L1552.6 803.0 L1554.0 803.3 L1555.3 803.6 L1556.6 803.5 L1557.9 803.4 L1559.2 803.1 L1560.5 803.1 L1561.8 803.0 L1563.1 803.4 L1564.4 803.2 L1565.7 803.3 L1567.0 803.0 L1568.3 802.9 L1569.6 803.3 L1570.9 803.4 L1572.2 803.3 L1573.5 803.3 L1574.8 803.3 L1576.1 803.2 L1577.4 802.8 L1578.7 803.0 L1580.0 802.9 L1581.3 802.6 L1582.6 802.6 L1583.9 802.8 L1585.2 802.7 L1586.6 803.0 L1587.9 803.2 L1589.2 802.8 L1590.5 803.2 L1591.8 803.2 L1593.1 803.1 L1594.4 802.7 L1595.7 802.6 L1597.0 802.6 L1598.3 802.5 L1599.6 802.5 L1600.9 802.8 L1602.2 803.0 L1603.5 802.9 L1604.8 802.7 L1606.1 802.8 L1607.4 802.8 L1608.7 802.3 L1610.0 802.7 L1611.3 802.9 L1612.6 802.8 L1613.9 802.7 L1615.2 802.5 L1616.5 802.3 L1617.8 802.7 L1619.2 802.4 L1620.5 802.7 L1621.8 802.8 L1623.1 802.4 L1624.4 802.4 L1625.7 802.7 L1627.0 802.6 L1628.3 802.1 L1629.6 802.1 L1630.9 802.1 L1632.2 802.6 L1633.5 802.5 L1634.8 802.0 L1636.1 802.5 L1637.4 802.6 L1638.7 802.4 L1640.0 802.1 L1641.3 802.3 L1642.6 801.9 L1643.9 801.8 L1645.2 802.5 L1646.5 802.3 L1647.8 802.2 L1649.1 802.4 L1650.4 802.1 L1651.8 802.4 L1653.1 802.3 L1654.4 801.9 L1655.7 801.9 L1657.0 801.9 L1658.3 801.8 L1659.6 802.1 L1660.9 801.8 L1662.2 801.9 L1663.5 801.7 L1664.8 802.2 L1666.1 801.8 L1667.4 801.9 L1668.7 801.9 L1670.0 802.2 L1671.3 801.8 L1672.6 802.1 L1673.9 801.8 L1675.2 801.8 L1676.5 801.8 L1677.8 801.4 L1679.1 801.7 L1680.4 801.5 L1681.7 801.4 L1683.0 801.9 L1684.4 801.5 L1685.7 801.7 L1687.0 801.8 L1688.3 801.7 L1689.6 801.5 L1690.9 801.6 L1692.2 801.6 L1693.5 801.8 L1694.8 801.3 L1696.1 801.6 L1697.4 801.4 L1698.7 801.4 L1700.0 801.5 L1701.3 801.7 L1702.6 801.5 L1703.9 801.5 L1705.2 801.6 L1706.6 801.7 L1707.9 801.4 L1709.2 801.5 L1710.5 801.4 L1711.8 801.4 L1713.1 801.5 L1714.4 801.3 L1715.7 801.4 L1717.0 801.3 L1718.4 801.7 L1719.7 801.5 L1721.0 801.6 L1722.3 801.6 L1723.6 801.1 L1724.9 801.3 L1726.2 801.6 L1727.5 801.5 L1728.8 801.0 L1730.2 800.9 L1731.5 801.2 L1732.8 800.9 L1734.1 801.0 L1735.4 800.9 L1736.7 801.3 L1738.0 801.4 L1739.3 801.4 L1740.6 800.9 L1742.0 801.3 L1743.3 801.2 L1744.6 800.8 L1745.9 801.4 L1747.2 801.4 L1748.5 800.8 L1749.8 801.4 L1751.1 801.0 L1752.4 801.0 L1753.8 801.4 L1755.1 801.2 L1756.4 800.7 L1757.7 800.9 L1759.0 801.0 L1760.3 800.8 L1761.6 800.7 L1762.9 800.8 L1764.2 801.1 L1765.6 800.5 L1766.9 800.9 L1768.2 800.8 L1769.5 800.5 L1770.8 800.7 L1772.1 800.9 L1773.4 800.8 L1774.7 800.5 L1776.0 801.2 L1777.4 801.0 L1778.7 801.1 L1780.0 800.5 L1781.3 800.6 L1782.6 800.4 L1783.9 800.9 L1785.2 800.5 L1786.5 800.4 L1787.8 800.6 L1789.2 801.0 L1790.5 800.9 L1791.8 800.5 L1793.1 800.4 L1794.4 800.9 L1795.7 800.7 L1797.0 800.8 L1798.3 800.3 L1799.6 800.3 L1801.0 800.7 L1802.3 800.5 L1803.6 800.2 L1804.9 800.9 L1806.2 800.6 L1807.5 800.7 L1808.8 800.2 L1810.1 800.8 L1811.4 800.2 L1812.8 800.7 L1814.1 800.4 L1815.4 800.3 L1816.7 800.5 L1818.0 800.7 L1819.3 800.2 L1820.6 800.1 L1821.9 800.4 L1823.2 800.2 L1824.6 800.1 L1825.9 800.1 L1827.2 800.0 L1828.5 800.1 L1829.8 800.2 L1831.1 800.2 L1832.4 800.5 L1833.7 800.1 L1835.0 800.3 L1836.4 800.0 L1837.7 800.1 L1839.0 799.9 L1840.3 800.0 L1841.6 800.2 L1842.9 799.9 L1844.2 800.4 L1845.5 800.3 L1846.8 800.1 L1848.1 800.3 L1849.4 800.7 L1850.7 800.1 L1852.0 800.7 L1853.3 800.4 L1854.6 800.5 L1855.9 800.8 L1857.2 800.5 L1858.5 800.6 L1859.8 800.7 L1861.2 801.0 L1862.5 800.5 L1863.8 800.9 L1865.1 800.8 L1866.4 800.8 L1867.7 800.7 L1869.0 800.7 L1870.3 800.5 L1871.6 800.6 L1872.9 800.5 L1874.2 801.1 L1875.5 800.7 L1876.8 800.7 L1878.1 800.7 L1879.4 801.0 L1880.7 801.2 L1882.0 801.1 L1883.3 800.9 L1884.6 800.6 L1885.9 800.5 L1887.3 800.5 L1888.6 800.5 L1889.9 800.2 L1891.2 800.4 L1892.5 800.2 L1893.8 800.6 L1895.1 800.6 L1896.4 800.2 L1897.7 799.9 L1899.0 800.4 L1900.4 799.8 L1901.7 799.8 L1903.0 799.5 L1904.3 799.7 L1905.6 799.7 L1906.9 799.6 L1908.2 799.4 L1909.5 799.5 L1910.8 799.1 L1912.1 799.2 L1913.5 799.0 L1914.8 799.2 L1916.1 798.8 L1917.4 798.8 L1918.7 798.9 L1920.0 799.0 L1921.3 798.8 L1922.6 799.1 L1923.9 799.0 L1925.3 799.2 L1926.6 799.1 L1927.9 799.2 L1929.2 799.3 L1930.5 798.9 L1931.8 798.9 L1933.1 799.4 L1934.4 798.7 L1935.8 799.2 L1937.1 799.1 L1938.4 798.7 L1939.7 799.3 L1941.0 799.3 L1942.3 799.1 L1943.6 799.2 L1945.0 799.2 L1946.3 798.7 L1947.6 799.0 L1948.9 799.0 L1950.2 799.3 L1951.5 799.2 L1952.8 799.2 L1954.1 799.1 L1955.5 799.3 L1956.8 799.1 L1958.1 799.1 L1959.4 798.8 L1960.7 798.6 L1962.0 798.7 L1963.3 798.9 L1964.6 798.7 L1966.0 799.3 L1967.3 799.0 L1968.6 799.1 L1969.9 799.0 L1971.3 798.5 L1972.7 798.0 L1974.1 797.3 L1975.4 796.4 L1976.8 796.5 L1978.2 795.7 L1979.6 795.6 L1981.0 795.2 L1982.4 794.9 L1983.8 794.7 L1985.2 794.0 L1986.6 794.2 L1987.9 793.6 L1989.3 793.1 L1990.7 793.0 L1992.1 793.1 L1993.5 792.4 L1994.9 792.4 L1996.2 792.8 L1997.6 793.1 L1998.9 792.9 L2000.2 792.9 L2001.6 793.2 L2002.9 793.5 L2004.2 793.7 L2005.5 793.8 L2006.9 794.0 L2008.2 794.0 L2009.5 793.1 L2010.9 792.7 L2012.2 792.3 L2013.6 792.2 L2014.9 791.5 L2016.2 791.7 L2017.6 792.4 L2018.9 792.3 L2020.2 792.8 L2021.6 793.4 L2022.9 794.2 L2024.2 794.6 L2025.5 795.0 L2026.9 795.1 L2028.2 795.7 L2029.6 795.4 L2031.0 795.1 L2032.4 794.8 L2033.8 794.3 L2035.2 794.7 L2036.6 793.8 L2037.9 794.2 L2039.3 793.9 L2040.7 792.8 L2042.1 792.9 L2043.5 793.0 L2044.9 792.4 L2046.3 793.3 L2047.8 793.3 L2049.2 793.6 L2050.6 794.0 L2052.0 795.1 L2053.5 795.0 L2054.9 795.7 L2056.2 793.5 L2057.6 790.9 L2058.9 789.0 L2060.2 787.2 L2061.6 784.2 L2062.9 782.3 L2064.2 785.6 L2065.6 788.2 L2066.9 791.2 L2068.2 791.7 L2069.6 791.6 L2070.9 791.3 L2072.2 792.0 L2073.6 791.8 L2074.9 791.5 L2076.3 791.6 L2077.6 792.1 L2079.0 792.5 L2080.4 792.9 L2081.8 793.2 L2083.2 793.5 L2084.6 794.1 L2086.0 794.5 L2087.4 795.1 L2088.7 795.3 L2090.0 794.5 L2091.3 795.0 L2092.6 795.0 L2093.9 794.3 L2095.2 794.9 L2096.5 794.6 L2097.8 794.7 L2099.1 794.1 L2100.4 794.0 L2101.8 794.0 L2103.1 794.4 L2104.4 793.9 L2105.7 793.6 L2107.0 793.6 L2108.3 793.4 L2109.6 793.1 L2110.9 793.0 L2112.2 793.6 L2113.5 793.0 L2114.8 793.1 L2116.1 794.5 L2117.5 794.9 L2118.8 796.1 L2120.2 796.0 L2121.5 796.2 L2122.9 796.1 L2124.2 796.3 L2125.6 796.8 L2126.9 796.8 L2128.3 796.8 L2129.6 796.8 L2131.0 797.1 L2132.3 797.1 L2133.7 796.9 L2135.0 797.1 L2136.4 797.0 L2137.7 796.5 L2139.1 796.9 L2140.4 796.6 L2141.8 796.7 L2143.1 796.5 L2144.5 796.1 L2145.8 795.8 L2147.2 796.4 L2148.5 795.6 L2149.8 795.8 L2151.2 795.6 L2152.5 795.4 L2153.9 795.7 L2155.2 795.7 L2156.6 795.0 L2157.9 795.1 L2159.2 795.3 L2160.5 795.2 L2161.8 795.5 L2163.1 795.5 L2164.5 795.4 L2165.8 795.5 L2167.1 795.6 L2168.4 796.3 L2169.7 796.1 L2171.0 795.1 L2172.3 793.9 L2173.6 793.1 L2174.9 793.4 L2176.3 793.5 L2177.6 793.1 L2179.0 792.8 L2180.3 792.8 L2181.7 792.7 L2183.0 793.0 L2184.3 792.7 L2185.7 792.9 L2187.0 792.9 L2188.4 793.2 L2189.7 793.4 L2191.1 793.3 L2192.4 793.0 L2193.8 793.0 L2195.1 793.1 L2196.5 791.3 L2197.9 789.4 L2199.3 787.5 L2200.7 785.4 L2202.1 783.8 L2203.5 782.7 L2204.9 780.4 L2206.6 780.8 L2208.3 782.1 L2210.0 782.9 L2211.4 782.9 L2212.7 782.9 L2214.1 782.1 L2215.5 782.0 L2216.8 781.8 L2218.2 781.9 L2219.6 783.4 L2221.1 785.1 L2222.5 787.3 L2224.0 788.8 L2225.4 790.1 L2227.1 789.1 L2228.9 786.9 L2230.6 786.0 L2231.9 785.1 L2233.2 785.3 L2234.5 785.1 L2235.9 784.2 L2237.2 783.9 L2238.5 782.8 L2239.8 782.9 L2241.1 783.5 L2242.5 784.8 L2243.8 785.4 L2245.2 786.1 L2246.5 787.0 L2247.8 787.0 L2249.2 787.6 L2250.5 788.3 L2251.9 789.4 L2253.2 790.1 L2254.6 789.4 L2255.9 788.8 L2257.3 787.8 L2258.7 786.8 L2260.0 786.1 L2261.4 785.0 L2262.9 785.5 L2264.5 786.1 L2266.1 786.1 L2267.6 787.0 L2269.0 786.8 L2270.3 785.7 L2271.7 785.9 L2273.1 785.1 L2274.4 784.3 L2275.8 784.0 L2277.3 782.6 L2278.7 781.7 L2280.2 781.1 L2281.7 780.1 L2283.2 778.4 L2284.6 777.4 L2286.1 776.8 L2287.6 774.8 L2289.1 772.8 L2290.7 770.5 L2292.2 768.6 L2293.8 767.7 L2295.3 767.7 L2296.8 766.4 L2298.4 766.5 L2300.1 768.7 L2301.8 771.3 L2303.5 773.7 L2304.9 774.6 L2306.2 774.5 L2307.6 775.1 L2309.0 775.0 L2310.3 775.1 L2311.7 775.7 L2313.2 772.1 L2314.8 769.6 L2316.3 766.0 L2317.9 762.4 L2319.3 764.8 L2320.8 767.1 L2322.2 770.4 L2323.7 773.2 L2325.1 775.7 L2326.8 771.5 L2328.5 767.2 L2330.2 763.4 L2331.8 767.7 L2333.3 771.6 L2334.9 768.5 L2336.4 764.4 L2338.1 765.4 L2339.9 766.6 L2341.6 768.6 L2343.1 766.2 L2344.5 764.1 L2346.0 762.2 L2347.4 759.3 L2348.9 758.0 L2350.3 755.7 L2351.8 753.1 L2353.4 752.3 L2354.9 751.1 L2356.4 751.5 L2358.0 750.0 L2359.4 747.3 L2360.7 745.8 L2362.1 742.9 L2363.5 745.5 L2364.8 748.6 L2366.2 752.1 L2368.3 755.2" fill="none" stroke="#ffa500" stroke-width="1.85" stroke-linejoin="round"/><path d="M1345.5 803.5 L1346.8 803.7 L1348.1 803.4 L1349.4 803.8 L1350.7 803.5 L1352.0 803.3 L1353.3 803.3 L1354.6 803.4 L1355.9 803.6 L1357.2 803.8 L1358.5 803.2 L1359.8 803.4 L1361.1 803.3 L1362.4 803.8 L1363.7 803.2 L1365.0 803.1 L1366.3 803.1 L1367.6 803.4 L1368.9 803.7 L1370.3 803.7 L1371.6 803.6 L1372.9 803.8 L1374.2 803.7 L1375.5 803.3 L1376.8 803.2 L1378.1 803.7 L1379.4 803.6 L1380.7 803.1 L1382.0 803.5 L1383.3 803.3 L1384.6 803.3 L1385.9 803.3 L1387.2 803.2 L1388.5 803.0 L1389.8 803.2 L1391.1 803.3 L1392.4 803.7 L1393.7 803.1 L1395.0 803.7 L1396.3 803.2 L1397.6 803.3 L1398.9 803.6 L1400.2 803.6 L1401.5 803.3 L1402.8 803.0 L1404.1 803.3 L1405.4 803.3 L1406.7 803.6 L1408.0 803.1 L1409.3 803.2 L1410.6 803.6 L1411.9 803.0 L1413.2 803.3 L1414.5 803.5 L1415.8 803.5 L1417.1 803.0 L1418.5 803.0 L1419.8 803.0 L1421.1 803.6 L1422.4 803.1 L1423.7 803.5 L1425.0 803.6 L1426.3 803.2 L1427.6 803.1 L1428.9 803.6 L1430.2 803.4 L1431.5 803.1 L1432.8 803.4 L1434.1 803.1 L1435.4 803.1 L1436.7 802.9 L1438.0 803.4 L1439.3 803.5 L1440.6 803.3 L1441.9 803.6 L1443.2 802.9 L1444.5 803.1 L1445.8 803.2 L1447.1 803.6 L1448.4 803.5 L1449.7 803.1 L1451.0 803.1 L1452.3 803.2 L1453.6 803.2 L1454.9 803.5 L1456.2 803.0 L1457.5 803.4 L1458.8 803.4 L1460.1 803.4 L1461.4 803.4 L1462.7 803.3 L1464.0 803.1 L1465.4 803.1 L1466.7 803.1 L1468.0 803.4 L1469.3 802.9 L1470.6 803.0 L1471.9 803.3 L1473.2 803.0 L1474.5 802.9 L1475.8 802.8 L1477.1 803.2 L1478.4 803.0 L1479.7 803.5 L1481.0 803.4 L1482.3 803.5 L1483.6 803.0 L1484.9 802.8 L1486.2 802.9 L1487.5 803.1 L1488.8 803.3 L1490.1 803.1 L1491.4 802.9 L1492.7 803.1 L1494.0 803.2 L1495.3 803.2 L1496.6 803.3 L1497.9 803.3 L1499.2 803.2 L1500.5 802.8 L1501.8 803.3 L1503.1 802.9 L1504.4 803.1 L1505.7 803.0 L1507.0 803.2 L1508.3 802.9 L1509.6 802.9 L1510.9 802.9 L1512.2 802.8 L1513.6 803.3 L1514.9 803.1 L1516.2 802.9 L1517.5 803.0 L1518.8 803.4 L1520.1 803.0 L1521.4 802.9 L1522.7 803.3 L1524.0 803.1 L1525.3 803.4 L1526.6 802.7 L1527.9 803.0 L1529.2 803.2 L1530.5 803.3 L1531.8 803.3 L1533.1 802.7 L1534.4 802.9 L1535.7 802.7 L1537.0 803.0 L1538.3 802.8 L1539.6 803.3 L1541.0 803.0 L1542.3 803.2 L1543.6 802.8 L1544.9 803.2 L1546.2 802.9 L1547.5 802.7 L1548.9 803.1 L1550.2 803.2 L1551.5 802.5 L1552.8 802.9 L1554.1 802.9 L1555.4 802.6 L1556.8 802.7 L1558.1 802.5 L1559.4 802.5 L1560.7 802.5 L1562.0 802.8 L1563.3 802.8 L1564.7 802.5 L1566.0 802.3 L1567.3 802.5 L1568.6 802.7 L1569.9 802.4 L1571.3 802.5 L1572.6 802.4 L1573.9 802.8 L1575.2 802.6 L1576.5 802.2 L1577.8 802.2 L1579.2 802.4 L1580.5 802.5 L1581.8 802.6 L1583.1 802.2 L1584.4 802.2 L1585.7 802.6 L1587.1 802.3 L1588.4 802.2 L1589.7 802.2 L1591.0 802.7 L1592.3 802.2 L1593.7 802.4 L1595.0 802.2 L1596.3 802.2 L1597.6 802.5 L1598.9 802.6 L1600.2 802.1 L1601.6 802.0 L1602.9 802.4 L1604.2 802.0 L1605.5 801.8 L1606.8 802.4 L1608.1 802.1 L1609.5 802.4 L1610.8 802.0 L1612.1 802.4 L1613.4 802.1 L1614.7 801.8 L1616.0 801.7 L1617.4 802.1 L1618.7 802.1 L1620.0 802.0 L1621.3 802.3 L1622.6 801.7 L1623.9 802.0 L1625.2 801.8 L1626.5 801.9 L1627.8 801.6 L1629.1 801.7 L1630.4 801.9 L1631.7 802.2 L1633.0 801.5 L1634.3 801.8 L1635.6 802.0 L1636.9 802.1 L1638.2 801.5 L1639.5 801.5 L1640.8 802.0 L1642.1 802.1 L1643.4 801.7 L1644.7 801.4 L1646.0 802.0 L1647.3 801.6 L1648.6 801.9 L1649.9 801.7 L1651.2 801.8 L1652.5 801.3 L1653.8 801.8 L1655.2 801.3 L1656.5 801.5 L1657.8 801.8 L1659.1 801.7 L1660.4 801.2 L1661.7 801.3 L1663.0 801.4 L1664.3 801.4 L1665.6 801.3 L1666.9 801.1 L1668.2 801.2 L1669.5 801.5 L1670.8 801.6 L1672.1 801.0 L1673.4 801.3 L1674.7 801.5 L1676.0 800.9 L1677.3 801.5 L1678.6 801.0 L1679.9 801.3 L1681.2 801.2 L1682.5 801.3 L1683.8 801.0 L1685.1 801.1 L1686.4 801.2 L1687.7 801.1 L1689.0 801.1 L1690.8 799.7 L1692.1 799.8 L1693.4 799.7 L1694.7 799.7 L1696.0 799.3 L1697.3 799.8 L1698.6 799.7 L1700.0 799.5 L1701.3 799.9 L1702.6 799.9 L1703.9 799.7 L1705.2 799.5 L1706.5 799.7 L1707.8 799.4 L1709.1 799.4 L1710.4 799.6 L1711.7 799.4 L1713.0 799.7 L1714.3 799.7 L1715.6 799.4 L1716.9 799.8 L1718.2 799.4 L1719.6 799.9 L1720.9 799.9 L1722.2 799.7 L1723.5 799.4 L1724.8 799.7 L1726.1 799.6 L1727.4 800.0 L1728.7 799.4 L1730.0 800.0 L1731.3 800.1 L1732.6 799.9 L1733.9 799.9 L1735.2 799.5 L1736.5 800.1 L1737.9 799.7 L1739.2 800.0 L1740.5 800.0 L1741.8 799.4 L1743.1 799.9 L1744.4 800.0 L1745.7 799.4 L1747.0 799.6 L1748.3 799.9 L1749.6 799.4 L1750.9 800.0 L1752.2 799.5 L1753.5 799.9 L1754.8 799.4 L1756.2 799.7 L1757.5 800.0 L1758.8 799.5 L1760.1 799.5 L1761.4 799.7 L1762.7 799.6 L1764.0 799.7 L1765.5 798.7 L1767.0 798.1 L1768.6 797.5 L1770.1 797.4 L1771.6 796.4 L1772.9 796.6 L1774.3 796.8 L1775.6 796.3 L1777.0 796.8 L1778.3 796.3 L1779.7 796.7 L1781.0 796.9 L1782.4 796.7 L1783.8 797.1 L1785.1 796.9 L1786.5 797.0 L1787.8 797.0 L1789.1 797.2 L1790.5 796.5 L1791.8 797.1 L1793.1 796.7 L1794.5 796.4 L1795.8 796.6 L1797.1 796.1 L1798.5 796.6 L1799.8 796.1 L1801.1 795.8 L1802.5 796.1 L1803.8 795.7 L1805.1 795.4 L1806.5 795.7 L1807.8 795.1 L1809.1 795.6 L1810.5 795.0 L1811.8 795.2 L1813.1 795.4 L1814.5 795.0 L1815.8 794.8 L1817.2 796.0 L1818.6 796.8 L1820.0 798.0 L1821.3 797.4 L1822.7 797.3 L1824.0 797.2 L1825.4 797.4 L1826.8 797.1 L1828.1 797.0 L1829.5 797.2 L1830.8 796.4 L1832.1 796.3 L1833.5 796.5 L1834.8 795.8 L1836.2 795.6 L1837.5 795.8 L1838.9 795.4 L1840.2 795.4 L1841.6 795.4 L1843.0 795.4 L1844.3 795.9 L1845.7 796.2 L1847.1 796.1 L1848.5 796.7 L1849.8 796.8 L1851.2 796.8 L1852.6 797.6 L1854.0 797.3 L1855.3 797.5 L1856.7 798.0 L1858.0 797.7 L1859.4 798.1 L1860.7 798.3 L1862.0 798.2 L1863.4 797.9 L1864.7 797.8 L1866.0 797.6 L1867.4 798.1 L1868.7 798.0 L1870.1 797.9 L1871.4 798.1 L1872.7 798.0 L1874.1 798.3 L1875.4 798.2 L1876.7 797.8 L1878.1 798.3 L1879.4 798.0 L1880.7 797.6 L1882.0 797.9 L1883.4 797.7 L1884.7 797.5 L1886.0 797.3 L1887.3 797.8 L1888.7 797.2 L1890.0 797.5 L1891.3 797.8 L1892.6 797.1 L1893.9 797.1 L1895.3 797.3 L1896.6 797.2 L1897.9 797.2 L1899.2 797.3 L1900.5 796.7 L1901.9 796.8 L1903.2 796.7 L1904.5 796.5 L1905.8 797.1 L1907.2 796.9 L1908.5 796.8 L1909.8 796.2 L1911.1 796.8 L1912.4 796.6 L1913.8 796.4 L1915.1 796.5 L1916.4 796.2 L1917.7 796.0 L1919.0 795.8 L1920.4 795.9 L1921.7 795.6 L1923.0 795.8 L1924.3 796.1 L1925.7 796.0 L1927.0 796.0 L1928.3 795.7 L1929.6 795.9 L1930.9 795.6 L1932.2 795.8 L1933.5 795.7 L1934.8 796.1 L1936.1 795.9 L1937.4 795.7 L1938.7 796.0 L1940.0 796.3 L1941.3 795.7 L1942.6 796.3 L1943.9 795.6 L1945.2 795.8 L1946.5 795.8 L1947.8 796.3 L1949.1 796.5 L1950.4 796.3 L1951.7 796.0 L1953.0 796.5 L1954.3 796.1 L1955.6 796.0 L1956.9 796.6 L1958.2 796.4 L1959.5 796.5 L1960.8 796.5 L1962.1 796.7 L1963.4 796.4 L1964.7 796.7 L1966.0 796.6 L1967.3 796.7 L1968.6 796.4 L1969.9 796.5 L1971.3 795.7 L1972.7 794.6 L1974.1 793.4 L1975.4 792.4 L1976.8 791.8 L1978.2 790.7 L1979.6 790.6 L1981.0 791.6 L1982.4 791.2 L1983.8 791.4 L1985.2 791.8 L1986.6 792.4 L1988.0 792.2 L1989.5 791.1 L1990.9 790.3 L1992.3 789.6 L1993.7 789.0 L1995.2 789.0 L1996.6 788.2 L1998.0 787.4 L1999.4 786.5 L2000.8 785.5 L2002.1 783.9 L2003.5 783.5 L2004.9 782.4 L2006.2 780.9 L2007.5 780.1 L2008.9 778.7 L2010.2 777.5 L2011.5 775.7 L2013.2 776.0 L2014.8 777.8 L2016.5 778.2 L2018.1 776.6 L2019.7 774.6 L2021.3 771.5 L2022.9 769.9 L2024.2 773.3 L2025.6 777.0 L2026.9 780.7 L2028.2 784.9 L2029.5 784.7 L2030.8 784.1 L2032.1 783.4 L2033.4 783.1 L2034.7 782.4 L2036.0 781.5 L2037.3 780.7 L2038.7 780.2 L2040.0 780.4 L2041.3 779.2 L2042.6 778.8 L2043.9 778.4 L2045.2 777.4 L2046.5 777.4 L2048.2 779.2 L2049.8 781.5 L2051.3 781.3 L2052.7 781.7 L2054.2 781.3 L2055.6 781.3 L2057.1 781.9 L2058.5 781.4 L2060.0 781.4 L2061.4 781.3 L2062.8 780.7 L2064.2 779.6 L2065.6 779.6 L2067.0 779.2 L2068.4 779.1 L2069.8 778.4 L2071.3 778.1 L2072.7 778.3 L2074.2 778.0 L2075.7 777.5 L2077.1 778.1 L2078.6 777.5 L2080.0 777.2 L2081.4 778.2 L2082.7 777.7 L2084.1 777.7 L2085.5 778.4 L2086.9 777.7 L2088.2 778.0 L2089.6 778.0 L2091.0 776.5 L2092.3 776.8 L2093.7 776.4 L2095.1 776.4 L2096.4 775.4 L2097.8 775.5 L2099.2 775.0 L2100.5 775.2 L2101.9 774.2 L2103.3 774.7 L2104.6 773.6 L2106.0 773.5 L2107.4 774.6 L2108.8 776.5 L2110.1 777.6 L2111.5 778.6 L2112.9 780.4 L2114.2 781.5 L2115.5 781.9 L2116.8 783.3 L2118.2 783.2 L2119.5 782.8 L2120.8 782.5 L2122.2 782.0 L2123.6 781.3 L2124.9 781.0 L2126.2 780.7 L2127.6 780.4 L2129.1 782.8 L2130.5 784.3 L2131.8 783.8 L2133.1 784.4 L2134.4 783.4 L2135.7 783.5 L2137.0 783.4 L2138.3 783.9 L2139.6 783.4 L2141.0 783.1 L2142.3 783.5 L2143.6 782.7 L2144.9 782.8 L2146.2 782.7 L2147.5 782.8 L2148.8 782.7 L2150.1 782.3 L2151.5 782.8 L2152.8 782.9 L2154.2 783.3 L2155.6 783.6 L2156.9 784.6 L2158.3 784.9 L2159.7 785.3 L2161.1 785.2 L2162.4 785.8 L2163.8 786.3 L2165.2 786.4 L2166.5 786.0 L2167.9 785.3 L2169.3 785.5 L2170.7 785.7 L2172.0 784.8 L2173.4 784.6 L2174.8 784.5 L2176.1 784.7 L2177.5 784.3 L2178.9 784.7 L2180.2 784.1 L2181.6 784.2 L2182.9 784.4 L2184.3 784.5 L2185.6 784.8 L2187.0 784.5 L2188.3 784.7 L2189.7 784.7 L2191.0 785.5 L2192.4 785.4 L2193.7 784.8 L2195.1 785.3 L2196.4 782.2 L2197.7 777.7 L2199.0 774.5 L2200.5 773.1 L2201.9 772.6 L2203.4 771.2 L2204.9 769.6 L2206.4 769.9 L2207.9 769.5 L2209.3 769.2 L2210.8 769.6 L2212.2 767.7 L2213.5 765.0 L2214.8 763.1 L2216.2 761.4 L2217.7 764.9 L2219.2 768.6 L2220.5 767.0 L2221.8 766.4 L2223.1 765.8 L2224.4 764.4 L2225.9 761.8 L2227.5 758.8 L2229.1 756.1 L2230.6 753.1 L2232.0 755.8 L2233.3 758.1 L2234.7 761.4 L2236.4 755.7 L2238.1 749.6 L2239.8 743.9 L2241.4 748.4 L2242.9 752.1 L2244.3 753.7 L2245.6 754.1 L2247.0 755.3 L2248.4 756.6 L2249.7 757.2 L2251.1 758.3 L2253.2 765.5 L2254.6 762.7 L2255.9 761.0 L2257.3 758.3 L2259.0 758.8 L2260.7 758.7 L2262.4 758.3 L2263.8 760.3 L2265.1 762.2 L2266.5 763.4 L2268.2 761.9 L2270.0 760.2 L2271.7 758.3 L2273.1 752.1 L2274.4 745.7 L2275.8 739.8 L2277.2 734.5 L2278.5 728.0 L2279.9 723.3 L2281.4 719.0 L2283.0 715.7 L2284.6 711.5 L2286.1 706.9 L2287.6 688.7 L2289.1 669.9 L2290.5 673.3 L2291.8 677.9 L2293.2 682.2 L2294.6 674.2 L2296.0 666.8 L2297.4 658.6 L2298.8 665.5 L2300.1 673.5 L2301.5 680.2 L2303.1 695.6 L2304.6 708.9 L2306.0 709.6 L2307.3 712.0 L2308.7 713.1 L2310.4 702.1 L2312.1 689.5 L2313.8 678.1 L2315.2 664.7 L2316.5 652.9 L2317.9 638.0 L2319.4 646.3 L2321.0 657.6 L2322.6 665.4 L2324.1 673.0 L2325.5 659.4 L2326.9 648.7 L2328.4 636.7 L2329.8 622.6 L2332.3 657.6 L2333.9 660.7 L2335.4 663.7 L2336.9 670.8 L2338.5 680.3 L2340.1 688.5 L2341.6 696.6 L2343.0 697.8 L2344.3 698.0 L2345.7 698.7 L2347.1 701.8 L2348.4 704.9 L2349.8 706.9 L2351.3 701.8 L2352.9 696.4 L2354.4 692.6 L2355.9 686.3 L2357.4 684.3 L2359.0 684.2 L2360.6 682.2 L2362.1 681.2 L2363.5 688.4 L2364.8 693.3 L2366.2 700.7 L2368.3 703.8" fill="none" stroke="#3d1fd3" stroke-width="1.85" stroke-linejoin="round"/><path d="M1345.5 803.5 L1346.8 803.8 L1348.1 803.4 L1349.4 803.2 L1350.7 803.3 L1352.0 803.4 L1353.3 803.1 L1354.6 803.4 L1355.9 803.4 L1357.2 803.6 L1358.5 803.4 L1359.8 803.3 L1361.1 803.3 L1362.4 803.6 L1363.7 803.8 L1365.0 803.5 L1366.3 803.3 L1367.6 803.7 L1368.9 803.4 L1370.3 803.2 L1371.6 803.2 L1372.9 803.6 L1374.2 803.6 L1375.5 803.5 L1376.8 803.4 L1378.1 803.5 L1379.4 803.2 L1380.7 803.7 L1382.0 803.3 L1383.3 803.5 L1384.6 803.6 L1385.9 803.6 L1387.2 803.4 L1388.5 803.2 L1389.8 803.4 L1391.1 803.1 L1392.4 803.6 L1393.7 803.3 L1395.0 803.6 L1396.3 803.2 L1397.6 803.3 L1398.9 803.2 L1400.2 803.3 L1401.5 803.1 L1402.8 803.0 L1404.1 803.5 L1405.4 803.2 L1406.7 803.2 L1408.0 803.2 L1409.3 803.3 L1410.6 803.3 L1411.9 803.4 L1413.2 803.4 L1414.5 803.2 L1415.8 803.6 L1417.1 803.6 L1418.5 803.0 L1419.8 803.5 L1421.1 803.6 L1422.4 803.5 L1423.7 803.0 L1425.0 803.5 L1426.3 803.4 L1427.6 802.9 L1428.9 802.9 L1430.2 803.6 L1431.5 803.4 L1432.8 803.1 L1434.1 803.0 L1435.4 803.0 L1436.7 803.1 L1438.0 803.5 L1439.3 803.1 L1440.6 803.0 L1441.9 803.5 L1443.2 803.4 L1444.5 803.0 L1445.8 803.5 L1447.1 803.3 L1448.4 803.4 L1449.7 803.3 L1451.0 803.5 L1452.3 803.4 L1453.6 803.5 L1454.9 803.0 L1456.2 803.3 L1457.5 803.2 L1458.8 803.4 L1460.1 803.2 L1461.4 803.5 L1462.7 803.2 L1464.0 803.0 L1465.4 803.0 L1466.7 802.9 L1468.0 803.2 L1469.3 802.9 L1470.6 803.2 L1471.9 802.9 L1473.2 803.2 L1474.5 803.2 L1475.8 803.2 L1477.1 803.4 L1478.4 802.8 L1479.7 803.4 L1481.0 803.1 L1482.3 803.2 L1483.6 803.3 L1484.9 803.4 L1486.2 803.0 L1487.5 803.1 L1488.8 803.4 L1490.1 802.8 L1491.4 803.2 L1492.7 803.2 L1494.0 802.8 L1495.3 803.2 L1496.6 803.2 L1497.9 803.4 L1499.2 803.0 L1500.5 803.4 L1501.8 803.1 L1503.1 803.1 L1504.4 803.4 L1505.7 802.8 L1507.0 803.2 L1508.3 803.2 L1509.6 803.0 L1510.9 803.3 L1512.2 803.0 L1513.6 803.0 L1514.9 803.1 L1516.2 803.2 L1517.5 802.8 L1518.8 803.0 L1520.1 803.0 L1521.4 803.1 L1522.7 803.3 L1524.0 802.9 L1525.3 803.3 L1526.6 803.0 L1527.9 803.0 L1529.2 802.9 L1530.5 803.0 L1531.8 803.3 L1533.1 803.1 L1534.4 803.2 L1535.7 802.9 L1537.0 803.0 L1538.3 802.9 L1539.6 802.8 L1540.9 803.0 L1542.2 803.0 L1543.5 803.1 L1544.9 802.6 L1546.2 803.0 L1547.5 803.1 L1548.8 802.9 L1550.1 802.5 L1551.4 802.7 L1552.7 802.5 L1554.0 802.6 L1555.3 803.1 L1556.6 802.8 L1557.9 802.9 L1559.2 802.9 L1560.6 803.0 L1561.9 802.8 L1563.2 802.8 L1564.5 802.8 L1565.8 802.8 L1567.1 802.7 L1568.4 802.7 L1569.7 802.4 L1571.0 802.7 L1572.3 802.5 L1573.6 802.7 L1574.9 802.3 L1576.3 802.3 L1577.6 802.2 L1578.9 802.7 L1580.2 802.8 L1581.5 802.6 L1582.8 802.3 L1584.1 802.7 L1585.4 802.6 L1586.7 802.4 L1588.0 802.2 L1589.3 802.2 L1590.6 802.3 L1592.0 802.2 L1593.3 802.3 L1594.6 802.4 L1595.9 802.6 L1597.2 801.9 L1598.5 802.3 L1599.8 801.9 L1601.1 801.9 L1602.4 802.4 L1603.7 802.2 L1605.0 802.5 L1606.4 802.1 L1607.7 801.8 L1609.0 802.0 L1610.3 802.2 L1611.6 802.4 L1612.9 802.4 L1614.2 802.0 L1615.5 802.0 L1616.8 801.7 L1618.1 802.1 L1619.4 801.8 L1620.7 801.7 L1622.1 801.6 L1623.4 801.6 L1624.7 802.1 L1626.0 801.6 L1627.3 802.2 L1628.6 801.6 L1629.9 802.1 L1631.2 801.6 L1632.5 801.5 L1633.8 802.0 L1635.1 801.6 L1636.4 802.0 L1637.8 801.5 L1639.1 801.4 L1640.4 801.9 L1641.7 801.9 L1643.0 802.0 L1644.3 801.9 L1645.6 801.4 L1646.9 801.8 L1648.2 801.8 L1649.5 801.6 L1650.8 801.9 L1652.1 801.4 L1653.5 801.9 L1654.8 801.7 L1656.1 801.2 L1657.4 801.2 L1658.7 801.6 L1660.0 801.5 L1661.3 801.7 L1662.7 801.1 L1664.0 801.2 L1665.3 801.5 L1666.7 801.0 L1668.0 801.5 L1669.3 801.2 L1670.7 800.8 L1672.0 801.0 L1673.3 801.1 L1674.7 800.9 L1676.0 801.1 L1677.3 800.6 L1678.7 801.1 L1680.0 800.7 L1681.3 800.8 L1682.7 800.8 L1684.0 800.6 L1685.3 800.5 L1686.7 800.8 L1688.0 800.5 L1689.4 799.9 L1690.8 798.6 L1692.1 798.8 L1693.4 798.7 L1694.7 798.5 L1696.0 798.4 L1697.3 799.1 L1698.6 798.9 L1700.0 799.1 L1701.3 798.7 L1702.6 798.9 L1703.9 799.3 L1705.2 799.2 L1706.5 799.0 L1707.8 798.8 L1709.1 798.9 L1710.4 799.3 L1711.7 799.0 L1713.0 799.2 L1714.3 799.2 L1715.6 799.4 L1716.9 799.4 L1718.2 799.0 L1719.6 798.8 L1720.9 799.1 L1722.2 799.2 L1723.5 799.4 L1724.8 799.6 L1726.1 799.7 L1727.4 799.1 L1728.7 799.7 L1730.0 799.7 L1731.3 799.8 L1732.6 799.6 L1733.9 799.4 L1735.2 799.8 L1736.5 799.8 L1737.9 799.8 L1739.2 800.0 L1740.5 799.6 L1741.8 799.4 L1743.1 799.8 L1744.4 800.0 L1745.7 799.6 L1747.0 800.0 L1748.3 800.2 L1749.6 799.7 L1750.9 800.0 L1752.2 800.1 L1753.5 799.9 L1754.8 799.8 L1756.2 799.8 L1757.5 800.2 L1758.8 800.3 L1760.1 800.1 L1761.4 799.8 L1762.7 800.4 L1764.0 800.2 L1765.4 800.3 L1766.8 799.8 L1768.2 799.9 L1769.5 800.0 L1770.9 799.9 L1772.3 799.5 L1773.7 799.4 L1775.1 799.4 L1776.5 798.9 L1777.9 798.8 L1779.2 798.7 L1780.6 799.0 L1782.0 798.6 L1783.4 798.6 L1784.7 798.7 L1786.1 798.6 L1787.4 798.7 L1788.7 798.4 L1790.1 798.3 L1791.4 799.1 L1792.7 798.6 L1794.0 798.5 L1795.4 798.9 L1796.7 799.0 L1798.0 798.5 L1799.4 798.9 L1800.7 798.7 L1802.0 798.9 L1803.4 798.5 L1804.7 798.6 L1806.0 799.3 L1807.4 799.2 L1808.7 799.0 L1810.0 799.0 L1811.3 798.8 L1812.7 799.2 L1814.0 799.0 L1815.3 799.4 L1816.7 799.3 L1818.0 799.1 L1819.3 799.3 L1820.6 799.3 L1821.9 798.7 L1823.2 798.5 L1824.5 798.5 L1825.8 798.4 L1827.1 798.3 L1828.4 798.2 L1829.7 798.5 L1831.0 798.7 L1832.3 798.3 L1833.7 798.6 L1835.0 798.5 L1836.3 797.8 L1837.6 798.1 L1838.9 797.9 L1840.2 797.6 L1841.5 798.2 L1842.8 797.6 L1844.1 797.8 L1845.4 797.7 L1846.7 797.9 L1848.0 797.5 L1849.4 797.9 L1850.8 797.9 L1852.2 798.1 L1853.6 798.2 L1855.0 799.0 L1856.4 799.2 L1857.8 799.1 L1859.1 798.7 L1860.4 798.4 L1861.8 798.4 L1863.1 798.3 L1864.4 798.5 L1865.7 798.3 L1867.1 798.1 L1868.4 797.3 L1869.7 797.5 L1871.2 797.5 L1872.6 797.2 L1874.1 796.8 L1875.6 796.9 L1877.1 795.9 L1878.5 795.7 L1880.0 795.7 L1881.4 794.5 L1882.8 793.3 L1884.2 791.5 L1885.6 792.8 L1886.9 793.6 L1888.3 794.9 L1889.7 794.8 L1891.0 794.8 L1892.4 794.1 L1893.8 794.2 L1895.2 794.0 L1896.5 793.7 L1897.9 793.9 L1899.3 793.4 L1900.6 793.4 L1902.0 793.1 L1903.4 793.4 L1904.7 792.7 L1906.1 793.2 L1907.5 792.6 L1908.9 792.3 L1910.2 792.9 L1911.6 792.4 L1914.1 789.0 L1915.4 788.3 L1916.8 788.6 L1918.1 788.1 L1919.5 787.7 L1920.8 786.6 L1922.1 786.5 L1923.5 785.7 L1924.8 786.1 L1926.2 785.6 L1927.5 784.9 L1929.2 788.3 L1930.8 791.5 L1932.1 791.8 L1933.5 792.0 L1934.8 792.7 L1936.2 792.7 L1937.5 793.2 L1938.9 793.1 L1940.2 793.5 L1941.6 794.0 L1943.0 793.4 L1944.3 793.7 L1945.7 793.4 L1947.1 792.8 L1948.4 793.2 L1949.8 792.4 L1951.1 792.3 L1952.5 791.9 L1953.9 791.8 L1955.2 792.0 L1956.6 791.5 L1957.9 790.9 L1959.3 790.2 L1960.6 790.0 L1962.0 789.3 L1963.3 789.0 L1964.7 789.5 L1966.0 788.8 L1967.4 789.7 L1968.7 788.9 L1970.1 789.8 L1971.4 789.6 L1972.8 789.3 L1974.1 789.6 L1975.5 789.5 L1976.8 789.6 L1978.2 789.9 L1979.5 789.2 L1980.8 788.9 L1982.1 789.1 L1983.5 788.7 L1984.8 788.2 L1986.1 787.0 L1987.4 786.7 L1988.7 786.9 L1990.0 785.7 L1991.3 785.9 L1992.7 785.1 L1994.0 785.3 L1995.3 783.9 L1996.6 784.0 L1998.2 787.4 L1999.6 786.7 L2001.1 785.3 L2002.5 784.2 L2003.9 783.1 L2005.3 783.0 L2006.8 781.7 L2008.2 780.7 L2009.5 781.5 L2010.9 783.0 L2012.2 784.6 L2013.6 785.1 L2014.9 786.5 L2016.6 784.9 L2018.2 782.8 L2019.9 781.5 L2021.4 774.9 L2022.9 769.1 L2024.4 770.8 L2025.8 772.2 L2027.3 773.0 L2028.8 774.3 L2030.3 775.7 L2031.7 777.7 L2033.2 779.0 L2034.6 778.5 L2036.1 777.8 L2037.5 777.3 L2038.9 777.2 L2040.3 776.9 L2041.8 776.5 L2043.2 775.7 L2044.5 774.6 L2045.8 773.0 L2047.2 771.7 L2048.5 771.3 L2049.8 769.9 L2051.2 770.8 L2052.6 772.1 L2054.0 772.3 L2055.4 774.1 L2056.8 774.5 L2058.2 775.7 L2059.6 774.6 L2061.1 773.1 L2062.5 771.1 L2063.9 769.6 L2065.2 769.5 L2066.5 771.1 L2067.9 771.1 L2069.2 772.0 L2070.5 771.8 L2071.8 772.6 L2073.4 772.2 L2074.9 773.0 L2076.5 772.4 L2078.0 772.2 L2079.6 772.6 L2080.9 772.3 L2082.2 772.4 L2083.5 771.5 L2084.8 772.0 L2086.1 771.7 L2087.4 771.6 L2088.9 769.9 L2090.4 767.7 L2091.8 766.7 L2093.3 764.7 L2094.8 765.6 L2096.2 766.2 L2097.7 766.0 L2099.2 766.7 L2100.8 765.0 L2102.5 762.6 L2104.1 760.8 L2105.6 762.9 L2107.0 763.7 L2108.4 766.5 L2109.9 767.7 L2111.2 770.0 L2112.5 771.3 L2113.9 773.1 L2115.2 774.9 L2116.5 776.7 L2117.8 778.4 L2119.2 776.7 L2120.5 776.6 L2121.9 774.6 L2123.2 773.4 L2124.6 772.6 L2125.9 773.1 L2127.2 774.2 L2128.5 775.5 L2130.0 769.7 L2131.4 762.5 L2132.9 756.9 L2134.4 761.3 L2135.9 767.0 L2137.4 771.6 L2138.7 772.0 L2140.1 772.5 L2141.4 773.9 L2142.8 774.6 L2144.1 775.3 L2145.4 776.3 L2146.8 776.3 L2148.1 777.5 L2149.5 777.2 L2150.8 776.4 L2152.2 774.9 L2153.6 774.3 L2154.9 774.0 L2156.3 773.4 L2157.7 772.4 L2159.1 771.5 L2160.4 771.2 L2161.8 770.6 L2163.4 766.5 L2165.1 763.5 L2166.7 759.8 L2168.0 761.0 L2169.4 760.8 L2170.8 762.1 L2172.1 763.1 L2173.4 763.0 L2174.8 764.7 L2176.2 765.5 L2177.5 765.7 L2178.8 763.9 L2180.1 762.3 L2181.4 761.3 L2182.7 759.2 L2184.1 757.4 L2185.4 756.5 L2186.7 754.7 L2188.0 752.4 L2189.3 751.0 L2190.7 750.6 L2192.1 750.7 L2193.5 750.9 L2194.8 751.7 L2196.2 751.5 L2197.6 751.6 L2199.0 751.0 L2200.8 740.8 L2202.6 729.5 L2204.9 740.2 L2206.4 734.2 L2207.9 726.1 L2209.3 720.4 L2210.8 713.8 L2212.4 700.6 L2214.0 686.3 L2215.6 670.1 L2217.2 656.5 L2218.6 677.4 L2219.9 698.7 L2221.7 688.7 L2223.4 678.1 L2226.0 725.4 L2228.5 712.0 L2230.1 715.6 L2231.6 719.8 L2233.1 722.7 L2234.7 727.4 L2236.4 715.3 L2238.1 703.5 L2239.8 691.5 L2241.2 697.6 L2242.5 705.9 L2244.2 695.8 L2246.0 687.4 L2247.6 698.8 L2249.1 707.9 L2251.1 700.7 L2252.5 705.5 L2253.8 709.9 L2255.2 713.1 L2256.6 710.3 L2257.9 707.6 L2259.3 703.8 L2260.7 705.1 L2262.2 705.5 L2263.6 704.0 L2265.1 705.8 L2266.5 705.9 L2268.2 699.5 L2270.0 694.7 L2271.7 688.4 L2273.1 684.7 L2274.4 682.3 L2275.8 679.1 L2277.3 674.4 L2278.9 667.6 L2280.4 660.7 L2281.9 655.5 L2283.6 663.8 L2285.4 671.8 L2287.1 680.2 L2288.6 676.8 L2290.2 670.9 L2291.6 666.5 L2292.9 662.8 L2294.3 659.6 L2295.7 660.7 L2297.0 659.9 L2298.4 661.7 L2300.4 656.5 L2301.8 668.1 L2303.2 680.3 L2304.6 690.4 L2306.0 692.5 L2307.3 694.0 L2308.7 696.6 L2310.1 693.8 L2311.4 691.2 L2312.8 688.4 L2314.5 680.6 L2316.2 673.6 L2317.9 667.8 L2319.3 672.9 L2320.6 679.6 L2322.0 686.3 L2323.4 693.3 L2324.7 700.2 L2326.1 707.9 L2327.7 700.9 L2329.2 694.0 L2330.8 688.7 L2332.3 682.2 L2334.0 684.1 L2335.7 684.6 L2337.4 685.3 L2338.9 687.0 L2340.5 688.8 L2342.1 689.2 L2343.6 691.5 L2345.0 688.4 L2346.3 684.2 L2347.7 680.8 L2349.1 677.4 L2350.4 673.4 L2351.8 669.9 L2353.2 671.8 L2354.5 674.0 L2355.9 677.1 L2357.4 674.3 L2359.0 673.0 L2360.6 670.6 L2362.1 668.9 L2363.8 673.9 L2365.5 677.1 L2367.2 683.2 L2368.3 681.2" fill="none" stroke="#52d926" stroke-width="1.85" stroke-linejoin="round"/><path d="M1345.5 803.5 L1346.8 803.4 L1348.1 803.7 L1349.4 803.3 L1350.7 803.5 L1352.0 803.5 L1353.4 803.3 L1354.7 803.8 L1356.0 803.3 L1357.3 803.6 L1358.6 803.2 L1359.9 803.1 L1361.2 803.7 L1362.5 803.4 L1363.8 803.1 L1365.1 803.3 L1366.4 803.4 L1367.8 803.6 L1369.1 803.1 L1370.4 803.2 L1371.7 803.7 L1373.0 803.6 L1374.3 803.1 L1375.6 803.3 L1376.9 803.3 L1378.2 803.5 L1379.5 803.4 L1380.9 803.6 L1382.2 803.6 L1383.5 803.4 L1384.8 803.5 L1386.1 803.5 L1387.4 803.5 L1388.7 803.3 L1390.0 803.5 L1391.3 803.5 L1392.6 803.6 L1393.9 803.1 L1395.3 803.6 L1396.6 803.0 L1397.9 803.5 L1399.2 803.4 L1400.5 803.3 L1401.8 803.6 L1403.1 803.3 L1404.4 803.2 L1405.7 803.5 L1407.0 803.5 L1408.3 803.3 L1409.7 803.2 L1411.0 803.2 L1412.3 803.2 L1413.6 803.4 L1414.9 803.1 L1416.2 803.1 L1417.5 803.3 L1418.8 803.1 L1420.1 803.1 L1421.4 803.4 L1422.8 803.4 L1424.1 803.2 L1425.4 803.2 L1426.7 803.0 L1428.0 803.0 L1429.3 802.9 L1430.6 803.2 L1431.9 803.2 L1433.2 802.9 L1434.5 803.4 L1435.8 803.0 L1437.2 803.4 L1438.5 803.4 L1439.8 803.5 L1441.1 802.9 L1442.4 803.1 L1443.7 803.4 L1445.0 802.8 L1446.3 802.8 L1447.6 803.1 L1448.9 803.1 L1450.2 803.4 L1451.6 803.3 L1452.9 803.1 L1454.2 803.4 L1455.5 803.1 L1456.8 803.1 L1458.1 803.2 L1459.4 803.0 L1460.7 803.0 L1462.0 803.1 L1463.3 802.9 L1464.6 803.4 L1466.0 803.2 L1467.3 803.0 L1468.6 802.7 L1469.9 802.9 L1471.2 802.9 L1472.5 803.0 L1473.8 803.1 L1475.1 803.3 L1476.4 803.3 L1477.7 803.0 L1479.1 802.9 L1480.4 803.1 L1481.7 803.3 L1483.0 802.9 L1484.3 803.0 L1485.6 803.2 L1486.9 802.7 L1488.2 802.8 L1489.5 803.3 L1490.8 803.2 L1492.1 802.9 L1493.5 802.7 L1494.8 803.2 L1496.1 803.0 L1497.4 803.1 L1498.7 803.2 L1500.0 802.9 L1501.3 803.2 L1502.6 802.8 L1504.0 802.6 L1505.3 802.7 L1506.6 802.9 L1507.9 802.9 L1509.2 802.7 L1510.6 802.6 L1511.9 803.0 L1513.2 802.9 L1514.5 802.8 L1515.9 803.2 L1517.2 802.9 L1518.5 802.5 L1519.8 802.8 L1521.1 803.0 L1522.5 802.7 L1523.8 803.0 L1525.1 802.5 L1526.4 802.7 L1527.8 803.1 L1529.1 802.9 L1530.4 802.9 L1531.7 802.6 L1533.0 802.8 L1534.4 802.8 L1535.7 802.6 L1537.0 802.8 L1538.3 802.8 L1539.6 802.6 L1540.9 802.9 L1542.2 802.5 L1543.5 802.3 L1544.9 802.0 L1546.2 801.9 L1547.5 802.2 L1548.8 801.7 L1550.1 801.6 L1551.4 801.5 L1552.7 801.7 L1554.0 801.8 L1555.3 801.5 L1556.6 801.6 L1557.9 801.0 L1559.3 800.8 L1560.6 801.3 L1561.9 800.9 L1563.2 801.0 L1564.5 800.7 L1565.8 800.7 L1567.1 800.4 L1568.4 800.5 L1569.7 800.3 L1571.0 800.9 L1572.3 800.6 L1573.6 800.4 L1574.9 800.4 L1576.2 800.4 L1577.5 800.1 L1578.8 800.7 L1580.1 800.4 L1581.4 800.7 L1582.7 800.2 L1584.0 800.3 L1585.3 800.0 L1586.6 799.9 L1587.9 800.5 L1589.2 800.4 L1590.5 800.1 L1591.9 800.1 L1593.2 800.7 L1594.6 800.8 L1596.0 800.6 L1597.3 801.0 L1598.7 801.1 L1600.0 801.3 L1601.3 800.9 L1602.6 801.1 L1603.9 800.5 L1605.2 800.5 L1606.6 800.6 L1607.9 800.1 L1609.2 800.1 L1610.5 800.4 L1611.8 800.0 L1613.1 800.1 L1614.4 799.6 L1615.7 799.4 L1617.0 799.5 L1618.3 799.2 L1619.6 799.7 L1621.0 799.1 L1622.3 799.2 L1623.6 798.7 L1624.9 798.9 L1626.2 798.7 L1627.5 798.7 L1628.9 799.0 L1630.2 799.2 L1631.6 799.9 L1633.0 799.3 L1634.4 799.4 L1635.8 798.7 L1637.1 798.3 L1638.5 797.9 L1639.9 797.8 L1641.3 797.6 L1642.6 797.5 L1644.0 797.3 L1645.4 797.8 L1646.7 797.5 L1648.1 797.3 L1649.5 797.7 L1650.8 797.2 L1652.2 797.3 L1653.6 797.7 L1654.9 797.1 L1656.3 797.4 L1657.6 797.0 L1658.9 796.9 L1660.3 796.5 L1661.6 795.6 L1662.9 795.5 L1664.3 795.1 L1665.8 795.1 L1667.2 794.6 L1668.7 794.8 L1670.1 793.9 L1671.5 794.2 L1673.0 793.6 L1674.4 793.3 L1675.9 793.4 L1677.4 793.8 L1679.0 793.8 L1680.5 794.6 L1682.0 794.5 L1683.5 795.0 L1685.1 795.5 L1686.8 795.3 L1688.4 795.4 L1690.0 784.7 L1691.5 783.8 L1692.9 782.9 L1694.3 782.5 L1695.8 781.6 L1697.2 781.0 L1698.7 781.3 L1700.1 780.2 L1701.6 780.3 L1703.0 781.7 L1704.5 783.2 L1705.9 784.6 L1707.3 784.2 L1708.7 784.6 L1710.1 784.0 L1711.4 784.1 L1712.8 783.9 L1714.2 783.5 L1715.6 783.5 L1717.2 786.1 L1718.8 788.9 L1720.1 788.5 L1721.4 788.6 L1722.7 789.2 L1724.0 788.7 L1725.3 788.9 L1726.6 788.5 L1727.9 787.4 L1729.3 787.3 L1730.6 786.7 L1732.0 787.0 L1733.4 787.6 L1734.8 787.9 L1736.1 788.2 L1737.5 788.9 L1738.9 789.3 L1740.3 790.0 L1741.7 789.7 L1743.0 790.2 L1744.4 789.8 L1745.8 789.9 L1747.2 790.4 L1748.5 790.2 L1749.9 790.3 L1751.3 790.3 L1752.7 789.7 L1754.0 789.8 L1755.4 790.0 L1756.8 788.9 L1758.3 788.9 L1759.7 788.3 L1761.1 787.3 L1762.6 786.7 L1764.0 786.2 L1765.5 785.6 L1766.9 784.8 L1768.3 783.5 L1769.8 783.4 L1771.2 782.0 L1772.7 781.4 L1774.0 782.2 L1775.3 782.4 L1776.7 783.0 L1778.0 784.0 L1779.3 783.3 L1780.7 782.1 L1782.1 781.0 L1783.4 779.7 L1784.9 780.5 L1786.3 781.8 L1787.8 783.5 L1789.1 783.0 L1790.5 782.9 L1791.8 782.9 L1793.2 782.8 L1794.5 782.3 L1795.8 782.5 L1797.2 782.7 L1798.5 782.4 L1799.8 781.9 L1801.2 782.3 L1802.5 781.8 L1803.8 781.8 L1805.2 781.1 L1806.5 781.1 L1807.8 781.1 L1809.1 780.6 L1810.5 780.0 L1811.8 780.7 L1813.1 780.4 L1814.5 779.7 L1815.8 779.7 L1817.2 781.9 L1818.6 785.4 L1820.0 787.8 L1821.5 787.6 L1822.9 786.7 L1824.3 786.5 L1825.8 786.0 L1827.2 786.3 L1828.7 785.7 L1830.0 784.2 L1831.4 783.7 L1832.8 782.3 L1834.1 780.8 L1835.6 779.9 L1837.1 780.2 L1838.6 779.4 L1840.1 779.4 L1841.6 778.7 L1843.0 778.9 L1844.5 778.1 L1845.9 777.7 L1847.4 778.5 L1848.8 777.7 L1850.3 777.6 L1851.8 780.3 L1853.3 782.3 L1854.8 784.6 L1856.3 787.0 L1857.8 788.9 L1859.1 788.7 L1860.4 788.1 L1861.8 787.4 L1863.1 787.7 L1864.4 787.1 L1865.7 786.8 L1867.1 786.8 L1868.4 785.7 L1869.7 785.7 L1871.1 785.8 L1872.5 784.9 L1873.9 785.4 L1875.3 785.4 L1876.7 784.9 L1878.2 783.2 L1879.7 781.9 L1881.2 780.9 L1882.7 779.0 L1884.2 777.4 L1886.7 781.5 L1888.2 781.7 L1889.6 781.5 L1891.0 781.4 L1892.5 781.8 L1894.0 782.0 L1895.4 781.9 L1896.8 782.1 L1898.3 782.4 L1899.7 781.2 L1901.2 781.0 L1902.6 780.1 L1904.0 778.8 L1905.4 778.0 L1906.9 777.4 L1908.3 776.6 L1909.7 776.5 L1911.1 777.1 L1912.5 776.6 L1915.0 769.1 L1916.4 767.7 L1917.8 766.3 L1919.2 765.9 L1920.5 763.6 L1921.9 762.9 L1923.3 761.6 L1924.7 760.5 L1926.1 760.4 L1927.5 759.1 L1929.2 763.7 L1930.8 768.2 L1932.5 768.0 L1934.1 766.7 L1935.8 766.6 L1937.2 768.2 L1938.6 769.5 L1940.0 770.7 L1941.3 770.0 L1942.7 769.7 L1944.0 769.1 L1945.3 767.6 L1946.7 767.1 L1948.0 766.6 L1949.3 765.7 L1950.6 764.8 L1952.0 764.5 L1953.3 764.1 L1954.8 764.7 L1956.2 766.4 L1957.6 767.1 L1959.1 768.2 L1960.5 764.9 L1961.9 762.4 L1963.3 759.9 L1964.6 761.2 L1965.9 762.4 L1967.3 763.5 L1968.6 764.7 L1969.9 766.6 L1971.6 761.5 L1973.2 758.4 L1974.9 753.2 L1976.6 749.7 L1978.2 744.8 L1979.9 741.6 L1981.3 740.9 L1982.7 740.2 L1984.1 738.4 L1985.4 736.4 L1986.8 736.0 L1988.2 734.9 L1989.7 732.3 L1991.2 729.3 L1992.6 727.5 L1994.1 724.9 L1995.8 728.6 L1997.4 734.1 L1998.9 731.3 L2000.3 727.3 L2001.8 723.7 L2003.2 719.9 L2004.9 718.7 L2006.6 715.8 L2008.2 706.4 L2009.9 695.7 L2011.5 686.6 L2014.0 706.6 L2016.5 689.1 L2018.2 683.9 L2019.9 680.0 L2021.4 666.9 L2022.9 655.8 L2024.7 675.8 L2026.5 698.3 L2028.0 698.5 L2029.5 698.3 L2030.9 696.5 L2032.4 696.6 L2034.9 701.6 L2036.4 699.8 L2037.8 699.9 L2039.2 699.3 L2040.7 697.5 L2042.0 694.2 L2043.4 688.0 L2044.7 685.2 L2046.1 681.0 L2047.4 675.8 L2048.8 683.7 L2050.1 689.8 L2051.5 697.5 L2053.2 698.1 L2054.8 701.0 L2056.5 701.6 L2058.2 693.5 L2060.0 686.3 L2061.6 674.5 L2063.1 663.4 L2064.8 668.6 L2066.4 673.6 L2068.0 674.5 L2069.6 677.1 L2071.1 676.7 L2072.7 678.7 L2074.0 682.6 L2075.3 688.9 L2077.2 684.0 L2079.1 678.7 L2081.6 701.6 L2082.9 699.4 L2084.2 697.3 L2085.5 694.0 L2087.0 697.6 L2088.5 700.3 L2090.0 696.5 L2091.4 691.9 L2092.9 686.0 L2094.4 681.3 L2096.0 682.5 L2097.6 682.9 L2099.1 684.5 L2100.7 686.3 L2102.2 682.3 L2103.8 676.7 L2105.3 673.6 L2106.7 680.9 L2108.2 686.3 L2109.6 694.0 L2111.5 697.0 L2113.4 700.3 L2116.0 694.0 L2118.5 716.9 L2120.2 714.9 L2121.9 710.1 L2123.6 708.0 L2125.5 710.8 L2127.4 715.6 L2129.1 708.7 L2130.8 701.3 L2132.5 695.2 L2133.8 698.7 L2135.1 700.0 L2136.4 704.2 L2138.0 704.3 L2139.6 703.7 L2141.1 702.9 L2142.7 701.6 L2144.3 703.7 L2145.9 705.6 L2147.5 708.6 L2149.1 710.5 L2151.0 707.4 L2152.9 704.2 L2154.5 706.2 L2156.1 708.2 L2157.7 710.7 L2159.3 713.0 L2160.9 707.7 L2162.4 702.4 L2164.0 696.9 L2165.6 690.2 L2167.5 693.2 L2169.4 697.8 L2171.0 696.4 L2172.6 695.8 L2174.2 695.1 L2175.8 694.0 L2177.7 689.8 L2179.6 686.3 L2181.1 684.5 L2182.7 683.2 L2184.2 682.8 L2185.8 682.2 L2187.3 681.3 L2189.2 677.5 L2191.1 671.1 L2192.8 672.6 L2194.5 672.9 L2196.2 672.3 L2198.7 648.2 L2200.6 623.2 L2202.5 594.7 L2204.2 600.4 L2205.9 602.8 L2207.6 606.2 L2209.5 600.4 L2211.4 592.2 L2212.9 558.8 L2214.3 530.3 L2215.8 498.0 L2217.1 516.8 L2218.5 533.5 L2219.8 552.7 L2222.4 536.2 L2224.1 571.0 L2225.8 605.1 L2227.8 588.4 L2229.7 568.0 L2231.3 573.8 L2232.9 580.4 L2234.5 585.7 L2236.1 557.8 L2237.8 531.0 L2239.4 504.9 L2242.0 548.6 L2243.6 536.8 L2245.2 521.1 L2246.8 537.4 L2248.4 558.3 L2249.8 562.9 L2251.2 571.2 L2252.5 576.2 L2253.9 582.5 L2255.2 576.1 L2256.6 574.0 L2257.9 568.2 L2259.3 564.5 L2260.7 559.2 L2262.0 555.0 L2263.6 559.2 L2265.2 563.1 L2266.8 560.2 L2268.5 556.2 L2270.1 553.4 L2271.7 537.0 L2273.3 522.7 L2274.9 509.8 L2276.5 481.9 L2278.2 449.8 L2279.8 419.3 L2281.4 397.9 L2283.0 382.1 L2284.7 393.6 L2286.3 399.9 L2288.5 340.1 L2289.9 344.1 L2291.3 348.8 L2292.7 357.9 L2294.1 338.8 L2295.5 317.0 L2296.9 299.7 L2298.2 314.7 L2299.5 330.3 L2300.8 344.9 L2303.4 448.4 L2304.9 449.9 L2306.4 455.3 L2307.9 458.1 L2309.3 434.0 L2310.7 415.1 L2312.1 393.4 L2313.7 381.2 L2315.3 367.6 L2317.6 304.5 L2319.0 320.9 L2320.4 343.6 L2321.8 364.3 L2323.4 387.0 L2325.0 416.0 L2326.6 384.3 L2328.3 356.4 L2329.9 322.3 L2331.5 347.0 L2333.1 370.8 L2334.4 379.7 L2335.8 387.2 L2337.1 389.8 L2338.5 403.4 L2339.8 408.7 L2341.2 414.4 L2342.5 407.4 L2343.8 408.3 L2345.1 401.0 L2346.4 395.2 L2347.7 393.4 L2349.3 377.5 L2350.9 354.6 L2352.5 346.5 L2354.1 339.6 L2355.7 328.8 L2357.0 319.9 L2358.3 319.5 L2359.6 307.5 L2360.9 303.2 L2362.2 299.7 L2363.5 302.6 L2364.8 307.8 L2367.1 364.3 L2368.7 361.1" fill="none" stroke="#9cf5dc" stroke-width="1.85" stroke-linejoin="round"/><line x1="1336.5" y1="299.3" x2="1345.5" y2="299.3" stroke="#727272" stroke-width="1.2"/><line x1="1336.5" y1="540.6" x2="1345.5" y2="540.6" stroke="#727272" stroke-width="1.2"/><line x1="1336.5" y1="672" x2="1345.5" y2="672" stroke="#727272" stroke-width="1.2"/><line x1="1336.5" y1="803.5" x2="1345.5" y2="803.5" stroke="#727272" stroke-width="1.2"/><line x1="1432.9" y1="803.5" x2="1432.9" y2="812.5" stroke="#727272" stroke-width="1.2"/><line x1="1544.5" y1="803.5" x2="1544.5" y2="812.5" stroke="#727272" stroke-width="1.2"/><line x1="1656.4" y1="803.5" x2="1656.4" y2="812.5" stroke="#727272" stroke-width="1.2"/><line x1="1772.2" y1="803.5" x2="1772.2" y2="812.5" stroke="#727272" stroke-width="1.2"/><line x1="1887.7" y1="803.5" x2="1887.7" y2="812.5" stroke="#727272" stroke-width="1.2"/><line x1="1999.5" y1="803.5" x2="1999.5" y2="812.5" stroke="#727272" stroke-width="1.2"/><line x1="2111.4" y1="803.5" x2="2111.4" y2="812.5" stroke="#727272" stroke-width="1.2"/><line x1="2225.5" y1="803.5" x2="2225.5" y2="812.5" stroke="#727272" stroke-width="1.2"/><line x1="2368.6" y1="803.5" x2="2368.6" y2="812.5" stroke="#727272" stroke-width="1.2"/><path d="M1497.3 882.4h7.1M1511.2 882.4h7.1" stroke="#52d926" stroke-width="2.8" fill="none"/><circle cx="1507.8" cy="882.4" r="3.4" stroke="#52d926" stroke-width="2.6" fill="none"/><path d="M1587.1 882.4h7.1M1601.0 882.4h7.1" stroke="#3d1fd3" stroke-width="2.8" fill="none"/><circle cx="1597.6" cy="882.4" r="3.4" stroke="#3d1fd3" stroke-width="2.6" fill="none"/><path d="M1677.2 882.4h7.1M1691.1000000000001 882.4h7.1" stroke="#ffa500" stroke-width="2.8" fill="none"/><circle cx="1687.7" cy="882.4" r="3.4" stroke="#ffa500" stroke-width="2.6" fill="none"/><path d="M1766 882.4h7.1M1779.9 882.4h7.1" stroke="#ffc0cb" stroke-width="2.8" fill="none"/><circle cx="1776.5" cy="882.4" r="3.4" stroke="#ffc0cb" stroke-width="2.6" fill="none"/><path d="M1871.9 882.4h7.1M1885.8000000000002 882.4h7.1" stroke="#9cf5dc" stroke-width="2.8" fill="none"/><circle cx="1882.4" cy="882.4" r="3.4" stroke="#9cf5dc" stroke-width="2.6" fill="none"/></svg>
<div class="t" style="left:-754.90px;width:2000px;text-align:center;top:61.21px;font-size:32px;line-height:32px;font-weight:700;color:#fff;letter-spacing:-0.42px;">707,231</div>
<div class="t" style="left:-754.20px;width:2000px;text-align:center;top:116.93px;font-size:25.6px;line-height:25.6px;font-weight:400;color:#fff;letter-spacing:0px;">Total Users</div>
<div class="t" style="left:-270.10px;width:2000px;text-align:center;top:61.21px;font-size:32px;line-height:32px;font-weight:700;color:#fff;letter-spacing:0.62px;">$2,743,085,174,080</div>
<div class="t" style="left:-269.40px;width:2000px;text-align:center;top:116.93px;font-size:25.6px;line-height:25.6px;font-weight:400;color:#fff;letter-spacing:0px;">Total Volume</div>
<div class="t" style="left:214.70px;width:2000px;text-align:center;top:61.21px;font-size:32px;line-height:32px;font-weight:700;color:#fff;letter-spacing:0.42px;">$182,252,106,875</div>
<div class="t" style="left:215.40px;width:2000px;text-align:center;top:116.93px;font-size:25.6px;line-height:25.6px;font-weight:400;color:#fff;letter-spacing:0px;">Total Deposits (All Time)</div>
<div class="t" style="left:699.50px;width:2000px;text-align:center;top:61.21px;font-size:32px;line-height:32px;font-weight:700;color:#fff;letter-spacing:0.44px;">$176,464,487,201</div>
<div class="t" style="left:700.20px;width:2000px;text-align:center;top:116.93px;font-size:25.6px;line-height:25.6px;font-weight:400;color:#fff;letter-spacing:0px;">Total Withdrawals (All Time)</div>
<div class="t" style="left:1184.30px;width:2000px;text-align:center;top:61.21px;font-size:32px;line-height:32px;font-weight:700;color:#fff;letter-spacing:0.51px;">$72,772,761,803</div>
<div class="t" style="left:1185.00px;width:2000px;text-align:center;top:116.93px;font-size:25.6px;line-height:25.6px;font-weight:400;color:#fff;letter-spacing:0px;">Total Notional Liquidated</div>
<div class="t" style="left:43.30px;top:226.77px;font-size:29.8px;line-height:29.8px;font-weight:700;color:#fff;letter-spacing:0px;">Total Volume</div>
<div class="t" style="left:1248.50px;top:226.77px;font-size:29.8px;line-height:29.8px;font-weight:700;color:#fff;letter-spacing:0px;">Open Interest</div>
<div class="t" style="left:993.10px;top:231.83px;font-size:23px;line-height:23px;font-weight:400;color:#fff;letter-spacing:1.27px;">Select coins</div>
<svg style="position:absolute;left:1148px;top:241px" width="12" height="8"><path d="M1 1.2 L5.8 6 L10.6 1.2" fill="none" stroke="#fff" stroke-width="1.5"/></svg>
<div class="t" style="left:2199.10px;top:231.83px;font-size:23px;line-height:23px;font-weight:400;color:#fff;letter-spacing:1.27px;">Select coins</div>
<svg style="position:absolute;left:2354px;top:241px" width="12" height="8"><path d="M1 1.2 L5.8 6 L10.6 1.2" fill="none" stroke="#fff" stroke-width="1.5"/></svg>
<div class="t" style="left:-1857.60px;width:2000px;text-align:right;top:297.51px;font-size:25.5px;line-height:25.5px;font-weight:400;color:#fff;letter-spacing:-0.0px;margin-right:0">$30.0B</div>
<div class="t" style="left:-1857.60px;width:2000px;text-align:right;top:370.31px;font-size:25.5px;line-height:25.5px;font-weight:400;color:#fff;letter-spacing:-0.0px;margin-right:0">$25.0B</div>
<div class="t" style="left:-1857.60px;width:2000px;text-align:right;top:454.31px;font-size:25.5px;line-height:25.5px;font-weight:400;color:#fff;letter-spacing:-0.0px;margin-right:0">$20.0B</div>
<div class="t" style="left:-1857.60px;width:2000px;text-align:right;top:538.31px;font-size:25.5px;line-height:25.5px;font-weight:400;color:#fff;letter-spacing:-0.9px;margin-right:0">$15.0B</div>
<div class="t" style="left:-1857.60px;width:2000px;text-align:right;top:622.31px;font-size:25.5px;line-height:25.5px;font-weight:400;color:#fff;letter-spacing:-0.9px;margin-right:0">$10.0B</div>
<div class="t" style="left:-1857.60px;width:2000px;text-align:right;top:706.31px;font-size:25.5px;line-height:25.5px;font-weight:400;color:#fff;letter-spacing:-0.0px;margin-right:0">$5.00B</div>
<div class="t" style="left:-1857.60px;width:2000px;text-align:right;top:790.21px;font-size:25.5px;line-height:25.5px;font-weight:400;color:#fff;letter-spacing:-0.0px;margin-right:0">$0.0</div>
<div class="t" style="left:1085.90px;top:297.51px;font-size:25.5px;line-height:25.5px;font-weight:400;color:#fff;letter-spacing:0px;clip-path:inset(-10px calc(100% - 84px) -10px -10px);">$2800.0B</div>
<div class="t" style="left:1085.90px;top:412.61px;font-size:25.5px;line-height:25.5px;font-weight:400;color:#fff;letter-spacing:0px;clip-path:inset(-10px calc(100% - 84px) -10px -10px);">$2100.0B</div>
<div class="t" style="left:1085.90px;top:538.51px;font-size:25.5px;line-height:25.5px;font-weight:400;color:#fff;letter-spacing:0px;clip-path:inset(-10px calc(100% - 84px) -10px -10px);">$1400.0B</div>
<div class="t" style="left:1085.90px;top:664.41px;font-size:25.5px;line-height:25.5px;font-weight:400;color:#fff;letter-spacing:0px;clip-path:inset(-10px calc(100% - 84px) -10px -10px);">$700.0B</div>
<div class="t" style="left:1085.90px;top:790.21px;font-size:25.5px;line-height:25.5px;font-weight:400;color:#fff;letter-spacing:0px;clip-path:inset(-10px calc(100% - 84px) -10px -10px);">$0.0</div>
<div class="t" style="left:-821.90px;width:2000px;text-align:center;top:823.61px;font-size:25.5px;line-height:25.5px;font-weight:400;color:#fff;letter-spacing:1.0px;">06-07</div>
<div class="t" style="left:-710.60px;width:2000px;text-align:center;top:823.61px;font-size:25.5px;line-height:25.5px;font-weight:400;color:#fff;letter-spacing:-0.5px;">15-10</div>
<div class="t" style="left:-602.40px;width:2000px;text-align:center;top:823.61px;font-size:25.5px;line-height:25.5px;font-weight:400;color:#fff;letter-spacing:-0.5px;">21-01</div>
<div class="t" style="left:-489.00px;width:2000px;text-align:center;top:823.61px;font-size:25.5px;line-height:25.5px;font-weight:400;color:#fff;letter-spacing:1.0px;">03-05</div>
<div class="t" style="left:-375.00px;width:2000px;text-align:center;top:823.61px;font-size:25.5px;line-height:25.5px;font-weight:400;color:#fff;letter-spacing:0.25px;">15-08</div>
<div class="t" style="left:-266.00px;width:2000px;text-align:center;top:823.61px;font-size:25.5px;line-height:25.5px;font-weight:400;color:#fff;letter-spacing:-1.25px;">21-11</div>
<div class="t" style="left:-157.00px;width:2000px;text-align:center;top:823.61px;font-size:25.5px;line-height:25.5px;font-weight:400;color:#fff;letter-spacing:0.25px;">01-03</div>
<div class="t" style="left:-43.00px;width:2000px;text-align:center;top:823.61px;font-size:25.5px;line-height:25.5px;font-weight:400;color:#fff;letter-spacing:0.25px;">12-06</div>
<div class="t" style="left:72.50px;width:2000px;text-align:center;top:823.61px;font-size:25.5px;line-height:25.5px;font-weight:400;color:#fff;letter-spacing:1.0px;">24-09</div>
<div class="t" style="left:359.40px;top:868.11px;font-size:25.5px;line-height:25.5px;font-weight:400;color:#52d926;letter-spacing:0px;">BTC</div>
<div class="t" style="left:449.50px;top:868.11px;font-size:25.5px;line-height:25.5px;font-weight:400;color:#3d1fd3;letter-spacing:0px;">ETH</div>
<div class="t" style="left:539.60px;top:868.11px;font-size:25.5px;line-height:25.5px;font-weight:400;color:#ffa500;letter-spacing:0px;">SOL</div>
<div class="t" style="left:628.80px;top:868.11px;font-size:25.5px;line-height:25.5px;font-weight:400;color:#ffc0cb;letter-spacing:0px;">Other</div>
<div class="t" style="left:735.00px;top:868.11px;font-size:25.5px;line-height:25.5px;font-weight:400;color:#9cf5dc;letter-spacing:0px;">Cumulative</div>
<div class="t" style="left:-657.60px;width:2000px;text-align:right;top:297.31px;font-size:25.5px;line-height:25.5px;font-weight:400;color:#fff;letter-spacing:-0.9px;">$15.3B</div>
<div class="t" style="left:-657.60px;width:2000px;text-align:right;top:527.61px;font-size:25.5px;line-height:25.5px;font-weight:400;color:#fff;letter-spacing:-0.0px;">$8.00B</div>
<div class="t" style="left:-657.60px;width:2000px;text-align:right;top:659.01px;font-size:25.5px;line-height:25.5px;font-weight:400;color:#fff;letter-spacing:-0.0px;">$4.00B</div>
<div class="t" style="left:-657.60px;width:2000px;text-align:right;top:790.51px;font-size:25.5px;line-height:25.5px;font-weight:400;color:#fff;letter-spacing:-0.0px;">$0.0</div>
<div class="t" style="left:432.90px;width:2000px;text-align:center;top:823.61px;font-size:25.5px;line-height:25.5px;font-weight:400;color:#fff;letter-spacing:1.0px;">25-08</div>
<div class="t" style="left:544.50px;width:2000px;text-align:center;top:823.61px;font-size:25.5px;line-height:25.5px;font-weight:400;color:#fff;letter-spacing:-0.5px;">24-11</div>
<div class="t" style="left:656.40px;width:2000px;text-align:center;top:823.61px;font-size:25.5px;line-height:25.5px;font-weight:400;color:#fff;letter-spacing:1.0px;">23-02</div>
<div class="t" style="left:772.20px;width:2000px;text-align:center;top:823.61px;font-size:25.5px;line-height:25.5px;font-weight:400;color:#fff;letter-spacing:1.0px;">27-05</div>
<div class="t" style="left:887.70px;width:2000px;text-align:center;top:823.61px;font-size:25.5px;line-height:25.5px;font-weight:400;color:#fff;letter-spacing:1.0px;">29-08</div>
<div class="t" style="left:999.50px;width:2000px;text-align:center;top:823.61px;font-size:25.5px;line-height:25.5px;font-weight:400;color:#fff;letter-spacing:-0.5px;">28-11</div>
<div class="t" style="left:1111.40px;width:2000px;text-align:center;top:823.61px;font-size:25.5px;line-height:25.5px;font-weight:400;color:#fff;letter-spacing:1.0px;">27-02</div>
<div class="t" style="left:1225.50px;width:2000px;text-align:center;top:823.61px;font-size:25.5px;line-height:25.5px;font-weight:400;color:#fff;letter-spacing:0.25px;">31-05</div>
<div class="t" style="left:1368.60px;width:2000px;text-align:center;top:823.61px;font-size:25.5px;line-height:25.5px;font-weight:400;color:#fff;letter-spacing:1.0px;">24-09</div>
<div class="t" style="left:1525.40px;top:868.11px;font-size:25.5px;line-height:25.5px;font-weight:400;color:#52d926;letter-spacing:0px;">BTC</div>
<div class="t" style="left:1615.00px;top:868.11px;font-size:25.5px;line-height:25.5px;font-weight:400;color:#3d1fd3;letter-spacing:0px;">ETH</div>
<div class="t" style="left:1705.00px;top:868.11px;font-size:25.5px;line-height:25.5px;font-weight:400;color:#ffa500;letter-spacing:0px;">SOL</div>
<div class="t" style="left:1793.20px;top:868.11px;font-size:25.5px;line-height:25.5px;font-weight:400;color:#ffc0cb;letter-spacing:0px;">Other</div>
<div class="t" style="left:1900.10px;top:868.11px;font-size:25.5px;line-height:25.5px;font-weight:400;color:#9cf5dc;letter-spacing:0.1px;">Total open interest</div>
<div class="t" style="left:1248.00px;top:915.61px;font-size:25.5px;line-height:25.5px;font-weight:400;color:#c8c8c8;letter-spacing:0.15px;">Before March 22, 2024, this showed one-sided open interest. It now shows two-sided open interest</div>
<div class="t" style="left:1248.50px;top:951.61px;font-size:25.5px;line-height:25.5px;font-weight:400;color:#c8c8c8;letter-spacing:0.1px;">to address user confusion.</div>
</body></html>
